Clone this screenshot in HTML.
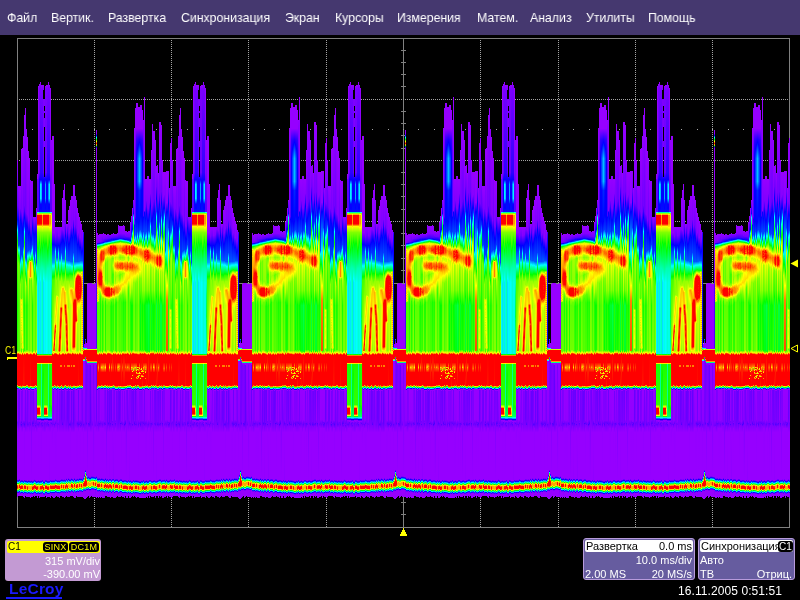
<!DOCTYPE html>
<html><head><meta charset="utf-8"><title>LeCroy</title>
<style>
html,body{margin:0;padding:0;background:#000;}
body{width:800px;height:600px;position:relative;overflow:hidden;font-family:"Liberation Sans",sans-serif;color:#fff;}
#menu{position:absolute;left:0;top:0;width:800px;height:35px;background:#45386f;}
#menu span{position:absolute;top:9.5px;font-size:13px;line-height:15px;color:#fff;white-space:nowrap;transform:scaleX(.945);transform-origin:0 0;}
#grid{position:absolute;left:17px;top:38px;width:771px;height:488px;border:1px solid #808080;}
.hl{position:absolute;left:18px;width:771px;height:1px;background:repeating-linear-gradient(90deg,#000 0,#000 1px,#a4a4a4 1px,#a4a4a4 2px);}
.vl{position:absolute;top:39px;width:1px;height:488px;background:repeating-linear-gradient(180deg,#000 0,#000 1px,#a4a4a4 1px,#a4a4a4 2px);}
#wave{position:absolute;left:17px;top:38px;width:773px;height:490px;overflow:hidden;}
.per{position:absolute;top:0;height:490px;white-space:nowrap;font-size:0;line-height:0;display:flex;}
.per i{display:block;width:1px;height:490px;flex:none;}
.bdg{position:absolute;top:542px;height:10px;background:#000;border-radius:3px;color:#ffff00;font-size:9px;line-height:10px;text-align:center;letter-spacing:0.3px;}
.wr{position:absolute;font-size:11px;line-height:13px;color:#fff;text-align:right;white-space:nowrap;}
.pb{position:absolute;top:538px;height:40px;background:#665c9f;border:1px solid #b79bdb;border-radius:3px;}
.wh{position:absolute;top:540px;height:12px;background:#fff;border-radius:2px;}
.bk{position:absolute;top:540px;font-size:11px;line-height:12px;color:#000;white-space:nowrap;}
.sp{position:absolute;display:block;width:1px;top:92px;height:218px;background:linear-gradient(#9600ff 0,#9600ff 3.5px,#00f 5.5px,#0ff 7.5px,#0f0 9.5px,#ff0 11.5px,#f00 13.5px,#ff0 15px,#0f0 16px,#00f 17px,#9600ff 18.5px,#9600ff 150px,#4b00ff 156px,#4b00ff 218px)}
#menu span,.wr,.bk,.bdg,.t{will-change:transform}
.c0{background:linear-gradient(#0000 0px,#0000 195px,#9600ff 195px,#9600ff 195.5px,#8100ff 204.5px,#00f 205.8px,#0ff 207.3px,#00ff2b 208.5px,#0f0 209px,#ff0 211.8px,#ffbc00 212.5px,#ffe300 213.5px,#fb0 217.5px,#ffde00 218.5px,#ffb800 219.5px,#f90 243.5px,#ffb700 248.5px,#ffe800 249.5px,#ffba00 250.5px,#ffe400 251.5px,#ffc000 255.5px,#ff0 256.4px,#f6ff00 256.5px,#ff0 256.6px,#ffc400 257.5px,#ffeb00 258.5px,#ffcf00 260.5px,#ff0 261.2px,#efff00 261.5px,#ff0 261.7px,#ffc400 262.5px,#ff0 263px,#45ff00 264.5px,#3aff00 265.5px,#52ff00 312.5px,#baff00 314.5px,#ff0 315.2px,#ffe700 315.5px,#ff3d00 316.5px,#f00 317.5px,#f00 347.5px,#ff5e00 348.5px,#ff0 349px,#0f0 349.8px,#0ff 350.7px,#00f 351.5px,#0500ff 351.5px,#9600ff 352.5px,#8b00ff 382.5px,#6d00ff 387.5px,#80f 388.5px,#9600ff 394.5px,#9600ff 439.5px,#6a00ff 440.5px,#00f 441.6px,#00a0ff 442.5px,#0ff 442.9px,#0f0 444px,#ff0 445.1px,#ffa900 445.5px,#f00 446.5px,#f00 448.5px,#ffbc00 449.5px,#ff0 449.7px,#0f0 450.6px,#00ffef 451.5px,#0ff 451.6px,#00f 452.7px,#7500ff 453.5px,#9600ff 454.5px,#9600ff 459px,#0000 459px,#0000 490px)}
.c1{background:linear-gradient(#0000 0px,#0000 197px,#9600ff 197px,#9600ff 197.5px,#7200ff 204.5px,#00f 205.6px,#0ff 207.1px,#00ff0b 208.5px,#0f0 208.7px,#ff0 212.2px,#ffeb00 212.5px,#ff0 213.1px,#f3ff00 213.5px,#ff0 213.8px,#ffe500 214.5px,#ffa300 228.5px,#ff1a00 240.5px,#ff5400 245.5px,#ff0 250.8px,#e7ff00 251.5px,#cdff00 254.5px,#f7ff00 255.5px,#abff00 256.5px,#f2ff00 257.5px,#cfff00 258.5px,#ecff00 260.5px,#baff00 261.5px,#f8ff00 262.5px,#52ff00 264.5px,#4bff00 265.5px,#63ff00 313.5px,#f0ff00 315.5px,#ff0 315.6px,#f00 317.5px,#f00 324.5px,#ffa700 329.5px,#f00 334.5px,#f00 346.5px,#ff6b00 347.5px,#ff0 348px,#0f0 348.8px,#0ff 349.6px,#00f 350.4px,#0d00ff 350.5px,#9600ff 351.5px,#7d00ff 352.5px,#8000ff 382.5px,#60f 385.5px,#9600ff 394.5px,#9600ff 439.5px,#7300ff 440.5px,#00f 441.6px,#0091ff 442.5px,#0ff 443px,#0f0 444.1px,#ff0 445.2px,#ffba00 445.5px,#f00 446.5px,#f00 448.5px,#ffa600 449.5px,#ff0 449.8px,#0f0 450.7px,#00ffd9 451.5px,#0ff 451.7px,#00f 452.7px,#6a00ff 453.5px,#9600ff 454.5px,#9600ff 460px,#0000 460px,#0000 490px)}
.c2{background:linear-gradient(#0000 0px,#0000 196px,#9600ff 196px,#9600ff 196.5px,#8500ff 202.5px,#6200ff 204.5px,#00f 205.5px,#0ff 206.9px,#0f0 208.4px,#15ff00 208.5px,#6bff00 209.5px,#ef0 212.5px,#ff0 213.5px,#ffa800 218.5px,#ff9200 229.5px,#ff0100 235.5px,#ff0e00 246.5px,#ff0 250.9px,#deff00 251.5px,#abff00 253.5px,#48ff00 265.5px,#60ff00 312.5px,#f5ff00 314.5px,#ff0 314.6px,#f00 316.5px,#f00 346.5px,#ff1300 347.5px,#ff0 348.3px,#0f0 349.1px,#0ff 349.9px,#00f 350.7px,#9600ff 351.5px,#8000ff 352.5px,#8300ff 382.5px,#7e00ff 384.5px,#5c00ff 385.5px,#8a00ff 389.5px,#9600ff 394.5px,#9600ff 439.5px,#5b00ff 440.5px,#00f 441.4px,#00b9ff 442.5px,#0ff 442.8px,#0f0 443.9px,#ff0 445px,#ff8b00 445.5px,#f00 446.5px,#f00 448.5px,#ffe300 449.5px,#ff0 449.6px,#0f0 450.4px,#00ff17 450.5px,#0ff 451.4px,#00f 452.4px,#0b00ff 452.5px,#80f 453.5px,#9600ff 458.5px,#9600ff 459px,#0000 459px,#0000 490px)}
.c3{background:linear-gradient(#0000 0px,#0000 196px,#9500ff 196px,#9500ff 196.5px,#7300ff 203.5px,#4f00ff 204.5px,#00f 205.3px,#0ff 206.7px,#0f0 208.2px,#37ff00 208.5px,#ff0 211.8px,#ff9600 213.5px,#ff3400 216.5px,#ff3a00 220.5px,#ffa600 228.5px,#ff9b00 230.5px,#f00 234.5px,#f00 246.5px,#fff800 251.5px,#ff0 251.7px,#7eff00 255.5px,#2bff00 260.5px,#18ff00 267.5px,#2fff00 312.5px,#a8ff00 314.5px,#ff0 315.1px,#ff3900 316.5px,#f00 317.5px,#f00 324.5px,#ff4900 329.5px,#f00 334.5px,#f00 347.5px,#ff0 348.3px,#0f0 349.2px,#0ff 350px,#006aff 350.5px,#00f 350.8px,#9600ff 351.5px,#9400ff 381.5px,#6800ff 385.5px,#9500ff 390.5px,#9600ff 440.5px,#00f 442px,#00faff 443.5px,#0ff 443.5px,#0f0 444.5px,#f7ff00 445.5px,#ff0 445.7px,#ffa600 447.5px,#ffbe00 449.5px,#ff0 449.9px,#a9ff00 450.5px,#0f0 451.2px,#0ff 452.1px,#00f 453.1px,#3b00ff 453.5px,#9600ff 454.5px,#9600ff 460px,#0000 460px,#0000 490px)}
.c4{background:linear-gradient(#0000 0px,#0000 196px,#9500ff 196px,#9500ff 196.5px,#6800ff 203.5px,#3900ff 204.5px,#00f 205.1px,#0ff 206.5px,#0f0 208px,#5cff00 208.5px,#ff0 210.7px,#ff3600 213.5px,#ff1900 214.5px,#ff1900 221.5px,#f90 225.5px,#ffcd00 229.5px,#ffad00 231.5px,#f00 235.5px,#ff0900 246.5px,#ff0 254.8px,#93ff00 258.5px,#5aff00 266.5px,#71ff00 312.5px,#e2ff00 314.5px,#ff0 314.7px,#f00 316.5px,#f00 324.5px,#ff5f00 327.5px,#ffe000 329.5px,#ff5800 331.5px,#f00 334.5px,#f00 346.5px,#ff9000 347.5px,#ff0 347.9px,#0f0 348.7px,#0ff 349.5px,#00f 350.3px,#2300ff 350.5px,#9600ff 351.5px,#8e00ff 382.5px,#7200ff 385.5px,#9400ff 390.5px,#9600ff 439.5px,#6800ff 440.5px,#00f 441.5px,#00a3ff 442.5px,#0ff 442.9px,#0f0 444px,#ff0 445.1px,#ffa400 445.5px,#f00 446.5px,#f00 448.5px,#ffc200 449.5px,#ff0 449.7px,#0cff00 450.5px,#0f0 450.6px,#0ff 451.6px,#00f 452.7px,#7800ff 453.5px,#9600ff 454.5px,#9600ff 459px,#0000 459px,#0000 490px)}
.c5{background:linear-gradient(#0000 0px,#0000 196px,#9400ff 196px,#9400ff 196.5px,#5800ff 203.5px,#1f00ff 204.5px,#00f 204.8px,#0ff 206.3px,#0f0 207.8px,#7fff00 208.5px,#ff0 210.5px,#ff4300 213.5px,#ff3f00 221.5px,#ffd900 225.5px,#fff900 229.5px,#ffac00 237.5px,#ff6800 238.5px,#ff9200 241.5px,#ff6f00 242.5px,#ff7900 252.5px,#ffad00 255.5px,#ff0 257.3px,#6fff00 260.5px,#26ff00 263.5px,#14ff00 271.5px,#2aff00 313.5px,#f4ff00 315.5px,#ff0 315.6px,#f60 316.5px,#f00 317.5px,#f00 324.5px,#ffb400 329.5px,#f00 334.5px,#f00 346.5px,#ff5900 347.5px,#ff0 348px,#0f0 348.9px,#0ff 349.7px,#00f 350.5px,#0200ff 350.5px,#9600ff 351.5px,#9000ff 382.5px,#6500ff 386.5px,#9400ff 390.5px,#9600ff 439.5px,#8400ff 440.5px,#00f 441.8px,#0073ff 442.5px,#0ff 443.3px,#00ffd2 443.5px,#0f0 444.4px,#ff0 445.4px,#fff300 445.5px,#ffa600 447.5px,#ffd000 449.5px,#ff0 449.7px,#67ff00 450.5px,#0f0 450.9px,#0ff 451.9px,#00f 452.9px,#50f 453.5px,#9600ff 454.5px,#9600ff 460px,#0000 460px,#0000 490px)}
.c6{background:linear-gradient(#0000 0px,#0000 195px,#9500ff 195px,#9500ff 195.5px,#7d00ff 200.5px,#40f 203.5px,#00f 204.5px,#0001ff 204.5px,#0ff 205.8px,#00ff83 206.5px,#0f0 207.4px,#af0 208.5px,#ff0 210px,#ff3c00 213.5px,#ff2100 215.5px,#ff4800 217.5px,#ff3200 221.5px,#fff600 224.5px,#ff0 225px,#b6ff00 229.5px,#f6ff00 242.5px,#ff0 242.9px,#ff5800 250.5px,#ff4e00 254.5px,#ff0 257.9px,#76ff00 260.5px,#3eff00 267.5px,#54ff00 311.5px,#c1ff00 313.5px,#ff0 314.1px,#ffdb00 314.5px,#ff3100 315.5px,#f00 316.5px,#f00 324.5px,#ff9600 328.5px,#ff8900 330.5px,#f00 334.5px,#f00 347.5px,#ff0 348.5px,#f2ff00 348.5px,#0f0 349.3px,#0ff 350.1px,#0072ff 350.5px,#00f 350.8px,#9600ff 351.5px,#9000ff 381.5px,#70f 385.5px,#9400ff 390.5px,#9600ff 440.5px,#00f 442.1px,#00edff 443.5px,#0ff 443.6px,#0f0 444.6px,#e4ff00 445.5px,#ff0 446px,#ffa600 447.5px,#ffb700 449.5px,#ff0 450px,#c1ff00 450.5px,#0f0 451.2px,#0ff 452.1px,#009aff 452.5px,#00f 453.1px,#3100ff 453.5px,#9600ff 454.5px,#9600ff 460px,#0000 460px,#0000 490px)}
.c7{background:linear-gradient(#0000 0px,#0000 196px,#9300ff 196px,#9300ff 196.5px,#7600ff 200.5px,#2c00ff 203.5px,#00f 204px,#003fff 204.5px,#0ff 205.5px,#00ff46 206.5px,#0f0 207px,#d5ff00 208.5px,#ff0 209.3px,#fb0 210.5px,#ff5900 214.5px,#ff8f00 220.5px,#ff0 223.2px,#f1ff00 223.5px,#c3ff00 227.5px,#d4ff00 242.5px,#ff0 245.1px,#ffe800 246.5px,#ff2000 252.5px,#f40 256.5px,#ffb800 257.5px,#ff0 258.9px,#abff00 260.5px,#74ff00 264.5px,#89ff00 312.5px,#f9ff00 314.5px,#ff0 314.5px,#f00 316.5px,#f00 324.5px,#ff8a00 329.5px,#f00 334.5px,#f00 346.5px,#ff8300 347.5px,#ff0 347.9px,#0f0 348.7px,#0ff 349.5px,#00f 350.4px,#1b00ff 350.5px,#9600ff 351.5px,#8100ff 352.5px,#8500ff 383.5px,#5900ff 385.5px,#8900ff 388.5px,#9600ff 394.5px,#9600ff 440.5px,#6f00ff 441.5px,#00f 442.6px,#0098ff 443.5px,#0ff 443.9px,#0f0 445.1px,#ff0 446.2px,#ffb200 446.5px,#f00 447.5px,#f00 449.5px,#ffb000 450.5px,#ff0 450.8px,#0f0 451.7px,#00ffe3 452.5px,#0ff 452.6px,#00f 453.7px,#6f00ff 454.5px,#9600ff 455.5px,#9600ff 460px,#0000 460px,#0000 490px)}
.c8{background:linear-gradient(#0000 0px,#0000 196px,#9200ff 196px,#9200ff 196.5px,#7100ff 200.5px,#1b00ff 203.5px,#00f 203.8px,#0ff 205.2px,#0f0 206.7px,#89ff00 207.5px,#efff00 208.5px,#ff0 209px,#ffa900 211.5px,#ff8e00 215.5px,#ff0 218.9px,#87ff00 222.5px,#59ff00 225.5px,#58ff00 241.5px,#bcff00 246.5px,#ff0 247.4px,#f00 251px,#f00 256.9px,#ff0 259.2px,#75ff00 260.5px,#21ff00 263.5px,#10ff00 267.5px,#26ff00 312.5px,#e0ff00 314.5px,#ff0 314.7px,#f00 316.5px,#f00 324.5px,#fffa00 329.5px,#ff7400 331.5px,#f00 334.5px,#f00 346.5px,#ffad00 347.5px,#ff0 347.8px,#0f0 348.6px,#0ff 349.4px,#00f 350.2px,#3400ff 350.5px,#9600ff 351.5px,#7500ff 352.5px,#7c00ff 383.5px,#6000ff 386.5px,#8200ff 387.5px,#9600ff 394.5px,#9600ff 439.5px,#60f 440.5px,#00f 441.5px,#00a7ff 442.5px,#0ff 442.9px,#0f0 444px,#ff0 445.1px,#ffa000 445.5px,#f00 446.5px,#f00 448.5px,#ffc800 449.5px,#ff0 449.7px,#05ff00 450.5px,#0f0 450.5px,#0ff 451.6px,#00f 452.6px,#7b00ff 453.5px,#9600ff 454.5px,#9600ff 458px,#0000 458px,#0000 490px)}
.c9{background:linear-gradient(#0000 0px,#0000 197px,#8e00ff 197px,#8e00ff 197.5px,#6c00ff 200.5px,#0b00ff 203.5px,#00f 203.6px,#0ff 205.1px,#0f0 206.5px,#acff00 207.5px,#ff0 208.4px,#fff900 208.5px,#ff8900 211.5px,#ff9f00 215.5px,#ff0 218.4px,#baff00 220.5px,#80ff00 224.5px,#7eff00 241.5px,#a5ff00 245.5px,#e9ff00 247.5px,#ff0 247.7px,#f00 250.3px,#f00 257.6px,#fff200 259.5px,#ff0 259.7px,#90ff00 261.5px,#5eff00 267.5px,#74ff00 313.5px,#faff00 315.5px,#ff0 315.5px,#f00 317.5px,#f00 347.5px,#fff000 348.5px,#ff0 348.5px,#0f0 349.4px,#0ff 350.2px,#0091ff 350.5px,#00f 350.9px,#9600ff 351.5px,#8000ff 384.5px,#9600ff 440.5px,#7d00ff 441.5px,#00f 442.7px,#0080ff 443.5px,#0ff 444.1px,#0f0 445.2px,#ff0 446.4px,#ff0900 447.5px,#f00 449.5px,#ff8d00 450.5px,#ff0 450.9px,#0f0 451.8px,#00ffc0 452.5px,#0ff 452.8px,#00f 453.8px,#5e00ff 454.5px,#9600ff 455.5px,#9600ff 458px,#0000 458px,#0000 490px)}
.c10{background:linear-gradient(#0000 0px,#0000 196px,#9100ff 196px,#9100ff 196.5px,#6500ff 200.5px,#00f 203.3px,#0009ff 203.5px,#0ff 204.8px,#0f0 206.2px,#3eff00 206.5px,#c8ff00 207.5px,#ff0 208.1px,#fd0 208.5px,#ff9100 210.5px,#ff7900 214.5px,#ff0 217.8px,#b9ff00 219.5px,#6eff00 223.5px,#61ff00 241.5px,#7eff00 245.5px,#c5ff00 247.5px,#ff0 248px,#f00 250.2px,#f00 257.8px,#ffdc00 259.5px,#ff0 260px,#96ff00 261.5px,#5bff00 267.5px,#70ff00 311.5px,#ff0 314.4px,#fff800 314.5px,#ff4e00 315.5px,#f00 316.5px,#f00 346.5px,#ff7a00 347.5px,#ff0 347.9px,#0f0 348.7px,#0ff 349.6px,#00f 350.4px,#1600ff 350.5px,#9600ff 351.5px,#6a00ff 352.5px,#60f 385.5px,#9600ff 394.5px,#9500ff 440.5px,#00f 442px,#0ff 443.5px,#00fffc 443.5px,#0f0 444.5px,#ff0 445.5px,#fffd00 445.5px,#ff3900 446.5px,#f00 448.5px,#ff4f00 449.5px,#ff0 450.1px,#0f0 451.1px,#0ff 452px,#007dff 452.5px,#00f 453px,#4000ff 453.5px,#9600ff 454.5px,#9600ff 459px,#0000 459px,#0000 490px)}
.c11{background:linear-gradient(#0000 0px,#0000 196px,#8f00ff 196px,#8f00ff 196.5px,#5d00ff 200.5px,#00f 202.9px,#0027ff 203.5px,#0ff 204.6px,#0f0 205.9px,#6fff00 206.5px,#f7ff00 207.5px,#ff0 207.6px,#ff6e00 209.5px,#ff3e00 212.5px,#ff8100 215.5px,#ff0 218.3px,#c7ff00 219.5px,#97ff00 222.5px,#89ff00 243.5px,#d3ff00 247.5px,#ff0 247.9px,#f00 250.2px,#f00 257.8px,#ffc200 259.5px,#ff0 260.3px,#af0 261.5px,#68ff00 264.5px,#5cff00 268.5px,#71ff00 311.5px,#d0ff00 313.5px,#ff0 314.1px,#fd0 314.5px,#f30 315.5px,#f00 316.5px,#f00 347.5px,#ffba00 348.5px,#ff0 348.7px,#0f0 349.5px,#0ff 350.4px,#00f 351.2px,#3c00ff 351.5px,#9600ff 352.5px,#7600ff 353.5px,#7d00ff 383.5px,#5200ff 385.5px,#80f 388.5px,#9600ff 394.5px,#9600ff 441.5px,#00f 443px,#00feff 444.5px,#0ff 444.5px,#0f0 445.5px,#fdff00 446.5px,#ff0 446.5px,#ff3d00 447.5px,#f00 449.5px,#ff4a00 450.5px,#ff0 451.2px,#0f0 452.1px,#0ff 453px,#0082ff 453.5px,#00f 454.1px,#3d00ff 454.5px,#9600ff 455.5px,#9600ff 459px,#0000 459px,#0000 490px)}
.c12{background:linear-gradient(#0000 0px,#0000 197px,#80f 197px,#80f 197.5px,#5600ff 200.5px,#0d00ff 202.5px,#00f 202.7px,#0047ff 203.5px,#0ff 204.4px,#00ff18 205.5px,#0f0 205.6px,#ff0 207.2px,#ffd200 207.5px,#ff3d00 210.5px,#ff4a00 214.5px,#ff0 217.9px,#e1ff00 218.5px,#a4ff00 221.5px,#8bff00 243.5px,#cf0 247.5px,#ff0 248px,#f00 250.4px,#f00 257.8px,#fb0 259.5px,#ff0 260.4px,#afff00 261.5px,#69ff00 264.5px,#5dff00 268.5px,#73ff00 312.5px,#ff0 314.5px,#ff0 314.5px,#f50 315.5px,#f00 316.5px,#f00 324.5px,#ffe300 329.5px,#ff5900 331.5px,#f00 334.5px,#f00 346.5px,#ff4c00 347.5px,#ff0 348.1px,#0f0 348.9px,#0ff 349.7px,#000aff 350.5px,#00f 350.5px,#9600ff 351.5px,#6b00ff 352.5px,#6500ff 385.5px,#9600ff 394.5px,#9200ff 440.5px,#00f 442px,#0ff 443.4px,#00fff5 443.5px,#0f0 444.5px,#ff0 445.5px,#fff700 445.5px,#f30 446.5px,#f00 448.5px,#ff5600 449.5px,#ff0 450.1px,#0f0 451.1px,#0ff 452px,#0076ff 452.5px,#00f 453px,#4300ff 453.5px,#9600ff 454.5px,#9600ff 459px,#0000 459px,#0000 490px)}
.c13{background:linear-gradient(#0000 0px,#0000 197px,#8500ff 197px,#8500ff 197.5px,#4d00ff 200.5px,#00f 202.1px,#006dff 203.5px,#0ff 204.2px,#0f0 205.4px,#ebff00 206.5px,#ff0 206.6px,#f00 208.4px,#f00 215.6px,#ff0 218.2px,#e7ff00 218.5px,#9dff00 221.5px,#8eff00 245.5px,#e1ff00 248.5px,#ff0 248.9px,#ff4600 251.5px,#ff6900 252.5px,#ff3100 255.5px,#ff4800 257.5px,#ff0 259.8px,#c3ff00 260.5px,#69ff00 262.5px,#2dff00 268.5px,#43ff00 312.5px,#d0ff00 314.5px,#ff0 314.8px,#ff0400 316.5px,#f00 347.5px,#ffe800 348.5px,#ff0 348.6px,#0f0 349.4px,#0ff 350.2px,#09f 350.5px,#00f 350.9px,#9600ff 351.5px,#6b00ff 352.5px,#70f 384.5px,#5600ff 385.5px,#8700ff 389.5px,#9600ff 394.5px,#9600ff 440.5px,#00f 442px,#00f6ff 443.5px,#0ff 443.5px,#0f0 444.5px,#f2ff00 445.5px,#ff0 445.6px,#ff4500 446.5px,#f00 447.5px,#f00 448.5px,#ff3f00 449.5px,#ff0 450.2px,#0f0 451.1px,#0ff 452.1px,#008dff 452.5px,#00f 453.1px,#3800ff 453.5px,#9600ff 454.5px,#9600ff 460px,#0000 460px,#0000 490px)}
.c14{background:linear-gradient(#0000 0px,#0000 196px,#8b00ff 196px,#8b00ff 196.5px,#5f00ff 199.5px,#00f 201.9px,#0026ff 202.5px,#00b0ff 203.5px,#0ff 203.9px,#0f0 205.2px,#ff0 206.4px,#ffef00 206.5px,#f00 208.2px,#f00 215.8px,#ff0 218.1px,#cdff00 218.5px,#89ff00 220.5px,#59ff00 239.5px,#83ff00 246.5px,#a9ff00 247.5px,#ff0 248.5px,#ffa300 249.5px,#f00 250.5px,#f00 251.7px,#ff0900 255.5px,#f00 255.7px,#f00 256.9px,#ff0 259.5px,#a4ff00 260.5px,#71ff00 261.5px,#21ff00 264.5px,#13ff00 268.5px,#29ff00 312.5px,#9dff00 314.5px,#ff0 315.2px,#ff4500 316.5px,#f00 317.5px,#f00 324.5px,#ff9000 329.5px,#f00 334.5px,#f00 347.5px,#ff0 348.5px,#fbff00 348.5px,#0f0 349.3px,#0ff 350.1px,#007bff 350.5px,#00f 350.8px,#9600ff 351.5px,#6700ff 352.5px,#6700ff 380.5px,#9600ff 394.5px,#9600ff 441.5px,#00f 443.1px,#00e7ff 444.5px,#0ff 444.6px,#0f0 445.7px,#ff0 446.8px,#ff5700 447.5px,#f00 448.5px,#f00 449.5px,#ff2800 450.5px,#ff0 451.3px,#0f0 452.2px,#0ff 453.2px,#00a4ff 453.5px,#00f 454.3px,#9600ff 455.5px,#9600ff 459px,#0000 459px,#0000 490px)}
.c15{background:linear-gradient(#0000 0px,#0000 196px,#8900ff 196px,#8900ff 196.5px,#5b00ff 199.5px,#1500ff 201.5px,#00f 201.9px,#0037ff 202.5px,#0ff 203.6px,#0f0 205px,#ff0 206.3px,#ffe000 206.5px,#ff6f00 207.5px,#ff0300 210.5px,#ff3700 215.5px,#ff0 217.6px,#a9ff00 218.5px,#6bff00 220.5px,#9fff00 227.5px,#38ff00 236.5px,#4f0 244.5px,#c8ff00 248.5px,#ff0 249.1px,#ff7200 250.5px,#ff4100 251.5px,#ff6a00 252.5px,#ff3e00 253.5px,#ff8700 256.5px,#ff0 258.7px,#63ff00 261.5px,#28ff00 268.5px,#3fff00 313.5px,#e8ff00 315.5px,#ff0 315.7px,#f00 317.5px,#ff3100 329.5px,#f00 334.5px,#f00 346.5px,#ff2600 347.5px,#ff0 348.2px,#0f0 349px,#0ff 349.9px,#00f 350.7px,#9600ff 351.5px,#8e00ff 382.5px,#7200ff 383.5px,#7b00ff 385.5px,#5000ff 386.5px,#7600ff 387.5px,#9400ff 390.5px,#9600ff 440.5px,#00f 442px,#00f8ff 443.5px,#0ff 443.5px,#0f0 444.5px,#f5ff00 445.5px,#ff0 445.7px,#ffa600 447.5px,#ffbd00 449.5px,#ff0 449.9px,#acff00 450.5px,#0f0 451.2px,#0ff 452.1px,#00f 453.1px,#3a00ff 453.5px,#9600ff 454.5px,#9600ff 459px,#0000 459px,#0000 490px)}
.c16{background:linear-gradient(#0000 0px,#0000 195px,#8e00ff 195px,#8e00ff 195.5px,#5800ff 199.5px,#00f 201.6px,#0042ff 202.5px,#0ff 203.5px,#0f0 204.9px,#ff0 206.2px,#ffc800 206.5px,#f00 208.3px,#f00 215px,#ff6800 216.5px,#ff0 217.4px,#eaff00 217.5px,#76ff00 220.5px,#df0 227.5px,#43ff00 236.5px,#52ff00 244.5px,#a5ff00 247.5px,#ff0 248.7px,#ff7900 250.5px,#ff1400 254.5px,#ff0 258.5px,#53ff00 261.5px,#1fff00 267.5px,#34ff00 311.5px,#9fff00 313.5px,#ff0 314.4px,#fff800 314.5px,#ff4e00 315.5px,#f00 316.5px,#f00 324.5px,#ff3a00 329.5px,#f00 334.5px,#f00 346.5px,#ffb100 347.5px,#ff0 347.7px,#0f0 348.6px,#0ff 349.4px,#00f 350.2px,#3600ff 350.5px,#9600ff 351.5px,#7e00ff 352.5px,#7b00ff 387.5px,#9600ff 394.5px,#8f00ff 440.5px,#00f 441.9px,#0ff 443.4px,#00ffed 443.5px,#0f0 444.4px,#ff0 445.4px,#fff100 445.5px,#ff2d00 446.5px,#f00 448.5px,#ff5e00 449.5px,#ff0 450.1px,#0f0 451px,#0ff 452px,#006eff 452.5px,#00f 453px,#4700ff 453.5px,#9600ff 454.5px,#9600ff 460px,#0000 460px,#0000 490px)}
.c17{background:linear-gradient(#0000 0px,#0000 196px,#80f 196px,#80f 196.5px,#5400ff 199.5px,#0800ff 201.5px,#00f 201.6px,#0069ff 202.5px,#0ff 203.3px,#0f0 204.6px,#a6ff00 205.5px,#ff0 206.3px,#ff1800 208.5px,#ff0b00 210.5px,#ff3700 211.5px,#ff0800 212.5px,#ff0 218.5px,#d7ff00 219.5px,#ff0 222.5px,#fb0 227.5px,#ff0 231.3px,#c7ff00 234.5px,#b2ff00 238.5px,#ceff00 245.5px,#ff0 246.9px,#ff5700 251.5px,#ff4000 253.5px,#ff6a00 256.5px,#ff0 258.9px,#d7ff00 259.5px,#92ff00 261.5px,#63ff00 267.5px,#79ff00 312.5px,#daff00 314.5px,#ff0 314.9px,#ffc800 315.5px,#ff1e00 316.5px,#f00 317.5px,#f00 346.5px,#ff2800 347.5px,#ff0 348.2px,#0f0 349px,#0ff 349.8px,#00f 350.7px,#9600ff 351.5px,#7400ff 352.5px,#7600ff 385.5px,#9600ff 394.5px,#9600ff 441.5px,#00f 443.1px,#00d2ff 444.5px,#0ff 444.7px,#0f0 445.7px,#bcff00 446.5px,#ff0 447.1px,#fc0 447.5px,#ffa600 448.5px,#ffa900 450.5px,#ff0 451.4px,#f3ff00 451.5px,#0f0 452.4px,#0ff 453.3px,#00c3ff 453.5px,#00f 454.4px,#9600ff 455.5px,#9600ff 460px,#0000 460px,#0000 490px)}
.c18{background:linear-gradient(#0000 0px,#0000 196px,#8700ff 196px,#8700ff 196.5px,#5000ff 199.5px,#0100ff 201.5px,#00f 201.5px,#0ff 203px,#0f0 204.4px,#b7ff00 205.5px,#ff0 206.2px,#ff7400 207.5px,#f00 209.2px,#f00 214.7px,#ff0 217.5px,#fdff00 217.5px,#aeff00 219.5px,#beff00 221.5px,#ff0 223.1px,#ff9a00 225.5px,#ff7c00 228.5px,#ff0 231.9px,#9bff00 234.5px,#7bff00 241.5px,#afff00 245.5px,#ff0 247.2px,#ff9700 249.5px,#ff7d00 252.5px,#ffa700 255.5px,#ff0 257.5px,#4dff00 261.5px,#19ff00 266.5px,#30ff00 312.5px,#ff0 314.3px,#f00 316.5px,#f00 324.5px,#ff4d00 329.5px,#f00 334.5px,#f00 347.5px,#ff6f00 348.5px,#ff0 349px,#0f0 349.8px,#0ff 350.6px,#00f 351.4px,#0f00ff 351.5px,#9600ff 352.5px,#9400ff 381.5px,#7500ff 383.5px,#8300ff 384.5px,#5c00ff 385.5px,#9500ff 390.5px,#9600ff 440.5px,#6500ff 441.5px,#00f 442.5px,#00a9ff 443.5px,#0ff 443.9px,#0f0 445px,#ff0 446.1px,#ff9e00 446.5px,#f00 447.5px,#f00 449.5px,#ffcb00 450.5px,#ff0 450.7px,#02ff00 451.5px,#0f0 451.5px,#0ff 452.6px,#00f 453.6px,#7c00ff 454.5px,#9600ff 455.5px,#9600ff 460px,#0000 460px,#0000 490px)}
.c19{background:linear-gradient(#0000 0px,#0000 196px,#8500ff 196px,#8500ff 196.5px,#4c00ff 199.5px,#00f 201.4px,#0009ff 201.5px,#0ff 202.8px,#0f0 204.2px,#36ff00 204.5px,#beff00 205.5px,#ff0 206.2px,#ffdf00 206.5px,#ff2b00 210.5px,#ff4600 213.5px,#ff0 217.3px,#f3ff00 217.5px,#c8ff00 219.5px,#f3ff00 222.5px,#ff0 222.9px,#ff6b00 227.5px,#ff8300 229.5px,#ff0 232.8px,#bdff00 234.5px,#9eff00 238.5px,#d8ff00 245.5px,#ff0 246.5px,#ff8400 249.5px,#ff8000 254.5px,#ff0 257.3px,#6bff00 260.5px,#1bff00 264.5px,#1aff00 268.5px,#31ff00 313.5px,#ff0 315.3px,#f00 317.5px,#f00 347.5px,#f70 348.5px,#ff0 348.9px,#0f0 349.8px,#0ff 350.6px,#00f 351.4px,#1400ff 351.5px,#9600ff 352.5px,#7200ff 353.5px,#7200ff 380.5px,#9600ff 394.5px,#9600ff 440.5px,#5000ff 441.5px,#00f 442.3px,#00cdff 443.5px,#0ff 443.7px,#0f0 444.8px,#ff0 445.9px,#ff7500 446.5px,#f00 447.5px,#f00 448.5px,#ff0100 449.5px,#ff0 450.4px,#0f0 451.4px,#0ff 452.3px,#00cbff 452.5px,#00f 453.4px,#9600ff 454.5px,#9600ff 459px,#0000 459px,#0000 490px)}
.c20{background:linear-gradient(#0000 0px,#0000 195px,#8c00ff 195px,#8c00ff 195.5px,#6300ff 198.5px,#2400ff 200.5px,#00f 201.2px,#0020ff 201.5px,#0ff 202.6px,#00ff51 203.5px,#0f0 204.1px,#d3ff00 205.5px,#ff0 206.2px,#ffb400 207.5px,#ff7200 210.5px,#ff7300 212.5px,#ff0 217.4px,#c3ff00 219.5px,#d8ff00 221.5px,#ff0 222.3px,#ff6b00 225.5px,#ff4c00 227.5px,#ff5d00 229.5px,#ff0 232.8px,#dbff00 233.5px,#a0ff00 237.5px,#d1ff00 244.5px,#ff0 246.2px,#f80 250.5px,#ff8500 254.5px,#ff0 257px,#b8ff00 258.5px,#61ff00 264.5px,#78ff00 312.5px,#ff0 314.9px,#ffe000 315.5px,#ff3600 316.5px,#f00 317.5px,#f00 324.5px,#ffa400 329.5px,#f00 334.5px,#f00 347.5px,#ff6300 348.5px,#ff0 349px,#0f0 349.8px,#0ff 350.6px,#00f 351.5px,#0800ff 351.5px,#9600ff 352.5px,#7c00ff 353.5px,#7400ff 386.5px,#9600ff 394.5px,#9600ff 440.5px,#6500ff 441.5px,#00f 442.5px,#00a9ff 443.5px,#0ff 443.9px,#0f0 445px,#ff0 446.1px,#ff9e00 446.5px,#f00 447.5px,#f00 449.5px,#ffcb00 450.5px,#ff0 450.7px,#02ff00 451.5px,#0f0 451.5px,#0ff 452.6px,#00f 453.6px,#7c00ff 454.5px,#9600ff 457.5px,#9600ff 458px,#0000 458px,#0000 490px)}
.c21{background:linear-gradient(#0000 0px,#0000 187px,#9600ff 187px,#9600ff 187.5px,#8700ff 195.5px,#40f 199.5px,#2000ff 200.5px,#00f 200.9px,#004aff 201.5px,#0ff 202.4px,#00ff32 203.5px,#0f0 203.9px,#dcff00 205.5px,#ff0 206.2px,#ffc000 207.5px,#ff8b00 210.5px,#ff0 216px,#b5ff00 219.5px,#c9ff00 221.5px,#ff0 222.9px,#ff4c00 227.5px,#ff8a00 230.5px,#ff0 233px,#b5ff00 234.5px,#95ff00 237.5px,#b4ff00 242.5px,#ff0 245.5px,#ffb200 248.5px,#ff9b00 251.5px,#ffa800 254.5px,#ff0 256.3px,#97ff00 258.5px,#50ff00 264.5px,#67ff00 312.5px,#f5ff00 314.5px,#ff0 314.6px,#f00 316.5px,#f00 324.5px,#ffbf00 328.5px,#ffc800 329.5px,#ff6f00 330.5px,#ff8b00 331.5px,#f00 334.5px,#f00 346.5px,#ff0c00 347.5px,#ff0 348.3px,#0f0 349.1px,#0ff 349.9px,#00f 350.7px,#9600ff 351.5px,#6e00ff 352.5px,#6d00ff 385.5px,#9600ff 394.5px,#9600ff 441.5px,#7800ff 442.5px,#00f 443.6px,#0ff 445.1px,#00ffb1 445.5px,#0f0 446.3px,#ff0 447.4px,#ffea00 447.5px,#ffa600 448.5px,#ffa600 450.5px,#ffdc00 451.5px,#ff0 451.6px,#0f0 452.7px,#0ff 453.7px,#00f 454.8px,#6500ff 455.5px,#9600ff 456.5px,#9600ff 459px,#0000 459px,#0000 490px)}
.c22{background:linear-gradient(#0000 0px,#0000 188px,#9600ff 188px,#9600ff 188.5px,#8600ff 195.5px,#4000ff 199.5px,#1a00ff 200.5px,#00f 200.7px,#0ff 202.1px,#00ff0a 203.5px,#0f0 203.6px,#f1ff00 205.5px,#ff0 205.9px,#ff8700 209.5px,#ff8300 212.5px,#ff0 215.3px,#cbff00 216.5px,#8f0 219.5px,#caff00 222.5px,#ff0 223.3px,#ff6900 225.5px,#ff4a00 229.5px,#ff0 232.3px,#b6ff00 233.5px,#62ff00 237.5px,#85ff00 241.5px,#ff0 246.5px,#ff9e00 250.5px,#fc0 253.5px,#ff0 254.6px,#78ff00 257.5px,#41ff00 262.5px,#52ff00 313.5px,#f4ff00 315.5px,#ff0 315.6px,#f00 317.5px,#f00 324.5px,#f90 328.5px,#ff6c00 329.5px,#ff8900 330.5px,#f00 334.5px,#f00 347.5px,#ffa200 348.5px,#ff0 348.8px,#0f0 349.6px,#0ff 350.4px,#00f 351.3px,#2d00ff 351.5px,#9600ff 352.5px,#6700ff 353.5px,#6700ff 380.5px,#9600ff 394.5px,#9600ff 440.5px,#9300ff 441.5px,#00f 443px,#0ff 444.5px,#00fff7 444.5px,#0f0 445.5px,#ff0 446.5px,#fff900 446.5px,#ff3400 447.5px,#f00 449.5px,#f50 450.5px,#ff0 451.1px,#0f0 452.1px,#0ff 453px,#07f 453.5px,#00f 454px,#4300ff 454.5px,#9600ff 455.5px,#9600ff 459px,#0000 459px,#0000 490px)}
.c23{background:linear-gradient(#0000 0px,#0000 188px,#9600ff 188px,#9600ff 188.5px,#8500ff 195.5px,#3c00ff 199.5px,#1500ff 200.5px,#00f 200.7px,#0ff 202px,#00ff94 202.5px,#0f0 203.4px,#a6ff00 204.5px,#ff0 206.1px,#ffad00 207.5px,#ff6c00 210.5px,#ff7800 212.5px,#ff0 215.5px,#a8ff00 217.5px,#80ff00 219.5px,#9bff00 221.5px,#ff0 223px,#ff5d00 225.5px,#ff2d00 227.5px,#f50 230.5px,#ff0 232.6px,#bf0 233.5px,#67ff00 236.5px,#81ff00 240.5px,#ff0 245.7px,#ffd500 247.5px,#ffc200 251.5px,#ff0 253.1px,#80ff00 256.5px,#48ff00 260.5px,#57ff00 312.5px,#d1ff00 314.5px,#ff0 314.8px,#ff1000 316.5px,#f00 317.5px,#f00 324.5px,#ff3600 328.5px,#f00 334.5px,#f00 347.5px,#fd0 348.5px,#ff0 348.6px,#0f0 349.4px,#0ff 350.2px,#00a6ff 350.5px,#00f 350.9px,#9600ff 351.5px,#6a00ff 352.5px,#70f 384.5px,#4800ff 385.5px,#6b00ff 386.5px,#9600ff 394.5px,#9600ff 440.5px,#5b00ff 441.5px,#00f 442.4px,#00b9ff 443.5px,#0ff 443.8px,#0f0 444.9px,#96ff00 445.5px,#ff0 446.2px,#ffd700 446.5px,#ffa600 447.5px,#ffa600 449.5px,#fff500 450.5px,#ff0 450.5px,#0f0 451.5px,#0ff 452.4px,#00e9ff 452.5px,#00f 453.5px,#80f 454.5px,#9600ff 458.5px,#9600ff 459px,#0000 459px,#0000 490px)}
.c24{background:linear-gradient(#0000 0px,#0000 188px,#9600ff 188px,#9600ff 188.5px,#8600ff 195.5px,#4000ff 199.5px,#1a00ff 200.5px,#00f 200.7px,#0ff 202.2px,#00ff0d 203.5px,#0f0 203.6px,#e7ff00 205.5px,#ff0 206.2px,#ff6300 210.5px,#ff8600 213.5px,#ff0 216px,#baff00 217.5px,#91ff00 219.5px,#c8ff00 222.5px,#ff0 223.2px,#ff4b00 225.5px,#ff3e00 226.5px,#f60 230.5px,#ff0 232.7px,#c5ff00 233.5px,#84ff00 236.5px,#ff0 244.8px,#ffd700 247.5px,#ff0 251.1px,#f0ff00 252.5px,#65ff00 257.5px,#3f0 264.5px,#4cff00 313.5px,#f2ff00 315.5px,#ff0 315.6px,#f00 317.5px,#ff2300 330.5px,#f00 347.5px,#ff9b00 348.5px,#ff0 348.8px,#0f0 349.6px,#0ff 350.5px,#00f 351.3px,#2900ff 351.5px,#9600ff 352.5px,#8d00ff 382.5px,#5f00ff 385.5px,#7d00ff 386.5px,#9300ff 390.5px,#9600ff 440.5px,#6500ff 441.5px,#00f 442.5px,#00a9ff 443.5px,#0ff 443.9px,#0f0 445px,#ff0 446.1px,#ff9f00 446.5px,#f00 447.5px,#f00 449.5px,#ffca00 450.5px,#ff0 450.7px,#03ff00 451.5px,#0f0 451.5px,#0ff 452.6px,#00f 453.6px,#7c00ff 454.5px,#9600ff 457.5px,#9600ff 458px,#0000 458px,#0000 490px)}
.c25{background:linear-gradient(#0000 0px,#0000 188px,#9600ff 188px,#9600ff 188.5px,#8700ff 195.5px,#4300ff 199.5px,#1e00ff 200.5px,#00f 200.9px,#005aff 201.5px,#0ff 202.4px,#00ff25 203.5px,#0f0 203.8px,#e8ff00 205.5px,#ff0 206px,#ff3b00 210.5px,#ff2e00 212.5px,#ffae00 215.5px,#ff0 216.6px,#c0ff00 217.5px,#8f0 219.5px,#c2ff00 222.5px,#ff0 223.2px,#ff4200 225.5px,#ff3700 229.5px,#ff3c00 230.5px,#ff0 232.9px,#d0ff00 233.5px,#8bff00 235.5px,#91ff00 238.5px,#ff0 244.5px,#ffda00 246.5px,#ff0 248.4px,#5eff00 256.5px,#30ff00 265.5px,#48ff00 312.5px,#fdff00 314.5px,#ff0 314.5px,#ff5900 315.5px,#f00 316.5px,#f00 324.5px,#ff6900 329.5px,#f00 334.5px,#f00 347.5px,#ff8c00 348.5px,#ff0 348.9px,#0f0 349.7px,#0ff 350.5px,#00f 351.3px,#2000ff 351.5px,#9600ff 352.5px,#7d00ff 353.5px,#8200ff 383.5px,#6100ff 386.5px,#8300ff 387.5px,#9600ff 394.5px,#9600ff 441.5px,#5f00ff 442.5px,#00f 443.5px,#00b2ff 444.5px,#0ff 444.8px,#0f0 445.9px,#8cff00 446.5px,#ff0 447.3px,#ffd900 447.5px,#ffa600 448.5px,#ffa600 450.5px,#fff100 451.5px,#ff0 451.6px,#0f0 452.5px,#0ff 453.5px,#00f 454.5px,#0600ff 454.5px,#8300ff 455.5px,#9600ff 458.5px,#9600ff 459px,#0000 459px,#0000 490px)}
.c26{background:linear-gradient(#0000 0px,#0000 187px,#9600ff 187px,#9600ff 187.5px,#80f 195.5px,#4700ff 199.5px,#00f 200.9px,#0032ff 201.5px,#0ff 202.6px,#00ff45 203.5px,#0f0 204px,#d6ff00 205.5px,#ff0 206.1px,#ff6800 208.5px,#ff1600 212.5px,#ff0 216.6px,#c9ff00 217.5px,#9f0 219.5px,#c3ff00 222.5px,#ff0 223.6px,#ff9300 225.5px,#ff5600 229.5px,#ff0 232.7px,#d7ff00 233.5px,#a4ff00 235.5px,#ff0 243.6px,#ffde00 246.5px,#ff0 248.2px,#61ff00 256.5px,#14ff00 264.5px,#2dff00 312.5px,#ff0 314.3px,#f00 316.5px,#ff2500 328.5px,#f00 347.5px,#ffa500 348.5px,#ff0 348.8px,#0f0 349.6px,#0ff 350.4px,#00f 351.2px,#2f00ff 351.5px,#9600ff 352.5px,#9000ff 383.5px,#7900ff 385.5px,#9600ff 394.5px,#9600ff 441.5px,#6200ff 442.5px,#00f 443.5px,#00adff 444.5px,#0ff 444.9px,#0f0 446px,#ff0 447.1px,#f90 447.5px,#f00 448.5px,#f00 450.5px,#ffd100 451.5px,#ff0 451.7px,#0f0 452.5px,#00ff05 452.5px,#0ff 453.5px,#00f 454.6px,#7f00ff 455.5px,#9600ff 458.5px,#9600ff 459px,#0000 459px,#0000 490px)}
.c27{background:linear-gradient(#0000 0px,#0000 188px,#9600ff 188px,#9600ff 188.5px,#8900ff 195.5px,#4b00ff 199.5px,#00f 201.3px,#000aff 201.5px,#0ff 202.7px,#00ff61 203.5px,#0f0 204.1px,#cfff00 205.5px,#ff0 206.1px,#ff9800 207.5px,#ff1700 211.5px,#ff4500 214.5px,#ff7e00 215.5px,#fff500 216.5px,#ff0 216.8px,#a3ff00 219.5px,#adff00 221.5px,#ff0 223.1px,#ff8300 225.5px,#ff5400 228.5px,#ff0 233.5px,#b9ff00 235.5px,#ff0 241.3px,#ffd900 244.5px,#ff0 246.8px,#8dff00 253.5px,#29ff00 264.5px,#41ff00 312.5px,#c5ff00 314.5px,#ff0 314.9px,#ff1700 316.5px,#f00 317.5px,#ff2700 329.5px,#f00 347.5px,#ffc200 348.5px,#ff0 348.7px,#0f0 349.5px,#0ff 350.3px,#00f 351.2px,#4000ff 351.5px,#9600ff 352.5px,#7900ff 353.5px,#7d00ff 382.5px,#60f 385.5px,#4300ff 386.5px,#7a00ff 388.5px,#9600ff 394.5px,#9600ff 441.5px,#00f 443.1px,#00d3ff 444.5px,#0ff 444.7px,#0f0 445.8px,#ff0 446.9px,#ff6d00 447.5px,#f00 448.5px,#f00 449.5px,#ff0b00 450.5px,#ff0 451.4px,#0f0 452.3px,#0ff 453.3px,#00c1ff 453.5px,#00f 454.4px,#9600ff 455.5px,#9600ff 460px,#0000 460px,#0000 490px)}
.c28{background:linear-gradient(#0000 0px,#0000 193px,#9300ff 193px,#9300ff 193.5px,#7900ff 197.5px,#2e00ff 200.5px,#0100ff 201.5px,#00f 201.5px,#0ff 202.9px,#0f0 204.2px,#30ff00 204.5px,#ff0 206.1px,#ffca00 206.5px,#ff4f00 208.5px,#ff2600 210.5px,#ff2a00 214.5px,#fff500 217.5px,#ff0 217.8px,#d1ff00 219.5px,#ebff00 222.5px,#ff0 222.9px,#ff8200 225.5px,#ff4c00 228.5px,#ff5d00 230.5px,#ff0 234.2px,#f2ff00 234.5px,#ff0 237.3px,#fd0 244.5px,#ff0 247.1px,#1aff00 264.5px,#32ff00 312.5px,#e0ff00 314.5px,#ff0 314.7px,#f00 316.5px,#f00 324.5px,#ff7f00 329.5px,#ff4000 330.5px,#f00 334.5px,#f00 346.5px,#ff0500 347.5px,#ff0 348.3px,#0f0 349.1px,#0ff 349.9px,#00f 350.7px,#9600ff 351.5px,#8600ff 381.5px,#4a00ff 385.5px,#7c00ff 387.5px,#9100ff 390.5px,#9600ff 441.5px,#00f 443.1px,#00d6ff 444.5px,#0ff 444.7px,#0f0 445.8px,#ff0 446.9px,#ff6a00 447.5px,#f00 448.5px,#f00 449.5px,#ff0f00 450.5px,#ff0 451.4px,#0f0 452.3px,#0ff 453.3px,#00bdff 453.5px,#00f 454.4px,#9600ff 455.5px,#9600ff 458px,#0000 458px,#0000 490px)}
.c29{background:linear-gradient(#0000 0px,#0000 193px,#9400ff 193px,#9400ff 193.5px,#6a00ff 198.5px,#0900ff 201.5px,#00f 201.6px,#0ff 203px,#0f0 204.4px,#beff00 205.5px,#ff0 206.1px,#f00 208.3px,#f00 215.6px,#ffc900 217.5px,#ff0 218.8px,#e1ff00 219.5px,#f4ff00 222.5px,#ff0 222.8px,#ff7300 226.5px,#ff5900 228.5px,#ff6000 230.5px,#fffd00 234.5px,#fd0 243.5px,#ff0 247.5px,#70ff00 264.5px,#8f0 312.5px,#e6ff00 314.5px,#ff0 314.7px,#ffb400 315.5px,#ff0a00 316.5px,#f00 324.5px,#ff4800 330.5px,#f00 334.5px,#f00 347.5px,#ffec00 348.5px,#ff0 348.6px,#0f0 349.4px,#0ff 350.2px,#0094ff 350.5px,#00f 350.9px,#9600ff 351.5px,#7a00ff 352.5px,#9600ff 441.5px,#6e00ff 442.5px,#00f 443.6px,#09f 444.5px,#0ff 444.9px,#0f0 446px,#ff0 447.2px,#ffb000 447.5px,#f00 448.5px,#f00 450.5px,#ffb300 451.5px,#ff0 451.8px,#0f0 452.7px,#00ffe6 453.5px,#0ff 453.6px,#00f 454.7px,#7100ff 455.5px,#9600ff 456.5px,#9600ff 460px,#0000 460px,#0000 490px)}
.c30{background:linear-gradient(#0000 0px,#0000 194px,#9200ff 194px,#9200ff 194.5px,#6d00ff 198.5px,#0e00ff 201.5px,#00f 201.7px,#005fff 202.5px,#0ff 203.3px,#00ff18 204.5px,#0f0 204.7px,#ff0 206.3px,#ffe700 206.5px,#ff8700 207.5px,#ff2700 211.5px,#ff6200 212.5px,#ff4300 213.5px,#ff8100 214.5px,#ff3100 215.5px,#ffcb00 216.5px,#ff0 217.8px,#baff00 219.5px,#d7ff00 222.5px,#ff0 223px,#ff7600 224.5px,#ff2600 228.5px,#ff5c00 231.5px,#ffb800 232.5px,#ff0 234.3px,#f9ff00 234.5px,#ff0 235.5px,#ffda00 241.5px,#ff0 244.2px,#9cff00 251.5px,#68ff00 264.5px,#80ff00 311.5px,#ff0 313.9px,#ffe000 314.5px,#ff3600 315.5px,#f00 316.5px,#f00 324.5px,#ff4300 327.5px,#ffb100 329.5px,#ff5c00 330.5px,#f00 334.5px,#f00 346.5px,#ff7f00 347.5px,#ff0 347.9px,#0f0 348.7px,#0ff 349.5px,#00f 350.4px,#1900ff 350.5px,#9600ff 351.5px,#7100ff 352.5px,#7100ff 380.5px,#9600ff 394.5px,#9600ff 442.5px,#00f 444px,#00faff 445.5px,#0ff 445.5px,#0f0 446.5px,#f7ff00 447.5px,#ff0 447.5px,#ff4100 448.5px,#f00 449.5px,#f00 450.5px,#ff4500 451.5px,#ff0 452.2px,#0f0 453.1px,#0ff 454.1px,#0087ff 454.5px,#00f 455.1px,#3b00ff 455.5px,#9600ff 456.5px,#9600ff 460px,#0000 460px,#0000 490px)}
.c31{background:linear-gradient(#0000 0px,#0000 193px,#9400ff 193px,#9400ff 193.5px,#6f00ff 198.5px,#1300ff 201.5px,#00f 201.8px,#003bff 202.5px,#0ff 203.5px,#00ff2b 204.5px,#0f0 204.8px,#ff0 206.4px,#fff000 206.5px,#ff5900 208.5px,#ff2500 210.5px,#ff7f00 214.5px,#ff5000 215.5px,#ff0 217.1px,#d0ff00 217.5px,#79ff00 219.5px,#97ff00 222.5px,#ff0 224.1px,#ffa700 225.5px,#ff5100 228.5px,#ff0 234px,#f0ff00 234.5px,#ff0 236.4px,#ffde00 240.5px,#ff0 242px,#53ff00 249.5px,#2eff00 255.5px,#51ff00 312.5px,#d5ff00 314.5px,#ff0 314.8px,#ff0300 316.5px,#f00 324.5px,#ff6a00 329.5px,#f00 334.5px,#f00 346.5px,#ff6300 347.5px,#ff0 348px,#0f0 348.8px,#0ff 349.6px,#00f 350.5px,#0800ff 350.5px,#9600ff 351.5px,#7500ff 386.5px,#9600ff 394.5px,#9600ff 441.5px,#00f 443.1px,#00d8ff 444.5px,#0ff 444.7px,#0f0 445.7px,#c4ff00 446.5px,#ff0 447px,#ffca00 447.5px,#ffa600 448.5px,#ffac00 450.5px,#ff0 451.3px,#e9ff00 451.5px,#0f0 452.3px,#0ff 453.3px,#0bf 453.5px,#00f 454.3px,#9600ff 455.5px,#9600ff 458px,#0000 458px,#0000 490px)}
.c32{background:linear-gradient(#0000 0px,#0000 193px,#9400ff 193px,#9400ff 193.5px,#7300ff 198.5px,#1e00ff 201.5px,#00f 202px,#0091ff 203.5px,#0ff 204px,#0f0 205.3px,#ff0 206.5px,#fffa00 206.5px,#f00 208.2px,#f00 213.9px,#ff1a00 215.5px,#ff0 218.2px,#e8ff00 218.5px,#bfff00 220.5px,#f9ff00 223.5px,#ff0 223.6px,#ff7a00 225.5px,#ff4a00 229.5px,#ffea00 234.5px,#ffdb00 239.5px,#ff0 242.1px,#a8ff00 248.5px,#58ff00 264.5px,#71ff00 313.5px,#f8ff00 315.5px,#ff0 315.6px,#f00 317.5px,#f00 324.5px,#ff6000 330.5px,#f00 334.5px,#f00 346.5px,#ff9200 347.5px,#ff0 347.8px,#0f0 348.7px,#0ff 349.5px,#00f 350.3px,#2400ff 350.5px,#9600ff 351.5px,#8000ff 352.5px,#8300ff 382.5px,#5b00ff 385.5px,#8700ff 388.5px,#9600ff 394.5px,#9000ff 442.5px,#00f 443.9px,#0ff 445.4px,#00ffef 445.5px,#0f0 446.4px,#ff0 447.5px,#fff200 447.5px,#ff2e00 448.5px,#f00 450.5px,#ff5d00 451.5px,#ff0 452.1px,#0f0 453px,#00ff90 453.5px,#0ff 454px,#00f 455px,#4700ff 455.5px,#9600ff 456.5px,#9600ff 460px,#0000 460px,#0000 490px)}
.c33{background:linear-gradient(#0000 0px,#0000 184px,#9600ff 184px,#9600ff 184.5px,#8c00ff 195.5px,#4b00ff 200.5px,#00f 202.4px,#0005ff 202.5px,#00deff 204.5px,#0ff 204.6px,#0f0 205.8px,#95ff00 206.5px,#ff0 207.2px,#ffd700 207.5px,#ff4a00 209.5px,#ff6400 210.5px,#ff3400 211.5px,#ff6500 213.5px,#ff2d00 214.5px,#ff4200 215.5px,#ffd500 217.5px,#ff0 218.7px,#e3ff00 219.5px,#f1ff00 222.5px,#ff0 222.7px,#ff6400 225.5px,#ff2b00 229.5px,#ffd400 233.5px,#ff0 241.5px,#b9ff00 254.5px,#1cff00 264.5px,#34ff00 311.5px,#b1ff00 313.5px,#ff0 314px,#ff3000 315.5px,#f00 316.5px,#f00 346.5px,#ffac00 347.5px,#ff0 347.8px,#0f0 348.6px,#0ff 349.4px,#00f 350.2px,#30f 350.5px,#9600ff 351.5px,#7f00ff 352.5px,#8600ff 384.5px,#6e00ff 385.5px,#9600ff 394.5px,#9600ff 441.5px,#5c00ff 442.5px,#00f 443.4px,#00b8ff 444.5px,#0ff 444.8px,#0f0 445.9px,#ff0 447px,#ff8d00 447.5px,#f00 448.5px,#f00 450.5px,#ffe100 451.5px,#ff0 451.6px,#0f0 452.4px,#00ff15 452.5px,#0ff 453.4px,#00f 454.4px,#0a00ff 454.5px,#8700ff 455.5px,#9600ff 459.5px,#9600ff 460px,#0000 460px,#0000 490px)}
.c34{background:linear-gradient(#0000 0px,#0000 178px,#9600ff 178px,#9600ff 178.5px,#8700ff 182.5px,#00f 194.1px,#0058ff 198.5px,#0ff 201.1px,#00ff60 203.5px,#0f0 204.4px,#76ff00 205.5px,#ff0 206.5px,#f00 208.2px,#f00 215.9px,#ff9500 217.5px,#ffe800 219.5px,#ffe200 223.5px,#ff7a00 225.5px,#ff4c00 229.5px,#ffd400 234.5px,#ff0 239.3px,#0f0 267.5px,#18ff00 312.5px,#a1ff00 314.5px,#ff0 315.1px,#ff3200 316.5px,#f00 317.5px,#f00 324.5px,#f60 328.5px,#ffe900 329.5px,#ff9000 330.5px,#ff0 330.9px,#74ff00 331.5px,#ff0 331.9px,#ff3100 332.5px,#f00 334.5px,#f00 339.5px,#ff0 340.4px,#e6ff00 340.5px,#ff0 340.6px,#f00 341.5px,#f00 347.5px,#fff400 348.5px,#ff0 348.5px,#0f0 349.3px,#0ff 350.1px,#008bff 350.5px,#00f 350.9px,#9600ff 351.5px,#7600ff 352.5px,#7300ff 385.5px,#9600ff 394.5px,#9600ff 442.5px,#4f00ff 443.5px,#00f 444.3px,#00cdff 445.5px,#0ff 445.7px,#0f0 446.8px,#ff0 447.9px,#ff7400 448.5px,#f00 449.5px,#ff0200 451.5px,#ff0 452.4px,#0f0 453.4px,#0ff 454.3px,#00caff 454.5px,#00f 455.4px,#9600ff 456.5px,#9600ff 459px,#0000 459px,#0000 490px)}
.c35{background:linear-gradient(#0000 0px,#0000 170px,#9600ff 170px,#9600ff 170.5px,#8700ff 179.5px,#00f 191.2px,#0006ff 191.5px,#0ff 195.3px,#0f0 199.2px,#12ff00 199.5px,#ff0 205.4px,#fffb00 205.5px,#ff5a00 207.5px,#ff1000 209.5px,#ff1800 211.5px,#f00 212px,#f00 213px,#ff1300 213.5px,#f00 214px,#f00 215.6px,#ffb200 217.5px,#ff0 220.1px,#f5ff00 220.5px,#ff0 221.3px,#ffe300 223.5px,#ff2600 227.5px,#ff2c00 229.5px,#ffd300 234.5px,#ff0 239.5px,#07ff00 267.5px,#1fff00 311.5px,#a4ff00 313.5px,#ff0 314.1px,#ff3200 315.5px,#f00 316.5px,#f00 324.5px,#ff5c00 328.5px,#ffb900 329.5px,#ff3700 332.5px,#fffa00 333.5px,#f00 334.5px,#f00 336.5px,#ffc500 337.5px,#f00 338.5px,#f00 347.5px,#ff7000 348.5px,#ff0 349px,#0f0 349.8px,#0ff 350.6px,#00f 351.4px,#1000ff 351.5px,#9600ff 352.5px,#6e00ff 353.5px,#7d00ff 385.5px,#5600ff 386.5px,#8500ff 388.5px,#9600ff 394.5px,#9600ff 442.5px,#00f 444.1px,#00edff 445.5px,#0ff 445.6px,#0f0 446.6px,#e4ff00 447.5px,#ff0 447.6px,#ff5000 448.5px,#f00 449.5px,#f00 450.5px,#ff3100 451.5px,#ff0 452.2px,#0f0 453.1px,#00ff64 453.5px,#0ff 454.1px,#00f 455.2px,#3100ff 455.5px,#9600ff 456.5px,#9600ff 458px,#0000 458px,#0000 490px)}
.c36{background:linear-gradient(#0000 0px,#0000 162px,#9600ff 162px,#9600ff 162.5px,#0200ff 175.5px,#00f 175.5px,#00f7ff 179.5px,#0ff 179.8px,#0f0 190.4px,#02ff00 190.5px,#94ff00 198.5px,#c6ff00 204.5px,#ff0 205.7px,#ffd800 206.5px,#ff1000 208.5px,#f00 209.1px,#f00 215px,#ff0 218.4px,#f9ff00 218.5px,#c4ff00 220.5px,#e2ff00 223.5px,#ff0 224px,#ff7200 226.5px,#ff5c00 228.5px,#ff0 238.1px,#92ff00 244.5px,#59ff00 267.5px,#71ff00 311.5px,#cfff00 313.5px,#ff0 314.1px,#fd0 314.5px,#f30 315.5px,#f00 316.5px,#f00 324.5px,#ff7900 329.5px,#ffcb00 330.5px,#ff0 330.8px,#9eff00 331.5px,#c1ff00 332.5px,#ff0 332.7px,#ff1000 333.5px,#f00 347.5px,#ff0 348.5px,#ff0 348.5px,#0f0 349.3px,#0ff 350.1px,#0080ff 350.5px,#00f 350.8px,#9600ff 351.5px,#6c00ff 352.5px,#6c00ff 380.5px,#9600ff 394.5px,#9600ff 441.5px,#00f 443.1px,#00e3ff 444.5px,#0ff 444.6px,#0f0 445.6px,#d5ff00 446.5px,#ff0 446.9px,#ffc600 447.5px,#ffa600 449.5px,#ffb200 450.5px,#ff0 451.1px,#d4ff00 451.5px,#0f0 452.3px,#0ff 453.2px,#00a9ff 453.5px,#00f 454.3px,#9600ff 455.5px,#9600ff 459px,#0000 459px,#0000 490px)}
.c37{background:linear-gradient(#0000 0px,#0000 90px,#9600ff 90px,#9600ff 90.5px,#8700ff 184.5px,#8000ff 185.5px,#00f 187.5px,#0001ff 187.5px,#003eff 197.5px,#08f 200.5px,#0ff 202.1px,#0f0 205.4px,#08ff00 205.5px,#ff0 207.4px,#f00 209.4px,#f00 214.8px,#ff0 218.2px,#ebff00 218.5px,#c2ff00 220.5px,#ff0 223.6px,#ffed00 224.5px,#ff6e00 227.5px,#ff5e00 229.5px,#ffc300 233.5px,#ff0 237.6px,#9aff00 244.5px,#69ff00 267.5px,#81ff00 312.5px,#fbff00 314.5px,#ff0 314.5px,#f00 316.5px,#f00 324.5px,#ff7600 328.5px,#ffba00 329.5px,#f00 334.5px,#f00 347.5px,#ffab00 348.5px,#ff0 348.8px,#0f0 349.6px,#0ff 350.4px,#00f 351.2px,#30f 351.5px,#9600ff 352.5px,#8300ff 353.5px,#8600ff 382.5px,#5000ff 385.5px,#80f 388.5px,#9600ff 394.5px,#9600ff 441.5px,#8300ff 442.5px,#00f 443.8px,#0076ff 444.5px,#0ff 445.2px,#00ffce 445.5px,#0f0 446.4px,#ff0 447.4px,#fff200 447.5px,#ffad00 448.5px,#ffa600 450.5px,#ffd200 451.5px,#ff0 451.7px,#62ff00 452.5px,#0f0 452.9px,#0ff 453.9px,#00f 454.9px,#5700ff 455.5px,#9600ff 456.5px,#9600ff 458px,#0000 458px,#0000 490px)}
.c38{background:linear-gradient(#0000 0px,#0000 70px,#9600ff 70px,#9600ff 90.5px,#5900ff 114.5px,#4b00ff 178.5px,#00f 181.5px,#0002ff 181.5px,#005cff 196.5px,#0ff 199.8px,#00ff49 203.5px,#0f0 204.4px,#ff0 207.5px,#ffa800 208.5px,#ff3f00 210.5px,#ff6700 215.5px,#ff0 218.5px,#feff00 218.5px,#c7ff00 221.5px,#ff0 223.7px,#ff6e00 229.5px,#ff0 237.7px,#75ff00 245.5px,#31ff00 267.5px,#4aff00 312.5px,#e4ff00 314.5px,#ff0 314.7px,#f00 316.5px,#f00 324.5px,#ff7600 328.5px,#ff0 329.2px,#caff00 329.5px,#62ff00 330.5px,#ff0 331px,#ff5a00 331.5px,#ff3200 332.5px,#f00 334.5px,#f00 346.5px,#ffb300 347.5px,#ff0 347.7px,#0f0 348.6px,#0ff 349.4px,#00f 350.2px,#3700ff 350.5px,#9600ff 351.5px,#60f 352.5px,#7500ff 385.5px,#5c00ff 386.5px,#7e00ff 387.5px,#9600ff 394.5px,#9600ff 441.5px,#5e00ff 442.5px,#00f 443.4px,#00b4ff 444.5px,#0ff 444.8px,#0f0 445.9px,#ff0 447px,#ff9200 447.5px,#f00 448.5px,#f00 450.5px,#ffdb00 451.5px,#ff0 451.6px,#0f0 452.5px,#00ff0f 452.5px,#0ff 453.4px,#00f 454.5px,#0700ff 454.5px,#8400ff 455.5px,#9600ff 458.5px,#9600ff 459px,#0000 459px,#0000 490px)}
.c39{background:linear-gradient(#0000 0px,#0000 65px,#9600ff 65px,#9600ff 90.5px,#2b00ff 102.5px,#00f 120.5px,#00f 183.5px,#0039ff 197.5px,#0087ff 201.5px,#0ff 203.2px,#00ffa4 204.5px,#0f0 205.9px,#ff0 208.2px,#ffda00 208.5px,#ff4e00 210.5px,#ff3700 212.5px,#ff4900 214.5px,#ff0 219.2px,#caff00 220.5px,#e1ff00 223.5px,#ff0 224.4px,#ff7400 228.5px,#ff0 236.6px,#87ff00 243.5px,#4bff00 267.5px,#64ff00 312.5px,#e6ff00 314.5px,#ff0 314.7px,#f00 316.5px,#f00 324.5px,#ff9000 329.5px,#ff7500 330.5px,#ff0 331.1px,#98ff00 331.5px,#ff0 332.4px,#fff500 332.5px,#ff2900 333.5px,#ff0 334.4px,#e3ff00 334.5px,#ff0 334.7px,#f00 336.5px,#f00 338.5px,#ffca00 339.5px,#f00 341.5px,#f00 347.5px,#f50 348.5px,#ff0 349px,#0f0 349.9px,#0ff 350.7px,#00f 351.5px,#00f 351.5px,#9600ff 352.5px,#8000ff 353.5px,#8300ff 382.5px,#6300ff 386.5px,#8600ff 388.5px,#9600ff 394.5px,#9600ff 441.5px,#60f 442.5px,#00f 443.5px,#00a6ff 444.5px,#0ff 444.9px,#0f0 446px,#ff0 447.1px,#ffa200 447.5px,#f00 448.5px,#f00 450.5px,#ffc600 451.5px,#ff0 451.7px,#08ff00 452.5px,#0f0 452.5px,#0ff 453.6px,#00f 454.6px,#7a00ff 455.5px,#9600ff 456.5px,#9600ff 460px,#0000 460px,#0000 490px)}
.c40{background:linear-gradient(#0000 0px,#0000 65px,#9600ff 65px,#9600ff 90.5px,#20f 102.5px,#00f 111px,#0040ff 120.5px,#0040ff 143.5px,#00f 152.3px,#0100ff 152.5px,#00f 170.1px,#0001ff 183.5px,#003eff 193.5px,#0ff 198.4px,#00ffd4 199.5px,#0f0 203.4px,#ff0 208px,#ffac00 209.5px,#ff7200 212.5px,#ff7900 214.5px,#ff0 219.4px,#c7ff00 221.5px,#d7ff00 223.5px,#ff0 224.7px,#ffa700 227.5px,#ff9800 230.5px,#ff0 235.5px,#98ff00 240.5px,#75ff00 244.5px,#51ff00 267.5px,#6aff00 312.5px,#d5ff00 314.5px,#ff0 314.9px,#ffc200 315.5px,#ff1800 316.5px,#f00 317.5px,#f00 328.5px,#ff0 329.4px,#e8ff00 329.5px,#ff0 329.6px,#f00 330.5px,#ff0 331.4px,#d3ff00 331.5px,#ff0 331.6px,#f00 332.5px,#f00 334.5px,#ffa400 335.5px,#f00 336.5px,#f00 337.5px,#ff0 338.4px,#d6ff00 338.5px,#ff0 338.6px,#f00 339.5px,#ffb200 340.5px,#f00 341.5px,#f00 346.5px,#ffb500 347.5px,#ff0 347.7px,#0f0 348.6px,#0ff 349.4px,#00f 350.2px,#3800ff 350.5px,#9600ff 351.5px,#7f00ff 386.5px,#9600ff 394.5px,#9600ff 441.5px,#7600ff 442.5px,#00f 443.7px,#008bff 444.5px,#0ff 445px,#0f0 446.2px,#ff0 447.4px,#ffe900 447.5px,#ffa600 448.5px,#ffa600 450.5px,#fd0 451.5px,#ff0 451.6px,#0f0 452.7px,#0ff 453.7px,#00f 454.8px,#60f 455.5px,#9600ff 456.5px,#9600ff 459px,#0000 459px,#0000 490px)}
.c41{background:linear-gradient(#0000 0px,#0000 69px,#9600ff 69px,#9600ff 90.5px,#1800ff 102.5px,#00f 106.9px,#0080ff 120.5px,#0080ff 143.5px,#0012ff 152.5px,#00f 185.5px,#003bff 197.5px,#0052ff 199.5px,#00b4ff 201.5px,#0ff 202.7px,#00ff4d 205.5px,#0f0 206.4px,#ff0 209.5px,#ff0 209.5px,#ff8d00 212.5px,#ff0 220.7px,#f4ff00 221.5px,#ff0 222.7px,#ffb800 230.5px,#ff0 236.1px,#bf0 241.5px,#71ff00 267.5px,#89ff00 312.5px,#ff0 314.9px,#ffdf00 315.5px,#ff3500 316.5px,#f00 317.5px,#f00 328.5px,#ffb900 329.5px,#f00 330.5px,#ffa200 331.5px,#ff8000 332.5px,#f00 333.5px,#f00 334.5px,#ffd500 335.5px,#f00 336.5px,#ffad00 337.5px,#ff0 338.3px,#e6ff00 338.5px,#ceff00 339.5px,#ff0 339.7px,#f00 340.5px,#f00 346.5px,#ff8f00 347.5px,#ff0 347.9px,#0f0 348.7px,#0ff 349.5px,#00f 350.3px,#20f 350.5px,#9600ff 351.5px,#8e00ff 381.5px,#5b00ff 386.5px,#9300ff 390.5px,#9600ff 441.5px,#8e00ff 442.5px,#00f 443.9px,#0063ff 444.5px,#0ff 445.4px,#00ffea 445.5px,#0f0 446.4px,#ff0 447.4px,#ffef00 447.5px,#ff2a00 448.5px,#f00 450.5px,#ff6200 451.5px,#ff0 452.1px,#0f0 453px,#00ff95 453.5px,#0ff 453.9px,#00f 455px,#4900ff 455.5px,#9600ff 456.5px,#9600ff 459px,#0000 459px,#0000 490px)}
.c42{background:linear-gradient(#0000 0px,#0000 69px,#9600ff 69px,#9600ff 90.5px,#0f00ff 102.5px,#00f 104.6px,#00bfff 120.5px,#00bfff 143.5px,#0026ff 152.5px,#00f 183.5px,#003aff 192.5px,#0ff 198.2px,#00fff4 198.5px,#0f0 203px,#18ff00 203.5px,#ff0 209.2px,#ffca00 210.5px,#ff8200 213.5px,#ff9d00 216.5px,#ff0 219.8px,#cbff00 221.5px,#ff0 227.1px,#ffd500 231.5px,#ff0 233.6px,#8f0 239.5px,#67ff00 243.5px,#2fff00 267.5px,#48ff00 312.5px,#c3ff00 314.5px,#ff0 314.9px,#ff2000 316.5px,#f00 317.5px,#f00 324.5px,#ff6f00 327.5px,#ff5f00 328.5px,#fffb00 330.5px,#ff4000 331.5px,#ff1600 333.5px,#ff0 334.4px,#ecff00 334.5px,#f2ff00 335.5px,#ff0 335.5px,#f00 336.5px,#ff0 337.4px,#deff00 337.5px,#ff0 337.6px,#f00 338.5px,#f00 347.5px,#ff6f00 348.5px,#ff0 349px,#0f0 349.8px,#0ff 350.6px,#00f 351.4px,#1000ff 351.5px,#9600ff 352.5px,#8000ff 353.5px,#8500ff 383.5px,#6d00ff 385.5px,#80f 386.5px,#9600ff 394.5px,#9600ff 442.5px,#5800ff 443.5px,#00f 444.4px,#00beff 445.5px,#0ff 445.8px,#0f0 446.8px,#9dff00 447.5px,#ff0 448.2px,#ffd500 448.5px,#ffa600 449.5px,#ffa600 451.5px,#fff800 452.5px,#ff0 452.5px,#0f0 453.5px,#0ff 454.4px,#00e1ff 454.5px,#00f 455.5px,#8c00ff 456.5px,#9600ff 459.5px,#9600ff 460px,#0000 460px,#0000 490px)}
.c43{background:linear-gradient(#0000 0px,#0000 67px,#9600ff 67px,#9600ff 90.5px,#1800ff 102.5px,#00f 106.9px,#0080ff 120.5px,#0080ff 143.5px,#0012ff 152.5px,#0001ff 177.5px,#003cff 191.5px,#0ff 197.2px,#00ff6b 201.5px,#0f0 203.8px,#ff0 209.4px,#ff9d00 211.5px,#ff6e00 213.5px,#ff6d00 215.5px,#ff0 221.1px,#d9ff00 222.5px,#ff0 229.9px,#fff200 232.5px,#ff0 233.3px,#85ff00 240.5px,#5eff00 252.5px,#0f0 263.9px,#00ff1d 267.5px,#00ff05 311.5px,#0f0 311.6px,#97ff00 313.5px,#ff0 314.2px,#ff2b00 315.5px,#f00 316.5px,#f00 330.5px,#ff7400 331.5px,#f00 332.5px,#f00 334.5px,#ffb800 335.5px,#f00 336.5px,#f00 339.5px,#ff0 340.4px,#dfff00 340.5px,#ff0 340.6px,#f00 341.5px,#f00 347.5px,#ff5800 348.5px,#ff0 349px,#0f0 349.9px,#0ff 350.7px,#00f 351.5px,#0200ff 351.5px,#9600ff 352.5px,#8000ff 353.5px,#8300ff 382.5px,#4f00ff 386.5px,#80f 389.5px,#9600ff 394.5px,#9600ff 442.5px,#6800ff 443.5px,#00f 444.5px,#00a3ff 445.5px,#0ff 445.9px,#0f0 447px,#76ff00 447.5px,#ff0 448.3px,#ffdf00 448.5px,#ffa600 449.5px,#ffa600 451.5px,#ffea00 452.5px,#ff0 452.6px,#0f0 453.6px,#0ff 454.6px,#000aff 455.5px,#00f 455.5px,#7800ff 456.5px,#9600ff 457.5px,#9600ff 460px,#0000 460px,#0000 490px)}
.c44{background:linear-gradient(#0000 0px,#0000 67px,#9600ff 67px,#9600ff 90.5px,#20f 102.5px,#00f 111px,#0040ff 120.5px,#0040ff 143.5px,#00f 152.3px,#0100ff 152.5px,#00f 168px,#0001ff 178.5px,#003fff 193.5px,#00f6ff 198.5px,#0ff 198.7px,#0f0 203.3px,#09ff00 203.5px,#ff0 209.4px,#ffa700 211.5px,#ff6c00 214.5px,#ff7600 216.5px,#ff0 221.5px,#c8ff00 223.5px,#f0ff00 231.5px,#81ff00 240.5px,#1eff00 267.5px,#37ff00 312.5px,#d1ff00 314.5px,#ff0 314.8px,#f00 316.5px,#f00 324.5px,#ff3400 329.5px,#ffe500 330.5px,#ff0 331px,#e3ff00 331.5px,#ff0 331.6px,#ff1a00 332.5px,#ff0 333.4px,#eaff00 333.5px,#ff0 333.6px,#f00 334.5px,#f00 336.5px,#ffa900 337.5px,#ffbf00 338.5px,#f00 339.5px,#f00 347.5px,#ff5b00 348.5px,#ff0 349px,#0f0 349.8px,#0ff 350.7px,#00f 351.5px,#0400ff 351.5px,#9600ff 352.5px,#7e00ff 353.5px,#8200ff 382.5px,#6d00ff 384.5px,#9600ff 394.5px,#9600ff 441.5px,#8200ff 442.5px,#00f 443.8px,#0078ff 444.5px,#0ff 445.2px,#00ffcb 445.5px,#0f0 446.4px,#ff0 447.4px,#fff100 447.5px,#ffac00 448.5px,#ffa600 450.5px,#ffd300 451.5px,#ff0 451.7px,#5eff00 452.5px,#0f0 452.9px,#0ff 453.9px,#00f 454.9px,#5800ff 455.5px,#9600ff 456.5px,#9600ff 460px,#0000 460px,#0000 490px)}
.c45{background:linear-gradient(#0000 0px,#0000 72px,#9600ff 72px,#9600ff 90.5px,#2b00ff 102.5px,#00f 120.5px,#00f 182.5px,#0043ff 198.5px,#0ff 202.5px,#00ff73 205.5px,#0f0 207.1px,#eaff00 210.5px,#ff0 210.9px,#ff8400 213.5px,#ff6200 215.5px,#fff800 224.5px,#ff0 226.2px,#92ff00 252.5px,#0f0 266.9px,#00ff06 267.5px,#0f0 278.4px,#12ff00 311.5px,#85ff00 313.5px,#ff0 314.3px,#ff5300 315.5px,#f00 316.5px,#ff0d00 331.5px,#ffc500 332.5px,#ff0 333.1px,#dbff00 333.5px,#ff0 333.6px,#f00 334.5px,#f00 336.5px,#ffea00 338.5px,#f00 339.5px,#ff1a00 347.5px,#ff0 348.2px,#0f0 349.1px,#0ff 349.9px,#00f 350.7px,#9600ff 351.5px,#8300ff 352.5px,#8600ff 382.5px,#6800ff 384.5px,#9600ff 394.5px,#9600ff 442.5px,#00f 444.1px,#00e3ff 445.5px,#0ff 445.6px,#0f0 446.7px,#ff0 447.8px,#ff5b00 448.5px,#f00 449.5px,#f00 450.5px,#ff2300 451.5px,#ff0 452.3px,#0f0 453.2px,#0ff 454.2px,#00a9ff 454.5px,#00f 455.3px,#9600ff 456.5px,#9600ff 460px,#0000 460px,#0000 490px)}
.c46{background:linear-gradient(#0000 0px,#0000 82px,#9600ff 82px,#9600ff 82.5px,#5900ff 114.5px,#4b00ff 176.5px,#40f 177.5px,#00f 179.5px,#0001ff 179.5px,#0040ff 193.5px,#0ff 198.1px,#0f0 204.2px,#ff0 210.3px,#ffa200 212.5px,#ff8400 215.5px,#ff8500 218.5px,#ff0 223.5px,#d0ff00 225.5px,#83ff00 252.5px,#21ff00 267.5px,#39ff00 312.5px,#d0ff00 314.5px,#ff0 314.8px,#f00 316.5px,#f00 324.5px,#ff5e00 328.5px,#ffc800 329.5px,#ff4d00 332.5px,#ffcf00 333.5px,#f00 334.5px,#ffad00 335.5px,#f00 336.5px,#f00 337.5px,#ff9000 338.5px,#f00 339.5px,#f00 347.5px,#ffa100 348.5px,#ff0 348.8px,#0f0 349.6px,#0ff 350.4px,#00f 351.3px,#2c00ff 351.5px,#9600ff 352.5px,#80f 382.5px,#5c00ff 385.5px,#7900ff 386.5px,#9600ff 394.5px,#9600ff 441.5px,#00f 443.1px,#00d1ff 444.5px,#0ff 444.7px,#0f0 445.8px,#ff0 446.9px,#ff7000 447.5px,#f00 448.5px,#ff0800 450.5px,#ff0 451.4px,#0f0 452.3px,#0ff 453.3px,#00c4ff 453.5px,#00f 454.4px,#9600ff 455.5px,#9600ff 460px,#0000 460px,#0000 490px)}
.c47{background:linear-gradient(#0000 0px,#0000 59px,#9600ff 59px,#9600ff 59.5px,#8700ff 172.5px,#0600ff 174.5px,#00f 175.3px,#0002ff 175.5px,#0060ff 201.5px,#0ff 204.3px,#00ff47 207.5px,#0f0 208.3px,#ff0 211.1px,#ff2700 213.5px,#f30 219.5px,#ff7100 220.5px,#ff0 226.4px,#feff00 226.5px,#94ff00 252.5px,#0f0 267.5px,#0f0 267.9px,#18ff00 311.5px,#a0ff00 313.5px,#ff0 314.1px,#ff3200 315.5px,#f00 316.5px,#f00 324.5px,#ff4c00 327.5px,#ff9200 328.5px,#f00 334.5px,#f00 347.5px,#ffd600 348.5px,#ff0 348.6px,#0f0 349.4px,#0ff 350.2px,#00aeff 350.5px,#00f 350.9px,#9600ff 351.5px,#6f00ff 352.5px,#70f 383.5px,#6100ff 386.5px,#8500ff 388.5px,#9600ff 394.5px,#9600ff 442.5px,#5700ff 443.5px,#00f 444.4px,#00c0ff 445.5px,#0ff 445.8px,#0f0 446.9px,#ff0 448px,#ff8300 448.5px,#f00 449.5px,#f00 451.5px,#ff0 452.5px,#0f0 453.4px,#0ff 454.4px,#00deff 454.5px,#00f 455.5px,#8d00ff 456.5px,#9600ff 459.5px,#9600ff 460px,#0000 460px,#0000 490px)}
.c48{background:linear-gradient(#0000 0px,#0000 141px,#9600ff 141px,#9600ff 141.5px,#7500ff 168.5px,#00f 180.4px,#0001ff 180.5px,#004bff 195.5px,#0ff 199.5px,#0f0 205.3px,#90ff00 208.5px,#ff0 210.1px,#ff0e00 213.5px,#ff3600 214.5px,#f00 216.5px,#f00 216.5px,#ff3a00 217.5px,#ff0200 218.5px,#ff7300 221.5px,#ff6400 222.5px,#ff0 224.4px,#f6ff00 224.5px,#a5ff00 227.5px,#5eff00 252.5px,#0f0 265px,#00ff13 267.5px,#0f0 303px,#05ff00 312.5px,#63ff00 313.5px,#ff0 314.6px,#f00 316.5px,#f00 324.5px,#ff9a00 329.5px,#ff8700 330.5px,#ff0 331px,#8bff00 331.5px,#ff0 331.9px,#f30 332.5px,#ffae00 333.5px,#ffe800 334.5px,#f00 335.5px,#f00 339.5px,#ff9100 340.5px,#f00 341.5px,#f00 346.5px,#ff5b00 347.5px,#ff0 348px,#0f0 348.8px,#0ff 349.7px,#00f 350.5px,#0400ff 350.5px,#9600ff 351.5px,#8d00ff 382.5px,#60f 385.5px,#9400ff 390.5px,#9600ff 442.5px,#00f 444px,#00efff 445.5px,#0ff 445.6px,#0f0 446.6px,#e8ff00 447.5px,#ff0 447.6px,#ff4d00 448.5px,#f00 449.5px,#f00 450.5px,#ff3500 451.5px,#ff0 452.2px,#0f0 453.2px,#0ff 454.1px,#0097ff 454.5px,#00f 455.1px,#30f 455.5px,#9600ff 456.5px,#9600ff 460px,#0000 460px,#0000 490px)}
.c49{background:linear-gradient(#0000 0px,#0000 141px,#9600ff 141px,#9600ff 141.5px,#8000ff 162.5px,#0300ff 174.5px,#00f 176px,#0046ff 193.5px,#0ff 198.3px,#0f0 204.8px,#69ff00 207.5px,#ff0 209.8px,#ff9100 211.5px,#ff0c00 214.5px,#ff4600 215.5px,#ff0f00 218.5px,#ff6300 219.5px,#ff3700 221.5px,#ffbc00 223.5px,#ff0 225.6px,#c1ff00 227.5px,#6dff00 252.5px,#0f0 263.2px,#00ff2c 267.5px,#00ff14 312.5px,#0f0 312.8px,#7bff00 314.5px,#ff0 315.3px,#ff4200 316.5px,#f00 317.5px,#f00 324.5px,#ff7200 329.5px,#f00 334.5px,#ff0d00 347.5px,#ff0 348.3px,#0f0 349.1px,#0ff 349.9px,#00f 350.7px,#9600ff 351.5px,#8d00ff 381.5px,#6d00ff 385.5px,#9300ff 390.5px,#9600ff 441.5px,#6f00ff 442.5px,#00f 443.6px,#0098ff 444.5px,#0ff 444.9px,#0f0 446.1px,#ff0 447.2px,#ffb200 447.5px,#f00 448.5px,#f00 450.5px,#ffb100 451.5px,#ff0 451.8px,#0f0 452.7px,#00ffe4 453.5px,#0ff 453.6px,#00f 454.7px,#7000ff 455.5px,#9600ff 456.5px,#9600ff 459px,#0000 459px,#0000 490px)}
.c50{background:linear-gradient(#0000 0px,#0000 138px,#9600ff 138px,#9600ff 138.5px,#7b00ff 169.5px,#00f 182.4px,#0001ff 182.5px,#0043ff 200.5px,#00f1ff 204.5px,#0ff 204.7px,#00ff19 208.5px,#0f0 208.7px,#ff0 211px,#ffc400 211.5px,#ff1000 212.5px,#f00 213.4px,#f00 214.9px,#ff1f00 215.5px,#f00 216.6px,#f00 218.8px,#ff0e00 219.5px,#f00 219.9px,#f00 220.8px,#ff3a00 221.5px,#ff6000 223.5px,#ffe500 225.5px,#ff0 226.8px,#f1ff00 227.5px,#85ff00 252.5px,#0f0 264.1px,#00ff27 267.5px,#00ff0f 312.5px,#0f0 312.7px,#70ff00 314.5px,#ff0 315.4px,#ff5200 316.5px,#f00 317.5px,#f00 346.5px,#ff7100 347.5px,#ff0 348px,#0f0 348.8px,#0ff 349.6px,#00f 350.4px,#1000ff 350.5px,#9600ff 351.5px,#8e00ff 383.5px,#7200ff 386.5px,#9600ff 394.5px,#9600ff 442.5px,#4e00ff 443.5px,#00f 444.3px,#00cfff 445.5px,#0ff 445.7px,#0f0 446.7px,#b6ff00 447.5px,#ff0 448.1px,#ffce00 448.5px,#ffa600 449.5px,#ffa700 451.5px,#ff0 452.4px,#faff00 452.5px,#0f0 453.4px,#0ff 454.3px,#00c8ff 454.5px,#00f 455.4px,#9600ff 456.5px,#9600ff 460px,#0000 460px,#0000 490px)}
.c51{background:linear-gradient(#0000 0px,#0000 138px,#9600ff 138px,#9600ff 138.5px,#7d00ff 170.5px,#00f 182.4px,#0001ff 182.5px,#003cff 192.5px,#0ff 198px,#0f0 205.2px,#51ff00 207.5px,#ff0 210.4px,#ff0500 214.5px,#ff2900 215.5px,#f00 218.7px,#f00 219.7px,#ff0 225.2px,#f1ff00 225.5px,#cf0 227.5px,#69ff00 252.5px,#0f0 261.2px,#00ff4c 267.5px,#00ff34 312.5px,#0f0 313.1px,#29ff00 313.5px,#ff0 314.9px,#f00 316.5px,#ff2600 330.5px,#f00 347.5px,#ff6100 348.5px,#ff0 349px,#0f0 349.8px,#0ff 350.6px,#00f 351.5px,#0700ff 351.5px,#9600ff 352.5px,#9500ff 381.5px,#6000ff 386.5px,#9600ff 390.5px,#9600ff 442.5px,#00f 444.1px,#00eaff 445.5px,#0ff 445.6px,#0f0 446.6px,#e0ff00 447.5px,#ff0 447.8px,#ffc300 448.5px,#ffa600 450.5px,#ffb600 451.5px,#ff0 452.1px,#c6ff00 452.5px,#0f0 453.2px,#00ff60 453.5px,#0ff 454.1px,#00f 455.2px,#2f00ff 455.5px,#9600ff 456.5px,#9600ff 458px,#0000 458px,#0000 490px)}
.c52{background:linear-gradient(#0000 0px,#0000 141px,#9600ff 141px,#9600ff 141.5px,#8100ff 164.5px,#00f 176.4px,#0001ff 176.5px,#0045ff 193.5px,#0ff 198.1px,#0f0 204.4px,#ff0 210.7px,#ff8e00 213.5px,#ff2f00 217.5px,#ff3700 219.5px,#ffe300 224.5px,#ff0 226.1px,#e6ff00 227.5px,#89ff00 252.5px,#0f0 263.9px,#00ff2b 267.5px,#00ff12 313.5px,#0f0 313.6px,#ff0 315.6px,#f00 317.5px,#f00 347.5px,#ff0 348.3px,#0f0 349.2px,#0ff 350px,#0065ff 350.5px,#00f 350.8px,#9600ff 351.5px,#9000ff 382.5px,#7500ff 385.5px,#9400ff 390.5px,#9600ff 441.5px,#00f 443.1px,#0ef 444.5px,#0ff 444.6px,#0f0 445.6px,#e5ff00 446.5px,#ff0 446.8px,#ffc100 447.5px,#ffa600 449.5px,#ffb700 450.5px,#ff0 451px,#c0ff00 451.5px,#0f0 452.2px,#0ff 453.1px,#09f 453.5px,#00f 454.1px,#3200ff 454.5px,#9600ff 455.5px,#9600ff 460px,#0000 460px,#0000 490px)}
.c53{background:linear-gradient(#0000 0px,#0000 141px,#9600ff 141px,#9600ff 141.5px,#8500ff 155.5px,#0300ff 167.5px,#00f 168.5px,#004aff 183.5px,#0ff 188.4px,#00fffa 188.5px,#0f0 201px,#6cff00 206.5px,#ff0 211.5px,#ff5000 217.5px,#ff6700 220.5px,#ff0 224.6px,#b9ff00 226.5px,#7cff00 232.5px,#20ff00 267.5px,#37ff00 311.5px,#9fff00 313.5px,#ff0 314.5px,#fffb00 314.5px,#ff5100 315.5px,#f00 316.5px,#f00 324.5px,#ff5700 329.5px,#f00 334.5px,#f00 347.5px,#ffb000 348.5px,#ff0 348.8px,#0f0 349.6px,#0ff 350.4px,#00f 351.2px,#3600ff 351.5px,#9600ff 352.5px,#7100ff 353.5px,#7c00ff 384.5px,#6900ff 385.5px,#9600ff 394.5px,#9600ff 441.5px,#00f 443px,#00f3ff 444.5px,#0ff 444.5px,#0f0 445.6px,#edff00 446.5px,#ff0 446.7px,#ffbf00 447.5px,#ffa600 449.5px,#ffba00 450.5px,#ff0 451px,#b6ff00 451.5px,#0f0 452.2px,#0ff 453.2px,#00f 454.2px,#3600ff 454.5px,#9600ff 455.5px,#9600ff 458px,#0000 458px,#0000 490px)}
.c54{background:linear-gradient(#0000 0px,#0000 112px,#9600ff 112px,#9600ff 112.5px,#7500ff 169.5px,#0400ff 181.5px,#00f 182.9px,#003eff 194.5px,#0ff 199.7px,#0f0 206.6px,#ff0 213.4px,#ffb200 215.5px,#ff7300 219.5px,#ff0 225.6px,#a6ff00 229.5px,#5dff00 252.5px,#0f0 263.2px,#00ff26 267.5px,#00ff0e 311.5px,#0f0 311.7px,#8aff00 313.5px,#ff0 314.2px,#ff3500 315.5px,#f00 316.5px,#f00 324.5px,#ff6d00 329.5px,#f00 334.5px,#f00 346.5px,#ffbd00 347.5px,#ff0 347.7px,#0f0 348.5px,#0ff 349.3px,#00f 350.2px,#3d00ff 350.5px,#9600ff 351.5px,#80f 382.5px,#7d00ff 384.5px,#5900ff 385.5px,#9200ff 390.5px,#9600ff 441.5px,#8700ff 442.5px,#00f 443.8px,#006fff 444.5px,#0ff 445.3px,#00ffd8 445.5px,#0f0 446.4px,#ff0 447.4px,#ffe100 447.5px,#ff1d00 448.5px,#f00 450.5px,#ff7400 451.5px,#ff0 452px,#0f0 452.9px,#00ffa7 453.5px,#0ff 453.9px,#00f 454.9px,#5200ff 455.5px,#9600ff 456.5px,#9600ff 459px,#0000 459px,#0000 490px)}
.c55{background:linear-gradient(#0000 0px,#0000 86px,#9600ff 86px,#9600ff 86.5px,#7000ff 167.5px,#0200ff 179.5px,#00f 180.5px,#0042ff 196.5px,#0ff 201.1px,#0f0 207.4px,#ff0 213.7px,#fd0 214.5px,#f60 219.5px,#ff0 226.9px,#caff00 229.5px,#84ff00 252.5px,#08ff00 267.5px,#20ff00 311.5px,#9fff00 313.5px,#ff0 314.2px,#ff3a00 315.5px,#f00 316.5px,#f00 346.5px,#ff2100 347.5px,#ff0 348.2px,#0f0 349px,#0ff 349.9px,#00f 350.7px,#9600ff 351.5px,#7c00ff 352.5px,#8200ff 383.5px,#6b00ff 386.5px,#8500ff 387.5px,#9600ff 394.5px,#9600ff 442.5px,#00f 444px,#00feff 445.5px,#0ff 445.5px,#0f0 446.5px,#feff00 447.5px,#ff0 447.5px,#fb0 448.5px,#ffa600 450.5px,#ffc000 451.5px,#ff0 451.9px,#a1ff00 452.5px,#0f0 453.1px,#0ff 454.1px,#00f 455.1px,#3e00ff 455.5px,#9600ff 456.5px,#9600ff 459px,#0000 459px,#0000 490px)}
.c56{background:linear-gradient(#0000 0px,#0000 93px,#9600ff 93px,#9600ff 93.5px,#60f 163.5px,#0100ff 175.5px,#00f 176px,#0043ff 195.5px,#0ff 200.7px,#0f0 207.9px,#ff0 215px,#ffa400 217.5px,#ff8700 220.5px,#ff0 226.6px,#a0ff00 231.5px,#67ff00 252.5px,#0f0 266.6px,#00ff07 267.5px,#0f0 280.3px,#1f0 311.5px,#a5ff00 313.5px,#ff0 314.1px,#ff2600 315.5px,#f00 316.5px,#f00 324.5px,#ffde00 329.5px,#f70 330.5px,#f00 334.5px,#f00 346.5px,#ffb300 347.5px,#ff0 347.7px,#0f0 348.6px,#0ff 349.4px,#00f 350.2px,#3700ff 350.5px,#9600ff 351.5px,#8200ff 386.5px,#9600ff 441.5px,#6900ff 442.5px,#00f 443.5px,#00a2ff 444.5px,#0ff 444.9px,#0f0 446px,#ff0 447.1px,#ffa600 447.5px,#f00 448.5px,#f00 450.5px,#ffc000 451.5px,#ff0 451.7px,#0f0 452.6px,#00fff3 453.5px,#0ff 453.5px,#00f 454.6px,#70f 455.5px,#9600ff 456.5px,#9600ff 459px,#0000 459px,#0000 490px)}
.c57{background:linear-gradient(#0000 0px,#0000 93px,#9600ff 93px,#9600ff 93.5px,#6900ff 160.5px,#00f 173.4px,#0001ff 173.5px,#003fff 199.5px,#0ff 204.8px,#00ff7a 208.5px,#0f0 210.8px,#ff0 215.7px,#ffa000 217.5px,#ff6e00 219.5px,#ff7c00 222.5px,#ff0 229.4px,#ebff00 230.5px,#98ff00 252.5px,#06ff00 267.5px,#1fff00 312.5px,#9fff00 314.5px,#ff0 315.2px,#ff3a00 316.5px,#f00 317.5px,#f00 324.5px,#ff9000 329.5px,#f00 334.5px,#f00 347.5px,#fff500 348.5px,#ff0 348.5px,#0f0 349.3px,#0ff 350.1px,#008bff 350.5px,#00f 350.9px,#9600ff 351.5px,#6f00ff 352.5px,#7a00ff 384.5px,#6300ff 385.5px,#8200ff 387.5px,#9600ff 394.5px,#9600ff 441.5px,#4e00ff 442.5px,#00f 443.3px,#00cfff 444.5px,#0ff 444.7px,#0f0 445.8px,#ff0 446.9px,#ff7200 447.5px,#f00 448.5px,#ff0500 450.5px,#ff0 451.4px,#0f0 452.4px,#0ff 453.3px,#00c7ff 453.5px,#00f 454.4px,#9600ff 455.5px,#9600ff 458px,#0000 458px,#0000 490px)}
.c58{background:linear-gradient(#0000 0px,#0000 102px,#9600ff 102px,#9600ff 102.5px,#8100ff 166.5px,#0300ff 178.5px,#00f 180px,#003dff 196.5px,#0ff 201.9px,#0f0 209px,#ff0 216px,#ff8200 219.5px,#ff9b00 224.5px,#ff0 227.4px,#b3ff00 229.5px,#7f0 235.5px,#1fff00 267.5px,#38ff00 312.5px,#dbff00 314.5px,#ff0 314.8px,#f00 316.5px,#f00 346.5px,#fa0 347.5px,#ff0 347.8px,#0f0 348.6px,#0ff 349.4px,#00f 350.2px,#3200ff 350.5px,#9600ff 351.5px,#6b00ff 352.5px,#7400ff 383.5px,#5a00ff 386.5px,#8300ff 388.5px,#9600ff 394.5px,#9600ff 441.5px,#8d00ff 442.5px,#00f 443.9px,#0064ff 444.5px,#0ff 445.4px,#00ffe9 445.5px,#0f0 446.4px,#ff0 447.4px,#fe0 447.5px,#ff2a00 448.5px,#f00 450.5px,#ff6300 451.5px,#ff0 452.1px,#0f0 453px,#00ff96 453.5px,#0ff 453.9px,#00f 455px,#4900ff 455.5px,#9600ff 456.5px,#9600ff 460px,#0000 460px,#0000 490px)}
.c59{background:linear-gradient(#0000 0px,#0000 128px,#9600ff 128px,#9600ff 128.5px,#7100ff 148.5px,#0100ff 160.5px,#00f 161px,#003fff 173.5px,#0ff 179px,#00ffef 179.5px,#0f0 192px,#7dff00 198.5px,#a0ff00 212.5px,#ecff00 215.5px,#ff0 215.9px,#ff4a00 219.5px,#ff2600 221.5px,#ff4d00 225.5px,#ff0 228.5px,#c5ff00 229.5px,#6dff00 232.5px,#35ff00 252.5px,#0f0 258.8px,#00ff4a 267.5px,#00ff31 312.5px,#0f0 313.4px,#03ff00 313.5px,#ff0 315px,#ff1200 316.5px,#f00 317.5px,#f00 324.5px,#ff4900 329.5px,#f00 334.5px,#ff1c00 347.5px,#ff0 348.2px,#0f0 349px,#0ff 349.9px,#00f 350.7px,#9600ff 351.5px,#7d00ff 352.5px,#7500ff 385.5px,#9600ff 394.5px,#9200ff 442.5px,#00f 443.9px,#0ff 445.4px,#00fff4 445.5px,#0f0 446.5px,#ff0 447.5px,#fff700 447.5px,#f30 448.5px,#f00 450.5px,#ff5700 451.5px,#ff0 452.1px,#0f0 453px,#00ff8a 453.5px,#0ff 454px,#00f 455px,#40f 455.5px,#9600ff 456.5px,#9600ff 458px,#0000 458px,#0000 490px)}
.c60{background:linear-gradient(#0000 0px,#0000 127px,#9600ff 127px,#9600ff 127.5px,#60f 160.5px,#00f 173.4px,#0002ff 173.5px,#003eff 188.5px,#0ff 194.7px,#00ff09 202.5px,#0f0 202.9px,#e1ff00 214.5px,#ff0 215px,#ff0100 219.5px,#f00 220.5px,#ff0400 226.5px,#ff0 230px,#d7ff00 230.5px,#9f0 233.5px,#26ff00 267.5px,#3eff00 311.5px,#bdff00 313.5px,#ff0 314px,#ff2400 315.5px,#f00 316.5px,#ff2700 329.5px,#f00 347.5px,#ffa500 348.5px,#ff0 348.8px,#0f0 349.6px,#0ff 350.4px,#00f 351.2px,#2f00ff 351.5px,#9600ff 352.5px,#7400ff 353.5px,#7b00ff 383.5px,#5300ff 386.5px,#8400ff 388.5px,#9600ff 394.5px,#9600ff 441.5px,#6100ff 442.5px,#00f 443.5px,#00aeff 444.5px,#0ff 444.8px,#0f0 445.9px,#86ff00 446.5px,#ff0 447.3px,#ffdb00 447.5px,#ffa600 448.5px,#ffa600 450.5px,#ffef00 451.5px,#ff0 451.6px,#0f0 452.5px,#0ff 453.5px,#00f 454.5px,#0300ff 454.5px,#8000ff 455.5px,#9600ff 457.5px,#9600ff 458px,#0000 458px,#0000 490px)}
.c61{background:linear-gradient(#0000 0px,#0000 135px,#9600ff 135px,#9600ff 135.5px,#7400ff 162.5px,#00f 174.5px,#00f 174.5px,#003fff 196.5px,#0ff 202.3px,#0f0 209.9px,#97ff00 214.5px,#ff0 216.3px,#ff8300 218.5px,#ff4f00 220.5px,#ff7200 226.5px,#ff0 229.4px,#94ff00 231.5px,#5dff00 236.5px,#3aff00 252.5px,#0f0 261.8px,#00ff24 267.5px,#00ff0c 312.5px,#0f0 312.7px,#28ff00 313.5px,#a2ff00 314.5px,#ff0 315.1px,#ff1900 316.5px,#f00 317.5px,#f00 324.5px,#ff5f00 328.5px,#ffa000 329.5px,#f00 334.5px,#f00 347.5px,#ffc000 348.5px,#ff0 348.7px,#0f0 349.5px,#0ff 350.3px,#00f 351.2px,#3f00ff 351.5px,#9600ff 352.5px,#6d00ff 353.5px,#7600ff 383.5px,#5e00ff 386.5px,#8700ff 389.5px,#9600ff 394.5px,#9600ff 441.5px,#00f 443px,#00fcff 444.5px,#0ff 444.5px,#0f0 445.5px,#fbff00 446.5px,#ff0 446.6px,#ffbc00 447.5px,#ffa600 449.5px,#ffbf00 450.5px,#ff0 450.9px,#a5ff00 451.5px,#0f0 452.1px,#0ff 453.1px,#00f 454.1px,#3c00ff 454.5px,#9600ff 455.5px,#9600ff 460px,#0000 460px,#0000 490px)}
.c62{background:linear-gradient(#0000 0px,#0000 84px,#9600ff 84px,#9600ff 84.5px,#7500ff 154.5px,#00f 166.5px,#0001ff 166.5px,#003fff 183.5px,#00f7ff 188.5px,#0ff 188.9px,#00ff06 201.5px,#0f0 201.7px,#ff0 209.4px,#fffb00 209.5px,#ffd400 215.5px,#f00 219.5px,#ff1600 227.5px,#ffba00 229.5px,#ff0 231.8px,#ebff00 232.5px,#acff00 252.5px,#1bff00 267.5px,#3f0 311.5px,#a8ff00 313.5px,#ff0 314.1px,#ff3e00 315.5px,#f00 316.5px,#f00 324.5px,#ff2e00 328.5px,#f00 334.5px,#f00 346.5px,#ff6f00 347.5px,#ff0 348px,#0f0 348.8px,#0ff 349.6px,#00f 350.4px,#0f00ff 350.5px,#9600ff 351.5px,#7400ff 352.5px,#7e00ff 384.5px,#6300ff 386.5px,#80f 388.5px,#9600ff 394.5px,#9600ff 440.5px,#6f00ff 441.5px,#00f 442.6px,#0098ff 443.5px,#0ff 443.9px,#0f0 445.1px,#ff0 446.2px,#ffb200 446.5px,#f00 447.5px,#f00 449.5px,#ffb100 450.5px,#ff0 450.8px,#0f0 451.7px,#00ffe4 452.5px,#0ff 452.6px,#00f 453.7px,#7000ff 454.5px,#9600ff 455.5px,#9600ff 458px,#0000 458px,#0000 490px)}
.c63{background:linear-gradient(#0000 0px,#0000 84px,#9600ff 84px,#9600ff 84.5px,#7200ff 165.5px,#0200ff 177.5px,#00f 178.6px,#003dff 197.5px,#0ff 202.9px,#0f0 210.1px,#9dff00 214.5px,#ff0 215.9px,#f00 219.5px,#f00 226.5px,#ff0 230.2px,#e9ff00 230.5px,#96ff00 233.5px,#4aff00 252.5px,#0f0 260.4px,#00ff43 267.5px,#00ff2b 312.5px,#0f0 313.3px,#09ff00 313.5px,#ff0 315.1px,#ff1b00 316.5px,#f00 317.5px,#f00 347.5px,#ff0 348.3px,#0f0 349.2px,#0ff 350px,#006bff 350.5px,#00f 350.8px,#9600ff 351.5px,#6900ff 352.5px,#7600ff 384.5px,#5300ff 385.5px,#8300ff 388.5px,#9600ff 394.5px,#9600ff 440.5px,#7000ff 441.5px,#00f 442.6px,#0096ff 443.5px,#0ff 444px,#0f0 445.2px,#ff0 446.4px,#ffe500 446.5px,#ffa600 447.5px,#ffa600 449.5px,#ffe300 450.5px,#ff0 450.6px,#0f0 451.7px,#0ff 452.7px,#00f 453.7px,#6e00ff 454.5px,#9600ff 455.5px,#9600ff 459px,#0000 459px,#0000 490px)}
.c64{background:linear-gradient(#0000 0px,#0000 87px,#9600ff 87px,#9600ff 87.5px,#7000ff 153.5px,#00f 165.4px,#0002ff 165.5px,#003fff 177.5px,#00f8ff 182.5px,#0ff 182.8px,#00ff0a 194.5px,#0f0 194.8px,#e4ff00 202.5px,#e9ff00 214.5px,#ff0 215.3px,#ff4100 222.5px,#ff6c00 226.5px,#ff0 230.8px,#c3ff00 232.5px,#78ff00 252.5px,#0f0 262.4px,#00ff3f 267.5px,#00ff26 312.5px,#0f0 312.8px,#ff0 314.4px,#ff5a00 315.5px,#f00 316.5px,#f00 346.5px,#ff5f00 347.5px,#ff0 348px,#0f0 348.8px,#0ff 349.6px,#00f 350.5px,#0600ff 350.5px,#9600ff 351.5px,#9400ff 381.5px,#7900ff 384.5px,#9500ff 390.5px,#9600ff 441.5px,#7600ff 442.5px,#00f 443.7px,#008bff 444.5px,#0ff 445px,#0f0 446.2px,#ff0 447.4px,#ffe900 447.5px,#ffa600 448.5px,#ffa600 450.5px,#fd0 451.5px,#ff0 451.6px,#0f0 452.7px,#0ff 453.7px,#00f 454.8px,#60f 455.5px,#9600ff 456.5px,#9600ff 458px,#0000 458px,#0000 490px)}
.c65{background:linear-gradient(#0000 0px,#0000 122px,#9600ff 122px,#9600ff 122.5px,#7c00ff 161.5px,#00f 174.4px,#0001ff 174.5px,#0040ff 198.5px,#0ff 204px,#0f0 211.3px,#ff0 218.6px,#ffe000 219.5px,#ffb100 223.5px,#ff0 228.3px,#9aff00 234.5px,#6eff00 252.5px,#10ff00 267.5px,#29ff00 313.5px,#f4ff00 315.5px,#ff0 315.6px,#f60 316.5px,#f00 317.5px,#f00 347.5px,#ff7a00 348.5px,#ff0 348.9px,#0f0 349.7px,#0ff 350.6px,#00f 351.4px,#1600ff 351.5px,#9600ff 352.5px,#6e00ff 353.5px,#7a00ff 384.5px,#4e00ff 385.5px,#80f 389.5px,#9600ff 394.5px,#9600ff 441.5px,#00f 443.1px,#00e8ff 444.5px,#0ff 444.6px,#0f0 445.7px,#ff0 446.8px,#f50 447.5px,#f00 448.5px,#f00 449.5px,#ff2a00 450.5px,#ff0 451.3px,#0f0 452.2px,#0ff 453.2px,#00a2ff 453.5px,#00f 454.2px,#2e00ff 454.5px,#9600ff 455.5px,#9600ff 460px,#0000 460px,#0000 490px)}
.c66{background:linear-gradient(#0000 0px,#0000 134px,#9600ff 134px,#9600ff 134.5px,#8700ff 158.5px,#00f 170.4px,#0001ff 170.5px,#003cff 180.5px,#0ff 186.3px,#00fff7 186.5px,#0f0 199.2px,#06ff00 199.5px,#fbff00 207.5px,#ff0 211.6px,#fff000 225.5px,#ff0 227.5px,#cbff00 234.5px,#a3ff00 252.5px,#1eff00 267.5px,#36ff00 311.5px,#a6ff00 313.5px,#ff0 314.3px,#fe0 314.5px,#f40 315.5px,#f00 316.5px,#f00 324.5px,#f50 330.5px,#f00 334.5px,#f00 346.5px,#ff7300 347.5px,#ff0 348px,#0f0 348.8px,#0ff 349.6px,#00f 350.4px,#10f 350.5px,#9600ff 351.5px,#7b00ff 352.5px,#9600ff 441.5px,#00f 443px,#00f2ff 444.5px,#0ff 444.6px,#0f0 445.6px,#ecff00 446.5px,#ff0 446.6px,#ff4a00 447.5px,#f00 448.5px,#f00 449.5px,#ff3900 450.5px,#ff0 451.2px,#0f0 452.2px,#0ff 453.1px,#0093ff 453.5px,#00f 454.1px,#3500ff 454.5px,#9600ff 455.5px,#9600ff 460px,#0000 460px,#0000 490px)}
.c67{background:linear-gradient(#0000 0px,#0000 134px,#9600ff 134px,#9600ff 134.5px,#8600ff 156.5px,#00f 170.1px,#0049ff 174.5px,#0ff 179.4px,#00fffb 179.5px,#0f0 196.1px,#71ff00 203.5px,#b5ff00 223.5px,#60ff00 234.5px,#08ff00 267.5px,#20ff00 312.5px,#a0ff00 314.5px,#ff0 315.1px,#ff3800 316.5px,#f00 317.5px,#f00 324.5px,#ff7100 330.5px,#f00 334.5px,#f00 346.5px,#ff6a00 347.5px,#ff0 348px,#0f0 348.8px,#0ff 349.6px,#00f 350.4px,#0c00ff 350.5px,#9600ff 351.5px,#7c00ff 352.5px,#7f00ff 384.5px,#6c00ff 386.5px,#8900ff 388.5px,#9600ff 394.5px,#9600ff 440.5px,#8600ff 441.5px,#00f 442.8px,#0070ff 443.5px,#0ff 444.3px,#00ffd6 444.5px,#0f0 445.4px,#ff0 446.4px,#ffe000 446.5px,#ff1c00 447.5px,#f00 449.5px,#ff7500 450.5px,#ff0 451px,#0f0 451.9px,#00ffa8 452.5px,#0ff 452.9px,#00f 453.9px,#5200ff 454.5px,#9600ff 455.5px,#9600ff 459px,#0000 459px,#0000 490px)}
.c68{background:linear-gradient(#0000 0px,#0000 134px,#9600ff 134px,#9600ff 134.5px,#70f 168.5px,#00f 181.4px,#0001ff 181.5px,#0050ff 212.5px,#0ff 216.1px,#00ffbd 217.5px,#00ff3f 221.5px,#0f0 226.4px,#34ff00 230.5px,#c7ff00 237.5px,#37ff00 267.5px,#4fff00 311.5px,#bf0 313.5px,#ff0 314.2px,#ffe200 314.5px,#ff3800 315.5px,#f00 316.5px,#f00 347.5px,#ff0 348.3px,#0f0 349.2px,#0ff 350px,#0064ff 350.5px,#00f 350.8px,#9600ff 351.5px,#9500ff 381.5px,#6c00ff 385.5px,#9600ff 390.5px,#9600ff 441.5px,#7c00ff 442.5px,#00f 443.7px,#0082ff 444.5px,#0ff 445.1px,#0f0 446.2px,#ff0 447.4px,#ff0700 448.5px,#f00 450.5px,#ff9000 451.5px,#ff0 451.9px,#0f0 452.8px,#00ffc3 453.5px,#0ff 453.8px,#00f 454.8px,#6000ff 455.5px,#9600ff 456.5px,#9600ff 459px,#0000 459px,#0000 490px)}
.c69{background:linear-gradient(#0000 0px,#0000 133px,#9600ff 133px,#9600ff 133.5px,#8f00ff 164.5px,#0400ff 173.5px,#00f 174.6px,#00faff 213.5px,#0ff 213.7px,#00ff2e 223.5px,#0f0 226.4px,#9cff00 236.5px,#ff0 247.9px,#ff8000 262.5px,#ff4e00 312.5px,#ff0 313.2px,#beff00 313.5px,#ff0 314.6px,#ffca00 315.5px,#ff2000 316.5px,#f00 317.5px,#f00 324.5px,#f50 329.5px,#f00 334.5px,#f00 347.5px,#fff500 348.5px,#ff0 348.5px,#0f0 349.3px,#0ff 350.1px,#008aff 350.5px,#00f 350.9px,#9600ff 351.5px,#9200ff 381.5px,#6900ff 386.5px,#9500ff 390.5px,#9600ff 440.5px,#7200ff 441.5px,#00f 442.6px,#0093ff 443.5px,#0ff 444px,#0f0 445.1px,#ff0 446.2px,#ffb800 446.5px,#f00 447.5px,#f00 449.5px,#ffa900 450.5px,#ff0 450.8px,#0f0 451.7px,#00ffdc 452.5px,#0ff 452.6px,#00f 453.7px,#6c00ff 454.5px,#9600ff 455.5px,#9600ff 458px,#0000 458px,#0000 490px)}
.c70{background:linear-gradient(#0000 0px,#0000 133px,#9600ff 133px,#9600ff 133.5px,#8f00ff 164.5px,#0200ff 173.5px,#00f 174px,#0ff 215.6px,#00ffe1 220.5px,#0f0 233.2px,#ff0 247.5px,#ff0 247.5px,#ff8000 262.5px,#ff4e00 312.5px,#ff0 313px,#51ff00 313.5px,#8bff00 314.5px,#ff0 315.3px,#f50 316.5px,#f00 317.5px,#f00 347.5px,#ffd900 348.5px,#ff0 348.6px,#0f0 349.4px,#0ff 350.2px,#0af 350.5px,#00f 350.9px,#9600ff 351.5px,#9000ff 381.5px,#6b00ff 384.5px,#9400ff 390.5px,#9600ff 441.5px,#6e00ff 442.5px,#00f 443.6px,#09f 444.5px,#0ff 444.9px,#0f0 446.1px,#6f0 446.5px,#ff0 447.3px,#ffe400 447.5px,#ffa600 448.5px,#ffa600 450.5px,#ffe400 451.5px,#ff0 451.6px,#0f0 452.6px,#0ff 453.7px,#00f 454.7px,#7000ff 455.5px,#9600ff 456.5px,#9600ff 460px,#0000 460px,#0000 490px)}
.c71{background:linear-gradient(#0000 0px,#0000 133px,#9600ff 133px,#9600ff 133.5px,#6a00ff 153.5px,#00f 165.4px,#0001ff 165.5px,#003fff 189.5px,#0ff 195.2px,#00fff4 195.5px,#0f0 205.5px,#dcff00 214.5px,#8dff00 252.5px,#12ff00 267.5px,#2bff00 312.5px,#b2ff00 314.5px,#ff0 315px,#ff2600 316.5px,#f00 317.5px,#f00 347.5px,#ff0 348.3px,#0f0 349.2px,#0ff 350px,#0069ff 350.5px,#00f 350.8px,#9600ff 351.5px,#9200ff 381.5px,#8b00ff 383.5px,#6800ff 384.5px,#7400ff 385.5px,#5600ff 386.5px,#9500ff 390.5px,#9600ff 441.5px,#8500ff 442.5px,#00f 443.8px,#0072ff 444.5px,#0ff 445.3px,#00ffd4 445.5px,#0f0 446.4px,#ff0 447.5px,#fff300 447.5px,#ffaf00 448.5px,#ffa600 450.5px,#ffd000 451.5px,#ff0 451.7px,#69ff00 452.5px,#0f0 452.9px,#0ff 453.9px,#00f 454.9px,#5400ff 455.5px,#9600ff 456.5px,#9600ff 458px,#0000 458px,#0000 490px)}
.c72{background:linear-gradient(#0000 0px,#0000 150px,#9600ff 150px,#9600ff 150.5px,#7800ff 171.5px,#0200ff 183.5px,#00f 184.6px,#003eff 207.5px,#0ff 213.2px,#00fff3 213.5px,#00ff05 223.5px,#0f0 224px,#4eff00 231.5px,#7f0 269.5px,#b6ff00 272.5px,#c1ff00 309.5px,#8fff00 313.5px,#feff00 315.5px,#ff0 315.5px,#ff5b00 316.5px,#f00 317.5px,#f00 324.5px,#ff3f00 329.5px,#f00 334.5px,#f00 346.5px,#ff5900 347.5px,#ff0 348px,#0f0 348.9px,#0ff 349.7px,#00f 350.5px,#0200ff 350.5px,#9600ff 351.5px,#8f00ff 381.5px,#8700ff 383.5px,#5300ff 385.5px,#9400ff 390.5px,#9600ff 441.5px,#5900ff 442.5px,#00f 443.4px,#00bdff 444.5px,#0ff 444.8px,#0f0 445.8px,#9dff00 446.5px,#ff0 447.2px,#ffd500 447.5px,#ffa600 448.5px,#ffa600 450.5px,#fff700 451.5px,#ff0 451.5px,#0f0 452.5px,#0ff 453.4px,#00e2ff 453.5px,#00f 454.5px,#8b00ff 455.5px,#9600ff 458.5px,#9600ff 459px,#0000 459px,#0000 490px)}
.c73{background:linear-gradient(#0000 0px,#0000 105px,#9600ff 105px,#9600ff 105.5px,#7c00ff 163.5px,#0300ff 175.5px,#00f 176.7px,#04f 194.5px,#0ff 199.4px,#00fffd 199.5px,#0f0 213.4px,#82ff00 220.5px,#49ff00 269.5px,#52ff00 270.5px,#ff0 272.5px,#d9ff00 274.5px,#feff00 277.5px,#d1ff00 279.5px,#feff00 281.5px,#d7ff00 288.5px,#fcff00 290.5px,#d7ff00 293.5px,#feff00 300.5px,#d4ff00 302.5px,#ff0 309.5px,#67ff00 311.5px,#c2ff00 313.5px,#ff0 314.2px,#ffe600 314.5px,#ff3c00 315.5px,#f00 316.5px,#f00 346.5px,#ffc400 347.5px,#ff0 347.7px,#0f0 348.5px,#0ff 349.3px,#00f 350.1px,#4100ff 350.5px,#9600ff 351.5px,#6800ff 352.5px,#6800ff 380.5px,#9600ff 394.5px,#9600ff 440.5px,#70f 441.5px,#00f 442.7px,#008aff 443.5px,#0ff 444px,#0f0 445.2px,#ff0 446.3px,#f00 447.5px,#f00 449.5px,#ff9c00 450.5px,#ff0 450.9px,#0f0 451.8px,#00ffcf 452.5px,#0ff 452.7px,#00f 453.8px,#6500ff 454.5px,#9600ff 455.5px,#9600ff 459px,#0000 459px,#0000 490px)}
.c74{background:linear-gradient(#0000 0px,#0000 100px,#9600ff 100px,#9600ff 100.5px,#7600ff 165.5px,#00f 177.4px,#0002ff 177.5px,#004aff 192.5px,#0ff 197.3px,#00fff9 197.5px,#0f0 208.8px,#abff00 216.5px,#7f0 252.5px,#24ff00 267.5px,#2aff00 270.5px,#8aff00 272.5px,#95ff00 309.5px,#3cff00 312.5px,#c2ff00 314.5px,#ff0 314.9px,#ff1900 316.5px,#f00 317.5px,#f00 324.5px,#ff3900 329.5px,#f00 334.5px,#f00 347.5px,#ff0 348.4px,#efff00 348.5px,#0f0 349.3px,#0ff 350.1px,#0070ff 350.5px,#00f 350.8px,#9600ff 351.5px,#7c00ff 352.5px,#8100ff 383.5px,#6a00ff 385.5px,#9600ff 394.5px,#9600ff 441.5px,#5000ff 442.5px,#00f 443.3px,#0cf 444.5px,#0ff 444.7px,#0f0 445.8px,#ff0 446.9px,#ff7500 447.5px,#f00 448.5px,#f00 450.5px,#ff0 451.4px,#0f0 452.4px,#0ff 453.3px,#0cf 453.5px,#00f 454.4px,#9600ff 455.5px,#9600ff 460px,#0000 460px,#0000 490px)}
.c75{background:linear-gradient(#0000 0px,#0000 122px,#9600ff 122px,#9600ff 122.5px,#6200ff 167.5px,#00f 181.5px,#003bff 186.5px,#0ff 192.2px,#00fff4 192.5px,#00ff03 202.5px,#0f0 202.8px,#50ff00 210.5px,#10ff00 267.5px,#28ff00 312.5px,#e2ff00 314.5px,#ff0 314.7px,#f00 316.5px,#f00 346.5px,#ffad00 347.5px,#ff0 347.8px,#0f0 348.6px,#0ff 349.4px,#00f 350.2px,#3400ff 350.5px,#9600ff 351.5px,#9000ff 382.5px,#6c00ff 384.5px,#9400ff 390.5px,#9600ff 441.5px,#00f 443px,#00f1ff 444.5px,#0ff 444.6px,#0f0 445.6px,#e9ff00 446.5px,#ff0 446.6px,#ff4c00 447.5px,#f00 448.5px,#f00 449.5px,#ff3700 450.5px,#ff0 451.2px,#0f0 452.2px,#0ff 453.1px,#0095ff 453.5px,#00f 454.1px,#3400ff 454.5px,#9600ff 455.5px,#9600ff 459px,#0000 459px,#0000 490px)}
.c76{background:linear-gradient(#0000 0px,#0000 148px,#9600ff 148px,#9600ff 148.5px,#6d00ff 169.5px,#0200ff 181.5px,#00f 182.5px,#0043ff 207.5px,#0ff 211.8px,#00ff05 217.5px,#0f0 217.8px,#7f0 225.5px,#42ff00 267.5px,#5aff00 312.5px,#fcff00 314.5px,#ff0 314.5px,#ff5c00 315.5px,#f00 316.5px,#f00 347.5px,#ff0 348.3px,#0f0 349.2px,#0ff 350px,#06f 350.5px,#00f 350.8px,#9600ff 351.5px,#7400ff 352.5px,#6e00ff 386.5px,#9600ff 394.5px,#9600ff 441.5px,#00f 443.1px,#00ecff 444.5px,#0ff 444.6px,#0f0 445.6px,#e3ff00 446.5px,#ff0 446.8px,#ffc200 447.5px,#ffa600 449.5px,#ffb700 450.5px,#ff0 451px,#c2ff00 451.5px,#0f0 452.2px,#0ff 453.1px,#009cff 453.5px,#00f 454.2px,#3100ff 454.5px,#9600ff 455.5px,#9600ff 458px,#0000 458px,#0000 490px)}
.c77{background:linear-gradient(#0000 0px,#0000 148px,#9600ff 148px,#9600ff 148.5px,#7400ff 177.5px,#00f 190.4px,#0002ff 190.5px,#003eff 206.5px,#0ff 212.5px,#0f0 220.4px,#03ff00 220.5px,#5eff00 228.5px,#59ff00 312.5px,#caff00 314.5px,#ff0 315px,#fc0 315.5px,#f20 316.5px,#f00 317.5px,#f00 347.5px,#ffd200 348.5px,#ff0 348.6px,#0f0 349.5px,#0ff 350.3px,#00b2ff 350.5px,#00f 350.9px,#9600ff 351.5px,#6d00ff 352.5px,#6d00ff 380.5px,#9600ff 394.5px,#9600ff 440.5px,#5e00ff 441.5px,#00f 442.4px,#00b4ff 443.5px,#0ff 443.8px,#0f0 444.9px,#ff0 446px,#ff9100 446.5px,#f00 447.5px,#f00 449.5px,#ffdb00 450.5px,#ff0 450.6px,#0f0 451.4px,#00ff0f 451.5px,#0ff 452.4px,#00f 453.4px,#0800ff 453.5px,#8500ff 454.5px,#9600ff 457.5px,#9600ff 458px,#0000 458px,#0000 490px)}
.c78{background:linear-gradient(#0000 0px,#0000 148px,#9600ff 148px,#9600ff 148.5px,#7b00ff 170.5px,#00f 182.5px,#0001ff 182.5px,#003fff 220.5px,#0ff 226.3px,#00fffa 226.5px,#0f0 239.2px,#91ff00 246.5px,#83ff00 259.5px,#d2ff00 262.5px,#94ff00 312.5px,#e6ff00 314.5px,#ff0 314.8px,#ffc600 315.5px,#ff1c00 316.5px,#f00 317.5px,#f00 346.5px,#ff2500 347.5px,#ff0 348.2px,#0f0 349px,#0ff 349.9px,#00f 350.7px,#9600ff 351.5px,#9500ff 381.5px,#7000ff 386.5px,#9600ff 390.5px,#9600ff 441.5px,#8100ff 442.5px,#00f 443.8px,#0078ff 444.5px,#0ff 445.2px,#00ffca 445.5px,#0f0 446.3px,#ff0 447.3px,#ffd600 447.5px,#ff1200 448.5px,#f00 450.5px,#ff8100 451.5px,#ff0 451.9px,#0f0 452.9px,#00ffb4 453.5px,#0ff 453.8px,#00f 454.9px,#5800ff 455.5px,#9600ff 456.5px,#9600ff 458px,#0000 458px,#0000 490px)}
.c79{background:linear-gradient(#0000 0px,#0000 111px,#9600ff 111px,#9600ff 111.5px,#7300ff 173.5px,#00f 185.5px,#00f 185.5px,#003eff 216.5px,#0ff 222.4px,#00fffc 222.5px,#00ff0a 233.5px,#0f0 234.2px,#6dff00 241.5px,#4dff00 260.5px,#ff0 262.2px,#ffe600 262.5px,#ff0 263px,#e7ff00 263.5px,#ff0 264.7px,#ffef00 265.5px,#ff0 265.8px,#d0ff00 266.5px,#ff0 267.2px,#ffea00 267.5px,#ff0 268.7px,#f1ff00 269.5px,#ff0 269.9px,#ffeb00 270.5px,#ff0 270.8px,#d1ff00 271.5px,#ff0 272.3px,#fff700 272.5px,#ff0 272.9px,#daff00 274.5px,#ff0 275.2px,#fff100 275.5px,#ff0 275.8px,#e0ff00 276.5px,#ff0 278.3px,#fffc00 278.5px,#ff0 278.5px,#c0ff00 279.5px,#ff0 280.5px,#fffe00 280.5px,#ff0 280.6px,#dcff00 282.5px,#fcff00 283.5px,#c5ff00 284.5px,#edff00 285.5px,#c3ff00 287.5px,#f0ff00 288.5px,#cf0 289.5px,#e4ff00 291.5px,#af0 292.5px,#deff00 293.5px,#a5ff00 300.5px,#bfff00 304.5px,#95ff00 305.5px,#b2ff00 309.5px,#46ff00 311.5px,#3dff00 313.5px,#efff00 315.5px,#ff0 315.6px,#f00 317.5px,#f00 347.5px,#ff5e00 348.5px,#ff0 349px,#0f0 349.8px,#0ff 350.7px,#00f 351.5px,#0600ff 351.5px,#9600ff 352.5px,#70f 353.5px,#7b00ff 382.5px,#5e00ff 384.5px,#7600ff 385.5px,#4900ff 386.5px,#8600ff 389.5px,#9600ff 394.5px,#9600ff 441.5px,#5100ff 442.5px,#00f 443.3px,#00cbff 444.5px,#0ff 444.7px,#0f0 445.8px,#ff0 446.9px,#f70 447.5px,#f00 448.5px,#f00 450.5px,#ff0 451.4px,#0f0 452.4px,#0ff 453.3px,#00cdff 453.5px,#00f 454.4px,#9500ff 455.5px,#9600ff 457.5px,#9600ff 458px,#0000 458px,#0000 490px)}
.c80{background:linear-gradient(#0000 0px,#0000 110px,#9600ff 110px,#9600ff 110.5px,#7c00ff 177.5px,#0300ff 189.5px,#00f 191.7px,#003fff 218.5px,#0ff 224.1px,#00fff1 224.5px,#00ff0a 234.5px,#0f0 235.2px,#69ff00 242.5px,#78ff00 259.5px,#cfff00 262.5px,#f2ff00 278.5px,#d0ff00 279.5px,#f7ff00 280.5px,#ff0 285.3px,#fff400 291.5px,#ff0 291.8px,#e3ff00 292.5px,#ff0 294.9px,#ffec00 296.5px,#ff0 298.7px,#efff00 300.5px,#ff0 302.1px,#ffe800 304.5px,#ff0 305.1px,#efff00 305.5px,#ff0 307px,#ffe600 309.5px,#ff0 309.9px,#9fff00 311.5px,#ff0 314.2px,#fff300 314.5px,#ff4900 315.5px,#f00 316.5px,#f00 346.5px,#ff4000 347.5px,#ff0 348.1px,#0f0 349px,#0ff 349.8px,#00f 350.7px,#9600ff 351.5px,#7900ff 352.5px,#8100ff 384.5px,#6c00ff 385.5px,#9600ff 394.5px,#9600ff 441.5px,#5700ff 442.5px,#00f 443.4px,#00c0ff 444.5px,#0ff 444.8px,#0f0 445.9px,#ff0 447px,#ff8300 447.5px,#f00 448.5px,#f00 450.5px,#ff0 451.5px,#0f0 452.4px,#0ff 453.4px,#0df 453.5px,#00f 454.5px,#8d00ff 455.5px,#9600ff 457.5px,#9600ff 458px,#0000 458px,#0000 490px)}
.c81{background:linear-gradient(#0000 0px,#0000 98px,#9600ff 98px,#9600ff 98.5px,#6d00ff 173.5px,#00f 185.5px,#0001ff 185.5px,#003fff 208.5px,#0ff 214.1px,#0f0 221.4px,#03ff00 221.5px,#54ff00 229.5px,#39ff00 266.5px,#8f0 305.5px,#b4ff00 309.5px,#48ff00 311.5px,#3fff00 313.5px,#eaff00 315.5px,#ff0 315.7px,#f00 317.5px,#ff1300 347.5px,#ff0 348.3px,#0f0 349.1px,#0ff 349.9px,#00f 350.7px,#9600ff 351.5px,#9600ff 381.5px,#6400ff 385.5px,#9600ff 390.5px,#9600ff 442.5px,#00f 444px,#00f4ff 445.5px,#0ff 445.5px,#0f0 446.6px,#efff00 447.5px,#ff0 447.7px,#ffbf00 448.5px,#ffa600 450.5px,#fb0 451.5px,#ff0 452px,#b4ff00 452.5px,#0f0 453.2px,#0ff 454.2px,#00f 455.1px,#3700ff 455.5px,#9600ff 456.5px,#9600ff 459px,#0000 459px,#0000 490px)}
.c82{background:linear-gradient(#0000 0px,#0000 77px,#9600ff 77px,#9600ff 77.5px,#7400ff 167.5px,#0200ff 179.5px,#00f 179.9px,#0042ff 188.5px,#0ff 193.5px,#00fffe 193.5px,#0f0 204.4px,#02ff00 204.5px,#75ff00 212.5px,#4dff00 252.5px,#12ff00 267.5px,#29ff00 312.5px,#f0ff00 314.5px,#ff0 314.6px,#f00 316.5px,#ff0b00 347.5px,#ff0 348.3px,#0f0 349.1px,#0ff 349.9px,#00f 350.7px,#9600ff 351.5px,#8a00ff 382.5px,#4f00ff 386.5px,#9200ff 390.5px,#9600ff 441.5px,#00f 443.1px,#00e4ff 444.5px,#0ff 444.6px,#0f0 445.7px,#ff0 446.8px,#ff5a00 447.5px,#f00 448.5px,#f00 449.5px,#ff2400 450.5px,#ff0 451.3px,#0f0 452.2px,#0ff 453.2px,#00a8ff 453.5px,#00f 454.3px,#9600ff 455.5px,#9600ff 460px,#0000 460px,#0000 490px)}
.c83{background:linear-gradient(#0000 0px,#0000 70px,#9600ff 70px,#9600ff 70.5px,#6a00ff 173.5px,#0100ff 185.5px,#00f 186.5px,#0040ff 219.5px,#0ff 224.5px,#0ff 224.5px,#0f0 235.7px,#c9ff00 244.5px,#52ff00 267.5px,#6bff00 312.5px,#ff0 315.3px,#fff300 315.5px,#ff4900 316.5px,#f00 317.5px,#f00 347.5px,#ffd400 348.5px,#ff0 348.6px,#0f0 349.4px,#0ff 350.3px,#00b0ff 350.5px,#00f 350.9px,#9600ff 351.5px,#7400ff 352.5px,#6f00ff 386.5px,#9600ff 394.5px,#9600ff 441.5px,#6700ff 442.5px,#00f 443.5px,#00a5ff 444.5px,#0ff 444.9px,#0f0 446px,#ff0 447.1px,#ffa300 447.5px,#f00 448.5px,#f00 450.5px,#ffc500 451.5px,#ff0 451.7px,#09ff00 452.5px,#0f0 452.5px,#0ff 453.6px,#00f 454.6px,#7900ff 455.5px,#9600ff 457.5px,#9600ff 458px,#0000 458px,#0000 490px)}
.c84{background:linear-gradient(#0000 0px,#0000 91px,#9600ff 91px,#9600ff 91.5px,#7600ff 175.5px,#00f 187.5px,#00f 187.5px,#003fff 221.5px,#0ff 227.2px,#00fff7 227.5px,#0f0 242.5px,#63ff00 248.5px,#17ff00 267.5px,#2fff00 311.5px,#9dff00 313.5px,#ff0 314.4px,#fff500 314.5px,#ff4b00 315.5px,#f00 316.5px,#f00 346.5px,#f90 347.5px,#ff0 347.8px,#0f0 348.6px,#0ff 349.5px,#00f 350.3px,#2800ff 350.5px,#9600ff 351.5px,#7900ff 385.5px,#9600ff 394.5px,#9600ff 441.5px,#7200ff 442.5px,#00f 443.6px,#0092ff 444.5px,#0ff 445px,#0f0 446.2px,#ff0 447.4px,#ffe600 447.5px,#ffa600 448.5px,#ffa600 450.5px,#ffe100 451.5px,#ff0 451.6px,#0f0 452.7px,#0ff 453.7px,#00f 454.8px,#6c00ff 455.5px,#9600ff 456.5px,#9600ff 459px,#0000 459px,#0000 490px)}
.c85{background:linear-gradient(#0000 0px,#0000 99px,#9600ff 99px,#9600ff 99.5px,#8300ff 176.5px,#00f 189.4px,#0001ff 189.5px,#004aff 213.5px,#0ff 218.4px,#0f0 225.2px,#0cff00 225.5px,#95ff00 233.5px,#28ff00 267.5px,#40ff00 311.5px,#af0 313.5px,#ff0 314.4px,#fff100 314.5px,#ff4700 315.5px,#f00 316.5px,#f00 346.5px,#ff8c00 347.5px,#ff0 347.9px,#0f0 348.7px,#0ff 349.5px,#00f 350.3px,#2000ff 350.5px,#9600ff 351.5px,#7200ff 352.5px,#70f 382.5px,#5f00ff 386.5px,#8900ff 389.5px,#9600ff 394.5px,#9600ff 442.5px,#00f 444.1px,#00edff 445.5px,#0ff 445.6px,#0f0 446.6px,#e4ff00 447.5px,#ff0 447.6px,#ff5000 448.5px,#f00 449.5px,#f00 450.5px,#ff3100 451.5px,#ff0 452.3px,#0f0 453.2px,#0ff 454.1px,#009bff 454.5px,#00f 455.1px,#3100ff 455.5px,#9600ff 456.5px,#9600ff 459px,#0000 459px,#0000 490px)}
.c86{background:linear-gradient(#0000 0px,#0000 113px,#9600ff 113px,#9600ff 113.5px,#8100ff 182.5px,#0300ff 194.5px,#00f 195.8px,#0040ff 212.5px,#0ff 217.9px,#00ff7d 221.5px,#0f0 223.4px,#4f0 224.5px,#fbff00 233.5px,#69ff00 267.5px,#81ff00 312.5px,#ff0 315px,#ffe400 315.5px,#ff3a00 316.5px,#f00 317.5px,#f00 347.5px,#ff7c00 348.5px,#ff0 348.9px,#0f0 349.7px,#0ff 350.6px,#00f 351.4px,#1700ff 351.5px,#9600ff 352.5px,#8300ff 353.5px,#8600ff 383.5px,#6900ff 386.5px,#8f00ff 389.5px,#9600ff 394.5px,#9600ff 441.5px,#6a00ff 442.5px,#00f 443.6px,#00a0ff 444.5px,#0ff 444.9px,#0f0 446px,#70ff00 446.5px,#ff0 447.3px,#ffe100 447.5px,#ffa600 448.5px,#ffa600 450.5px,#ffe800 451.5px,#ff0 451.6px,#0f0 452.6px,#0ff 453.6px,#0010ff 454.5px,#00f 454.6px,#7500ff 455.5px,#9600ff 456.5px,#9600ff 459px,#0000 459px,#0000 490px)}
.c87{background:linear-gradient(#0000 0px,#0000 120px,#9600ff 120px,#9600ff 120.5px,#6b00ff 181.5px,#00f 194.4px,#0002ff 194.5px,#003dff 211.5px,#00e5ff 216.5px,#0ff 217px,#00ff48 220.5px,#0f0 221.3px,#ff0 224.2px,#ffe800 224.5px,#ffd900 238.5px,#ff0 239px,#82ff00 240.5px,#4dff00 242.5px,#5fff00 312.5px,#c3ff00 314.5px,#ff0 315.2px,#ffe300 315.5px,#ff3900 316.5px,#f00 317.5px,#f00 347.5px,#f70 348.5px,#ff0 348.9px,#0f0 349.8px,#0ff 350.6px,#00f 351.4px,#1400ff 351.5px,#9600ff 352.5px,#8700ff 383.5px,#6f00ff 384.5px,#9600ff 394.5px,#9600ff 441.5px,#7e00ff 442.5px,#00f 443.8px,#007eff 444.5px,#0ff 445.1px,#0f0 446.3px,#ff0 447.4px,#fe0 447.5px,#fa0 448.5px,#ffa600 450.5px,#ffd600 451.5px,#ff0 451.7px,#0f0 452.7px,#0ff 453.8px,#00f 454.8px,#5d00ff 455.5px,#9600ff 456.5px,#9600ff 459px,#0000 459px,#0000 490px)}
.c88{background:linear-gradient(#0000 0px,#0000 142px,#9600ff 142px,#9600ff 142.5px,#8000ff 187.5px,#0300ff 199.5px,#00f 200.7px,#003eff 213.5px,#0ff 218.4px,#00ff83 221.5px,#0f0 222.4px,#09ff00 222.5px,#f8ff00 223.5px,#ff0 223.6px,#ff8000 224.5px,#ff8000 238.5px,#ff0 239.8px,#beff00 240.5px,#7eff00 242.5px,#83ff00 312.5px,#e9ff00 314.5px,#ff0 314.7px,#f00 316.5px,#ff1000 347.5px,#ff0 348.3px,#0f0 349.1px,#0ff 349.9px,#00f 350.7px,#9600ff 351.5px,#7500ff 352.5px,#7a00ff 383.5px,#6400ff 386.5px,#8600ff 388.5px,#9600ff 394.5px,#9600ff 442.5px,#00f 444px,#00faff 445.5px,#0ff 445.5px,#0f0 446.5px,#f7ff00 447.5px,#ff0 447.6px,#ffbc00 448.5px,#ffa600 450.5px,#ffbe00 451.5px,#ff0 451.9px,#a9ff00 452.5px,#0f0 453.2px,#0ff 454.1px,#00f 455.1px,#3b00ff 455.5px,#9600ff 456.5px,#9600ff 460px,#0000 460px,#0000 490px)}
.c89{background:linear-gradient(#0000 0px,#0000 143px,#9600ff 143px,#9600ff 143.5px,#7500ff 188.5px,#00f 201.3px,#0003ff 201.5px,#003eff 210.5px,#0ff 215.1px,#0f0 221.1px,#12ff00 221.5px,#ff0 224.2px,#ffe600 224.5px,#ffd900 238.5px,#ff0 239px,#85ff00 240.5px,#52ff00 242.5px,#8f0 312.5px,#deff00 314.5px,#ff0 314.9px,#ffd200 315.5px,#ff2800 316.5px,#f00 317.5px,#f00 347.5px,#ffc500 348.5px,#ff0 348.7px,#0f0 349.5px,#0ff 350.3px,#00f 351.1px,#4200ff 351.5px,#9600ff 352.5px,#7800ff 353.5px,#9600ff 441.5px,#7a00ff 442.5px,#00f 443.7px,#0085ff 444.5px,#0ff 445.1px,#0f0 446.2px,#ff0 447.4px,#ffec00 447.5px,#ffa700 448.5px,#ffa600 450.5px,#ffda00 451.5px,#ff0 451.7px,#0f0 452.7px,#0ff 453.8px,#00f 454.8px,#6200ff 455.5px,#9600ff 456.5px,#9600ff 459px,#0000 459px,#0000 490px)}
.c90{background:linear-gradient(#0000 0px,#0000 143px,#9600ff 143px,#9600ff 143.5px,#7800ff 178.5px,#00f 190.4px,#0001ff 190.5px,#003fff 206.5px,#00f7ff 211.5px,#0ff 211.8px,#00ff01 221.5px,#0f0 221.5px,#9bff00 224.5px,#ff0 229.2px,#fff900 229.5px,#ff0 232.4px,#f2ff00 238.5px,#bf0 241.5px,#16ff00 267.5px,#2fff00 313.5px,#f5ff00 315.5px,#ff0 315.6px,#ff6500 316.5px,#f00 317.5px,#f00 347.5px,#ff9200 348.5px,#ff0 348.9px,#0f0 349.7px,#0ff 350.5px,#00f 351.3px,#2400ff 351.5px,#9600ff 352.5px,#7d00ff 353.5px,#8100ff 382.5px,#5100ff 385.5px,#8900ff 389.5px,#9600ff 394.5px,#9600ff 442.5px,#5100ff 443.5px,#00f 444.3px,#00caff 445.5px,#0ff 445.7px,#0f0 446.8px,#ff0 447.9px,#ff7800 448.5px,#f00 449.5px,#f00 451.5px,#ff0 452.4px,#0f0 453.4px,#0ff 454.3px,#00cfff 454.5px,#00f 455.4px,#9400ff 456.5px,#9600ff 458.5px,#9600ff 459px,#0000 459px,#0000 490px)}
.c91{background:linear-gradient(#0000 0px,#0000 179px,#9600ff 179px,#9600ff 179.5px,#00f 195.4px,#0001ff 195.5px,#0049ff 215.5px,#0ff 220.3px,#0f0 226.9px,#16ff00 227.5px,#9bff00 235.5px,#5fff00 267.5px,#78ff00 312.5px,#fbff00 314.5px,#ff0 314.5px,#ff6200 315.5px,#f00 316.5px,#f00 347.5px,#ff8200 348.5px,#ff0 348.9px,#0f0 349.7px,#0ff 350.5px,#00f 351.4px,#1a00ff 351.5px,#9600ff 352.5px,#7100ff 353.5px,#7600ff 382.5px,#5c00ff 385.5px,#7900ff 386.5px,#6a00ff 387.5px,#8900ff 389.5px,#9600ff 394.5px,#9600ff 441.5px,#8400ff 442.5px,#00f 443.8px,#0074ff 444.5px,#0ff 445.2px,#00ffd0 445.5px,#0f0 446.3px,#ff0 447.4px,#ffdb00 447.5px,#ff1700 448.5px,#f00 450.5px,#ff7b00 451.5px,#ff0 452px,#0f0 452.9px,#00ffae 453.5px,#0ff 453.8px,#00f 454.9px,#50f 455.5px,#9600ff 456.5px,#9600ff 458px,#0000 458px,#0000 490px)}
.c92{background:linear-gradient(#0000 0px,#0000 179px,#9600ff 179px,#9600ff 179.5px,#7f00ff 184.5px,#00f 196.4px,#0002ff 196.5px,#003eff 221.5px,#0ff 227.5px,#0f0 235.3px,#05ff00 235.5px,#62ff00 243.5px,#79ff00 311.5px,#ff0 314.5px,#fffe00 314.5px,#ff5400 315.5px,#f00 316.5px,#f00 347.5px,#ffc700 348.5px,#ff0 348.7px,#0f0 349.5px,#0ff 350.3px,#00beff 350.5px,#00f 350.9px,#9600ff 351.5px,#7800ff 385.5px,#9600ff 394.5px,#9600ff 440.5px,#8d00ff 441.5px,#00f 442.9px,#0064ff 443.5px,#0ff 444.4px,#00ffe9 444.5px,#0f0 445.4px,#ff0 446.4px,#fe0 446.5px,#ff2a00 447.5px,#f00 449.5px,#ff6200 450.5px,#ff0 451.1px,#0f0 452px,#00ff95 452.5px,#0ff 452.9px,#00f 454px,#4900ff 454.5px,#9600ff 455.5px,#9600ff 459px,#0000 459px,#0000 490px)}
.c93{background:linear-gradient(#0000 0px,#0000 179px,#9600ff 179px,#9600ff 179.5px,#00f 195.4px,#0001ff 195.5px,#003eff 212.5px,#0ff 217.7px,#00ff06 224.5px,#0f0 225.2px,#47ff00 232.5px,#57ff00 313.5px,#f3ff00 315.5px,#ff0 315.6px,#f00 317.5px,#f00 346.5px,#ffb200 347.5px,#ff0 347.7px,#0f0 348.6px,#0ff 349.4px,#00f 350.2px,#3700ff 350.5px,#9600ff 351.5px,#9100ff 381.5px,#6800ff 385.5px,#7a00ff 386.5px,#5d00ff 387.5px,#9500ff 390.5px,#9600ff 441.5px,#5c00ff 442.5px,#00f 443.4px,#00b7ff 444.5px,#0ff 444.8px,#0f0 445.9px,#ff0 447px,#ff8e00 447.5px,#f00 448.5px,#f00 450.5px,#ffe000 451.5px,#ff0 451.6px,#0f0 452.4px,#00ff14 452.5px,#0ff 453.4px,#00f 454.4px,#0a00ff 454.5px,#8700ff 455.5px,#9600ff 457.5px,#9600ff 458px,#0000 458px,#0000 490px)}
.c94{background:linear-gradient(#0000 0px,#0000 170px,#9600ff 170px,#9600ff 170.5px,#6700ff 186.5px,#00f 198.4px,#0001ff 198.5px,#003fff 224.5px,#00f9ff 229.5px,#0ff 229.8px,#0f1 239.5px,#0f0 240.7px,#72ff00 248.5px,#8f0 311.5px,#ff0 313.7px,#ffd600 314.5px,#ff2c00 315.5px,#f00 316.5px,#f00 347.5px,#ff0 348.5px,#feff00 348.5px,#0f0 349.3px,#0ff 350.1px,#007eff 350.5px,#00f 350.8px,#9600ff 351.5px,#7000ff 352.5px,#7100ff 386.5px,#9600ff 394.5px,#9600ff 442.5px,#4e00ff 443.5px,#00f 444.3px,#00cfff 445.5px,#0ff 445.7px,#0f0 446.8px,#ff0 447.9px,#ff7200 448.5px,#f00 449.5px,#ff0500 451.5px,#ff0 452.4px,#0f0 453.4px,#0ff 454.4px,#00f 455.3px,#1b00ff 455.5px,#9600ff 456.5px,#9600ff 458px,#0000 458px,#0000 490px)}
.c95{background:linear-gradient(#0000 0px,#0000 136px,#9600ff 136px,#9600ff 140.5px,#6200ff 141.5px,#5200ff 173.5px,#00f 173.8px,#0ff 174.5px,#0f0 175.1px,#9f0 175.5px,#ff0 176.1px,#f00 177.5px,#f00 185.5px,#f30 186.5px,#ff0 188.5px,#80ff00 194.5px,#0f0 209.5px,#00ffb2 230.5px,#00fff7 246.5px,#00fff7 315.5px,#0f0 316.5px,#04ff00 316.5px,#ff0 317.2px,#ff8000 317.5px,#f00 318.5px,#f00 324.5px,#ff0 325.6px,#1aff00 326.5px,#3f0 366.5px,#d6ff00 368.5px,#ff0 368.8px,#f00 370.5px,#f00 375.5px,#f50 376.5px,#ff0 377.5px,#0f0 378.6px,#00ffd5 379.5px,#0ff 379.7px,#00f 381.1px,#9600ff 382.5px,#6400ff 386.5px,#80f 388.5px,#9600ff 394.5px,#9600ff 442.5px,#00f 444px,#00f8ff 445.5px,#0ff 445.5px,#0f0 446.5px,#f5ff00 447.5px,#ff0 447.6px,#ff4300 448.5px,#f00 449.5px,#f00 450.5px,#ff4200 451.5px,#ff0 452.2px,#0f0 453.1px,#0ff 454.1px,#008aff 454.5px,#00f 455.1px,#3900ff 455.5px,#9600ff 456.5px,#9600ff 460px,#0000 460px,#0000 490px)}
.c96{background:linear-gradient(#0000 0px,#0000 48px,#9600ff 48px,#9600ff 48.5px,#8700ff 134.5px,#6200ff 141.5px,#5200ff 173.5px,#00f 173.8px,#0ff 174.5px,#0f0 175.1px,#9f0 175.5px,#ff0 176.1px,#f00 177.5px,#f00 185.5px,#f30 186.5px,#ff0 188.5px,#80ff00 194.5px,#0f0 210.2px,#0ff 241.7px,#00e1ff 245.5px,#00e1ff 315.5px,#0ff 315.6px,#00ff0f 316.5px,#0f0 316.5px,#ff0 317.2px,#ff8000 317.5px,#f00 318.5px,#f00 324.5px,#ff0 325.6px,#1aff00 326.5px,#3f0 366.5px,#d6ff00 368.5px,#ff0 368.8px,#f00 370.5px,#f00 375.5px,#f50 376.5px,#ff0 377.5px,#0f0 378.6px,#00ffd5 379.5px,#0ff 379.7px,#00f 381.1px,#9600ff 382.5px,#5f00ff 386.5px,#9500ff 390.5px,#9600ff 441.5px,#7600ff 442.5px,#00f 443.7px,#008bff 444.5px,#0ff 445px,#0f0 446.2px,#ff0 447.4px,#ffe900 447.5px,#ffa600 448.5px,#ffa600 450.5px,#fd0 451.5px,#ff0 451.6px,#0f0 452.7px,#0ff 453.7px,#00f 454.8px,#60f 455.5px,#9600ff 456.5px,#9600ff 458px,#0000 458px,#0000 490px)}
.c97{background:linear-gradient(#0000 0px,#0000 46px,#9600ff 46px,#9600ff 46.5px,#7b00ff 50.5px,#6900ff 134.5px,#0800ff 141.5px,#00f 157.5px,#000dff 173.5px,#0ff 174.2px,#0f0 175px,#9f0 175.5px,#ff0 176.1px,#f00 177.5px,#f00 185.5px,#f30 186.5px,#ff0 188.5px,#80ff00 194.5px,#0f0 204.6px,#00ff19 206.5px,#00ffb2 230.5px,#00ffd3 244.5px,#00ffd3 315.5px,#0f0 316.4px,#16ff00 316.5px,#ff0 317.1px,#ff8000 317.5px,#f00 318.5px,#f00 324.5px,#ff0 325.6px,#1aff00 326.5px,#3f0 366.5px,#d6ff00 368.5px,#ff0 368.8px,#f00 370.5px,#f00 375.5px,#f50 376.5px,#ff0 377.5px,#0f0 378.6px,#00ffd5 379.5px,#0ff 379.7px,#00f 381.1px,#9600ff 382.5px,#9600ff 383.5px,#5e00ff 384.5px,#9500ff 390.5px,#9600ff 442.5px,#00f 444.1px,#00d4ff 445.5px,#0ff 445.7px,#0f0 446.7px,#bfff00 447.5px,#ff0 448.1px,#fc0 448.5px,#ffa600 449.5px,#fa0 451.5px,#ff0 452.3px,#efff00 452.5px,#0f0 453.4px,#0ff 454.3px,#00bfff 454.5px,#00f 455.4px,#9600ff 456.5px,#9600ff 460px,#0000 460px,#0000 490px)}
.c98{background:linear-gradient(#0000 0px,#0000 44px,#9600ff 44px,#9600ff 44.5px,#7b00ff 48.5px,#2d00ff 134.5px,#0800ff 141.5px,#00f 141.8px,#00f2ff 146.5px,#00f2ff 160.5px,#00f 166.2px,#0800ff 166.5px,#00f 170px,#000dff 173.5px,#0ff 174.2px,#0f0 175px,#9f0 175.5px,#ff0 176.1px,#f00 177.5px,#f00 185.5px,#f30 186.5px,#ff0 188.5px,#80ff00 194.5px,#3fff00 206.5px,#0f0 211.9px,#00ff4c 218.5px,#0ff 241.4px,#00e6ff 244.5px,#00e6ff 315.5px,#0ff 315.6px,#00ff0c 316.5px,#0f0 316.5px,#ff0 317.2px,#ff8000 317.5px,#f00 318.5px,#f00 324.5px,#ff0 325.6px,#1aff00 326.5px,#3f0 366.5px,#ff0 371.5px,#ffb300 375.5px,#ff0 377.5px,#0f0 378.6px,#00ffd5 379.5px,#0ff 379.7px,#00f 381.1px,#9600ff 382.5px,#7600ff 386.5px,#9500ff 390.5px,#9600ff 441.5px,#80f 442.5px,#00f 443.9px,#006dff 444.5px,#0ff 445.3px,#00ffdb 445.5px,#0f0 446.4px,#ff0 447.4px,#ffe300 447.5px,#ff1f00 448.5px,#f00 450.5px,#ff7100 451.5px,#ff0 452px,#0f0 452.9px,#00ffa4 453.5px,#0ff 453.9px,#00f 454.9px,#5000ff 455.5px,#9600ff 456.5px,#9600ff 459px,#0000 459px,#0000 490px)}
.c99{background:linear-gradient(#0000 0px,#0000 47px,#9600ff 47px,#9600ff 47.5px,#7b00ff 51.5px,#2d00ff 134.5px,#0800ff 141.5px,#00f 141.8px,#00bfff 146.5px,#00bfff 160.5px,#00f 166.1px,#0800ff 166.5px,#00f 170px,#000dff 173.5px,#0ff 174.2px,#0f0 175px,#9f0 175.5px,#ff0 176.1px,#f00 177.5px,#f00 185.5px,#f30 186.5px,#ff0 188.5px,#80ff00 194.5px,#0f0 205.8px,#00ff08 206.5px,#00ffb3 230.5px,#00ffdf 244.5px,#00ffdf 315.5px,#0f0 316.4px,#10ff00 316.5px,#ff0 317.2px,#ff8000 317.5px,#f00 318.5px,#f00 324.5px,#ff0 325.5px,#0f0 326.1px,#0f9 326.5px,#0f9 366.5px,#0f6 378.5px,#0ff 379.8px,#0af 380.5px,#00f 381.5px,#6400ff 382.5px,#9600ff 383.5px,#5900ff 385.5px,#9200ff 390.5px,#9600ff 441.5px,#8700ff 442.5px,#00f 443.8px,#006fff 444.5px,#0ff 445.3px,#00ffd8 445.5px,#0f0 446.4px,#ff0 447.4px,#ffe100 447.5px,#ff1d00 448.5px,#f00 450.5px,#ff7400 451.5px,#ff0 452px,#0f0 452.9px,#00ffa7 453.5px,#0ff 453.9px,#00f 454.9px,#5200ff 455.5px,#9600ff 456.5px,#9600ff 459px,#0000 459px,#0000 490px)}
.c100{background:linear-gradient(#0000 0px,#0000 47px,#9600ff 47px,#9600ff 47.5px,#7b00ff 51.5px,#2d00ff 134.5px,#0800ff 141.5px,#00f 157.5px,#000dff 173.5px,#0ff 174.2px,#0f0 175px,#9f0 175.5px,#ff0 176.5px,#f90 177.5px,#f90 185.5px,#ff0 189.5px,#80ff00 194.5px,#0f0 209.5px,#00ffb3 230.5px,#00ffc9 315.5px,#0f0 316.4px,#1bff00 316.5px,#ff0 317.1px,#ff8000 317.5px,#f00 318.5px,#f00 324.5px,#ff0 325.6px,#1aff00 326.5px,#0f0 361.9px,#00ff03 366.5px,#0f6 378.5px,#0ff 379.8px,#0af 380.5px,#00f 381.5px,#6400ff 382.5px,#9600ff 383.5px,#6a00ff 384.5px,#70f 386.5px,#6000ff 387.5px,#8900ff 389.5px,#9600ff 394.5px,#9600ff 441.5px,#00f 443.1px,#00e8ff 444.5px,#0ff 444.6px,#0f0 445.7px,#ff0 446.8px,#f50 447.5px,#f00 448.5px,#f00 449.5px,#ff2a00 450.5px,#ff0 451.3px,#0f0 452.2px,#0ff 453.2px,#00a2ff 453.5px,#00f 454.2px,#2e00ff 454.5px,#9600ff 455.5px,#9600ff 459px,#0000 459px,#0000 490px)}
.c101{background:linear-gradient(#0000 0px,#0000 47px,#9600ff 47px,#9600ff 47.5px,#7b00ff 51.5px,#7b00ff 52px,#0000 52px,#0000 61px,#7d00ff 61px,#7d00ff 61.5px,#6900ff 134.5px,#0800ff 141.5px,#00f 157.5px,#000dff 173.5px,#0ff 174.2px,#0f0 175px,#9f0 175.5px,#ff0 176.1px,#f00 177.5px,#f00 185.5px,#f30 186.5px,#ff0 188.5px,#80ff00 194.5px,#0f0 204.4px,#00ff1b 206.5px,#00ff4c 218.5px,#0ff 240.6px,#00e0ff 244.5px,#00e0ff 315.5px,#0ff 315.6px,#00ff10 316.5px,#0f0 316.5px,#ff0 317.2px,#ff8000 317.5px,#f00 318.5px,#f00 324.5px,#ff0 325.6px,#1aff00 326.5px,#0f0 336.9px,#0f6 378.5px,#0ff 379.8px,#0af 380.5px,#00f 381.5px,#6400ff 382.5px,#9600ff 383.5px,#70f 385.5px,#9600ff 394.5px,#9600ff 442.5px,#6e00ff 443.5px,#00f 444.6px,#009aff 445.5px,#0ff 445.9px,#0f0 447px,#ff0 448.2px,#ffb000 448.5px,#f00 449.5px,#f00 451.5px,#ffb400 452.5px,#ff0 452.8px,#0f0 453.7px,#00ffe7 454.5px,#0ff 454.6px,#00f 455.7px,#7100ff 456.5px,#9600ff 457.5px,#9600ff 459px,#0000 459px,#0000 490px)}
.c102{background:linear-gradient(#0000 0px,#0000 61px,#7d00ff 61px,#7d00ff 61.5px,#7e00ff 67.5px,#7e00ff 68px,#0000 68px,#0000 73px,#7e00ff 73px,#7e00ff 73.5px,#7f00ff 74.5px,#7f00ff 75px,#0000 75px,#0000 80px,#8000ff 80px,#8000ff 80.5px,#7e00ff 88.5px,#7e00ff 89px,#0000 89px,#0000 103px,#7a00ff 103px,#7a00ff 103.5px,#7900ff 108.5px,#7900ff 109px,#0000 109px,#0000 139px,#2300ff 139px,#2300ff 139.5px,#0800ff 141.5px,#00f 157.5px,#000dff 173.5px,#0ff 174.2px,#0f0 175px,#9f0 175.5px,#ff0 176.1px,#f00 177.5px,#f00 185.5px,#f30 186.5px,#ff0 188.5px,#80ff00 194.5px,#03ff00 206.5px,#0f0 206.9px,#0ff 243.7px,#00f9ff 244.5px,#00f9ff 315.5px,#0ff 315.5px,#00ff03 316.5px,#0f0 316.5px,#ff0 317.2px,#ff8000 317.5px,#f00 318.5px,#f00 324.5px,#ff0 325.6px,#1aff00 326.5px,#3f0 366.5px,#d6ff00 368.5px,#ff0 368.8px,#f00 370.5px,#f00 375.5px,#f50 376.5px,#ff0 377.5px,#0f0 378.6px,#00ffd5 379.5px,#0ff 379.7px,#00f 381.1px,#9600ff 382.5px,#6800ff 385.5px,#9600ff 394.5px,#9600ff 442.5px,#7e00ff 443.5px,#00f 444.8px,#007dff 445.5px,#0ff 446.1px,#0f0 447.3px,#ff0 448.4px,#ffef00 448.5px,#fa0 449.5px,#ffa600 450.5px,#ffd600 452.5px,#ff0 452.7px,#0f0 453.7px,#0ff 454.8px,#00f 455.8px,#5c00ff 456.5px,#9600ff 457.5px,#9600ff 459px,#0000 459px,#0000 490px)}
.c103{background:linear-gradient(#0000 0px,#0000 48px,#9600ff 48px,#9600ff 48.5px,#7b00ff 52.5px,#6900ff 134.5px,#0800ff 141.5px,#00f 141.9px,#00a6ff 146.5px,#00a6ff 160.5px,#00f 166.1px,#0800ff 166.5px,#00f 170px,#000dff 173.5px,#0ff 174.2px,#0f0 175px,#9f0 175.5px,#ff0 176.1px,#f00 177.5px,#f00 185.5px,#f30 186.5px,#ff0 188.5px,#80ff00 194.5px,#0f0 205.8px,#00ff08 206.5px,#00ffe9 244.5px,#00ffe9 315.5px,#0f0 316.5px,#0bff00 316.5px,#ff0 317.2px,#ff8000 317.5px,#f00 318.5px,#f00 324.5px,#ff0 325.6px,#1aff00 326.5px,#3f0 366.5px,#d6ff00 368.5px,#ff0 368.8px,#f00 370.5px,#f00 375.5px,#f50 376.5px,#ff0 377.5px,#0f0 378.6px,#00ffd5 379.5px,#0ff 379.7px,#00f 381.1px,#9600ff 382.5px,#9600ff 383.5px,#7000ff 384.5px,#9600ff 394.5px,#9600ff 441.5px,#00f 443.1px,#00d4ff 444.5px,#0ff 444.7px,#0f0 445.8px,#ff0 446.9px,#ff6d00 447.5px,#f00 448.5px,#f00 449.5px,#ff0b00 450.5px,#ff0 451.4px,#0f0 452.3px,#0ff 453.3px,#00c1ff 453.5px,#00f 454.4px,#9600ff 455.5px,#9600ff 458px,#0000 458px,#0000 490px)}
.c104{background:linear-gradient(#0000 0px,#0000 47px,#9600ff 47px,#9600ff 47.5px,#7b00ff 51.5px,#6900ff 134.5px,#0800ff 141.5px,#00f 157.5px,#000dff 173.5px,#0ff 174.2px,#0f0 175px,#9f0 175.5px,#ff0 176.1px,#f00 177.5px,#f00 185.5px,#f30 186.5px,#ff0 188.5px,#80ff00 194.5px,#0f0 205.7px,#00ff0a 206.5px,#00fffe 244.5px,#00fffe 315.5px,#0f0 316.5px,#0f0 316.5px,#ff0 317.2px,#ff8000 317.5px,#f00 318.5px,#f00 324.5px,#ff0 325.6px,#1aff00 326.5px,#3f0 366.5px,#d6ff00 368.5px,#ff0 368.8px,#f00 370.5px,#f00 375.5px,#f50 376.5px,#ff0 377.5px,#0f0 378.6px,#00ffd5 379.5px,#0ff 379.7px,#00f 381.1px,#9600ff 382.5px,#6c00ff 386.5px,#9500ff 390.5px,#9600ff 441.5px,#5d00ff 442.5px,#00f 443.4px,#00b5ff 444.5px,#0ff 444.8px,#0f0 445.9px,#ff0 447px,#ff9000 447.5px,#f00 448.5px,#f00 450.5px,#fd0 451.5px,#ff0 451.6px,#0f0 452.4px,#0f1 452.5px,#0ff 453.4px,#00f 454.4px,#0800ff 454.5px,#8500ff 455.5px,#9600ff 459.5px,#9600ff 460px,#0000 460px,#0000 490px)}
.c105{background:linear-gradient(#0000 0px,#0000 47px,#9600ff 47px,#9600ff 47.5px,#7b00ff 51.5px,#2d00ff 134.5px,#0800ff 141.5px,#00f 157.5px,#000dff 173.5px,#0ff 174.2px,#0f0 175px,#9f0 175.5px,#ff0 176.1px,#f00 177.5px,#f00 185.5px,#f30 186.5px,#ff0 188.5px,#80ff00 194.5px,#3fff00 206.5px,#0f0 212.8px,#00ffb3 230.5px,#00ffec 244.5px,#00ffec 315.5px,#0f0 316.5px,#09ff00 316.5px,#ff0 317.2px,#ff8000 317.5px,#f00 318.5px,#f00 324.5px,#ff0 325.6px,#1aff00 326.5px,#3f0 366.5px,#ff0 371.5px,#ffb300 375.5px,#ff0 377.5px,#0f0 378.6px,#00ffd5 379.5px,#0ff 379.7px,#00f 381.1px,#9600ff 382.5px,#6100ff 385.5px,#8e00ff 389.5px,#9600ff 394.5px,#9600ff 442.5px,#00f 444.1px,#00dbff 445.5px,#0ff 445.7px,#0f0 446.7px,#ff0 447.8px,#ff6400 448.5px,#f00 449.5px,#f00 450.5px,#ff1700 451.5px,#ff0 452.4px,#0f0 453.3px,#0ff 454.2px,#00b5ff 454.5px,#00f 455.3px,#9600ff 456.5px,#9600ff 459px,#0000 459px,#0000 490px)}
.c106{background:linear-gradient(#0000 0px,#0000 44px,#9600ff 44px,#9600ff 44.5px,#7b00ff 48.5px,#2d00ff 134.5px,#0800ff 141.5px,#00f 141.9px,#008cff 146.5px,#008cff 160.5px,#00f 166px,#0800ff 166.5px,#00f 170px,#000dff 173.5px,#0ff 174.2px,#0f0 175px,#9f0 175.5px,#ff0 176.1px,#f00 177.5px,#f00 185.5px,#f30 186.5px,#ff0 188.5px,#80ff00 194.5px,#0f0 209.5px,#00ffb3 230.5px,#00ffd6 244.5px,#00ffd6 315.5px,#0f0 316.4px,#15ff00 316.5px,#ff0 317.1px,#ff8000 317.5px,#f00 318.5px,#f00 324.5px,#ff0 325.5px,#0f0 326.1px,#0f9 326.5px,#0f9 366.5px,#0f6 378.5px,#0ff 379.8px,#0af 380.5px,#00f 381.5px,#6400ff 382.5px,#9600ff 383.5px,#6e00ff 384.5px,#7f00ff 385.5px,#50f 386.5px,#8b00ff 389.5px,#9600ff 394.5px,#9600ff 442.5px,#00f 444.1px,#00e4ff 445.5px,#0ff 445.6px,#0f0 446.7px,#ff0 447.8px,#ff5a00 448.5px,#f00 449.5px,#f00 450.5px,#ff2400 451.5px,#ff0 452.3px,#0f0 453.2px,#0ff 454.2px,#00a8ff 454.5px,#00f 455.3px,#9600ff 456.5px,#9600ff 459px,#0000 459px,#0000 490px)}
.c107{background:linear-gradient(#0000 0px,#0000 47px,#9600ff 47px,#9600ff 47.5px,#7b00ff 51.5px,#2d00ff 134.5px,#0800ff 141.5px,#00f 141.8px,#00f2ff 146.5px,#00f2ff 160.5px,#00f 166.2px,#0800ff 166.5px,#00f 170px,#000dff 173.5px,#0ff 174.2px,#0f0 175px,#9f0 175.5px,#ff0 176.5px,#f90 177.5px,#f90 185.5px,#ff0 189.5px,#80ff00 194.5px,#0f0 204.1px,#00ff20 206.5px,#00ffb3 230.5px,#00ffe8 244.5px,#00ffe8 315.5px,#0f0 316.5px,#0cff00 316.5px,#ff0 317.2px,#ff8000 317.5px,#f00 318.5px,#f00 324.5px,#ff0 325.6px,#1aff00 326.5px,#07ff00 366.5px,#0f0 367.3px,#0f6 378.5px,#0ff 379.8px,#0af 380.5px,#00f 381.5px,#6400ff 382.5px,#9600ff 383.5px,#7e00ff 387.5px,#9600ff 394.5px,#9200ff 442.5px,#00f 444px,#0ff 445.4px,#00fff6 445.5px,#0f0 446.5px,#ff0 447.5px,#fffd00 447.5px,#ffb800 448.5px,#ffa600 450.5px,#ffc400 451.5px,#ff0 451.9px,#94ff00 452.5px,#0f0 453.1px,#0ff 454.1px,#00f 455.1px,#4300ff 455.5px,#9600ff 456.5px,#9600ff 459px,#0000 459px,#0000 490px)}
.c108{background:linear-gradient(#0000 0px,#0000 50px,#9600ff 50px,#9600ff 50.5px,#8700ff 134.5px,#6200ff 141.5px,#5200ff 173.5px,#00f 173.8px,#0ff 174.5px,#0f0 175.1px,#9f0 175.5px,#ff0 176.5px,#f90 177.5px,#f90 185.5px,#ff0 189.5px,#80ff00 194.5px,#0f0 209.5px,#00ffb3 230.5px,#00ffe4 244.5px,#00ffe4 315.5px,#0f0 316.4px,#0eff00 316.5px,#ff0 317.2px,#ff8000 317.5px,#f00 318.5px,#f00 324.5px,#ff0 325.6px,#1aff00 326.5px,#14ff00 366.5px,#0f0 368.5px,#0f6 378.5px,#0ff 379.8px,#0af 380.5px,#00f 381.5px,#6400ff 382.5px,#9600ff 383.5px,#7600ff 384.5px,#9600ff 394.5px,#9600ff 441.5px,#00f 443.1px,#00e0ff 444.5px,#0ff 444.6px,#0f0 445.7px,#ff0 446.8px,#ff5f00 447.5px,#f00 448.5px,#f00 449.5px,#ff1e00 450.5px,#ff0 451.3px,#0f0 452.3px,#0ff 453.2px,#00aeff 453.5px,#00f 454.3px,#9600ff 455.5px,#9600ff 460px,#0000 460px,#0000 490px)}
.c109{background:linear-gradient(#0000 0px,#0000 102px,#9600ff 102px,#9600ff 102.5px,#5200ff 173.5px,#00f 173.8px,#0ff 174.5px,#0f0 175.1px,#9f0 175.5px,#e5ff00 177.5px,#ff0 188.5px,#80ff00 194.5px,#0f0 205.8px,#00ff08 206.5px,#0fa 231.5px,#00ffb7 245.5px,#00ff6d 256.5px,#00ff3c 278.5px,#00ff5e 281.5px,#00ff3d 282.5px,#00ffc7 315.5px,#0f0 316.4px,#15ff00 316.5px,#ff0 317.1px,#ff8000 317.5px,#f00 318.5px,#f00 324.5px,#ff0 325.6px,#1eff00 326.5px,#31ff00 366.5px,#0f0 370.4px,#0f6 378.5px,#0ff 379.8px,#0af 380.5px,#00f 381.5px,#6400ff 382.5px,#9600ff 383.5px,#5700ff 385.5px,#7c00ff 386.5px,#9400ff 390.5px,#9600ff 409.5px,#9600ff 441.5px,#60f 442.5px,#00f 443.5px,#00a7ff 444.5px,#0ff 444.9px,#0f0 446px,#ff0 447.1px,#ffa000 447.5px,#f00 448.5px,#f00 450.5px,#ffc800 451.5px,#ff0 451.7px,#05ff00 452.5px,#0f0 452.5px,#0ff 453.6px,#00f 454.6px,#7b00ff 455.5px,#9600ff 457.5px,#9600ff 458px,#0000 458px,#0000 490px)}
.c110{background:linear-gradient(#0000 0px,#0000 98px,#9600ff 98px,#9600ff 194.5px,#00f 206.5px,#00f 206.5px,#00a0ff 224.5px,#0ff 228px,#00ff6c 233.5px,#0f0 238.9px,#46ff00 242.5px,#86ff00 307.5px,#b4ff00 313.5px,#e4ff00 314.5px,#ff0 314.7px,#f00 316.5px,#ff1300 347.5px,#ff0 348.3px,#0f0 349.1px,#0ff 349.9px,#00f 350.7px,#9600ff 351.5px,#8900ff 382.5px,#6b00ff 386.5px,#9000ff 389.5px,#9600ff 409.5px,#9600ff 441.5px,#5e00ff 442.5px,#00f 443.4px,#00b4ff 444.5px,#0ff 444.8px,#0f0 445.9px,#ff0 447px,#ff9100 447.5px,#f00 448.5px,#f00 450.5px,#ffdb00 451.5px,#ff0 451.6px,#0f0 452.5px,#00ff0f 452.5px,#0ff 453.4px,#00f 454.5px,#0700ff 454.5px,#8400ff 455.5px,#9600ff 458.5px,#9600ff 459px,#0000 459px,#0000 490px)}
.c111{background:linear-gradient(#0000 0px,#0000 98px,#9600ff 98px,#9600ff 194.5px,#00f 206.5px,#00f 206.5px,#00a3ff 224.5px,#0ff 228px,#00ff51 234.5px,#0f0 238.8px,#47ff00 242.5px,#adff00 295.5px,#ff0 302.4px,#fff200 303.5px,#ff3f00 312.5px,#ff0 313.5px,#fdff00 313.5px,#b8ff00 314.5px,#ff0 315.5px,#ff0 315.5px,#ff5600 316.5px,#f00 317.5px,#f00 347.5px,#ff9300 348.5px,#ff0 348.8px,#0f0 349.7px,#0ff 350.5px,#00f 351.3px,#2400ff 351.5px,#9600ff 352.5px,#7c00ff 353.5px,#8200ff 383.5px,#6d00ff 386.5px,#80f 387.5px,#9600ff 394.5px,#9600ff 441.5px,#5c00ff 442.5px,#00f 443.4px,#00b7ff 444.5px,#0ff 444.8px,#0f0 445.9px,#ff0 447px,#ff8e00 447.5px,#f00 448.5px,#f00 450.5px,#ffe000 451.5px,#ff0 451.6px,#0f0 452.4px,#00ff14 452.5px,#0ff 453.4px,#00f 454.4px,#0a00ff 454.5px,#8700ff 455.5px,#9600ff 459.5px,#9600ff 460px,#0000 460px,#0000 490px)}
.c112{background:linear-gradient(#0000 0px,#0000 146px,#9600ff 146px,#9600ff 194.5px,#00f 206.5px,#00f 206.5px,#00a6ff 224.5px,#0ff 227.8px,#00ff49 234.5px,#0f0 238.3px,#52ff00 242.5px,#d9ff00 284.5px,#ff0 286.2px,#ff6100 293.5px,#ff0f00 300.5px,#ff3200 302.5px,#ff0700 306.5px,#ff5700 309.5px,#f40 311.5px,#ff5900 312.5px,#ffeb00 313.5px,#ff0 314.5px,#ff5d00 315.5px,#f00 316.5px,#f00 346.5px,#ffb900 347.5px,#ff0 347.7px,#0f0 348.5px,#0ff 349.4px,#00f 350.2px,#3b00ff 350.5px,#9600ff 351.5px,#9100ff 382.5px,#7f00ff 385.5px,#5f00ff 386.5px,#9400ff 390.5px,#9600ff 410.5px,#9600ff 441.5px,#5c00ff 442.5px,#00f 443.4px,#00b8ff 444.5px,#0ff 444.8px,#0f0 445.9px,#ff0 447px,#ff8d00 447.5px,#f00 448.5px,#f00 450.5px,#ffe100 451.5px,#ff0 451.6px,#0f0 452.4px,#00ff15 452.5px,#0ff 453.4px,#00f 454.4px,#0a00ff 454.5px,#8700ff 455.5px,#9600ff 459.5px,#9600ff 460px,#0000 460px,#0000 490px)}
.c113{background:linear-gradient(#0000 0px,#0000 189px,#9600ff 189px,#9600ff 189.5px,#7e00ff 198.5px,#0500ff 207.5px,#00f 207.7px,#0ff 213.4px,#00fffd 213.5px,#0f0 228.1px,#81ff00 235.5px,#81ff00 257.5px,#ff0 273.8px,#ffdb00 278.5px,#ffe500 284.5px,#ffa700 286.5px,#ff2800 287.5px,#ff2400 289.5px,#ff5100 290.5px,#ff2700 293.5px,#ff8900 296.5px,#ff0 304.7px,#9cff00 311.5px,#bfff00 313.5px,#ff0 314.3px,#fff000 314.5px,#ff4700 315.5px,#f00 316.5px,#f00 346.5px,#ff2d00 347.5px,#ff0 348.2px,#0f0 349px,#0ff 349.8px,#00f 350.7px,#9600ff 351.5px,#8e00ff 382.5px,#6000ff 385.5px,#7d00ff 386.5px,#9300ff 390.5px,#9600ff 440.5px,#7400ff 441.5px,#00f 442.7px,#008fff 443.5px,#0ff 444.1px,#00ffa8 444.5px,#0f0 445.2px,#ff0 446.2px,#ffbc00 446.5px,#f00 447.5px,#f00 449.5px,#ffa300 450.5px,#ff0 450.8px,#0f0 451.7px,#00ffd6 452.5px,#0ff 452.7px,#00f 453.7px,#6900ff 454.5px,#9600ff 455.5px,#9600ff 459px,#0000 459px,#0000 490px)}
.c114{background:linear-gradient(#0000 0px,#0000 189px,#9600ff 189px,#9600ff 189.5px,#7300ff 197.5px,#00f 207.5px,#00f 207.6px,#0046ff 219.5px,#0ff 224.6px,#00ffdf 225.5px,#0f0 236px,#8cff00 242.5px,#8fff00 256.5px,#ff0 259.2px,#fff300 259.5px,#ffcd00 270.5px,#ff0 280px,#edff00 283.5px,#ff0 285.7px,#ffe800 288.5px,#ff0 290.8px,#b4ff00 298.5px,#91ff00 312.5px,#f8ff00 314.5px,#ff0 314.6px,#f00 316.5px,#f00 347.5px,#ff6000 348.5px,#ff0 349px,#0f0 349.8px,#0ff 350.6px,#00f 351.5px,#0600ff 351.5px,#9600ff 352.5px,#7d00ff 385.5px,#9400ff 390.5px,#9600ff 441.5px,#00f 443px,#00f4ff 444.5px,#0ff 444.5px,#0f0 445.6px,#efff00 446.5px,#ff0 446.6px,#ff4700 447.5px,#f00 448.5px,#f00 449.5px,#ff3c00 450.5px,#ff0 451.2px,#0f0 452.2px,#0ff 453.1px,#0090ff 453.5px,#00f 454.1px,#3600ff 454.5px,#9600ff 455.5px,#9600ff 458px,#0000 458px,#0000 490px)}
.c115{background:linear-gradient(#0000 0px,#0000 189px,#9600ff 189px,#9600ff 189.5px,#6e00ff 197.5px,#0200ff 207.5px,#00f 208.2px,#0046ff 219.5px,#0ff 224.7px,#00ffe2 225.5px,#0f0 235.7px,#6aff00 240.5px,#9cff00 256.5px,#a9ff00 257.5px,#ff0 258.8px,#ffd400 259.5px,#ff0 267.9px,#c3ff00 279.5px,#baff00 308.5px,#daff00 314.5px,#ff0 315.2px,#fff100 315.5px,#ff4800 316.5px,#f00 317.5px,#f00 346.5px,#ff6800 347.5px,#ff0 348px,#0f0 348.8px,#0ff 349.6px,#00f 350.4px,#0b00ff 350.5px,#9600ff 351.5px,#7b00ff 352.5px,#8300ff 384.5px,#6f00ff 385.5px,#9600ff 394.5px,#9600ff 441.5px,#6500ff 442.5px,#00f 443.5px,#00a8ff 444.5px,#0ff 444.9px,#0f0 446px,#ff0 447.1px,#ff9f00 447.5px,#f00 448.5px,#f00 450.5px,#ffc900 451.5px,#ff0 451.7px,#03ff00 452.5px,#0f0 452.5px,#0ff 453.6px,#00f 454.6px,#7c00ff 455.5px,#9600ff 458.5px,#9600ff 459px,#0000 459px,#0000 490px)}
.c116{background:linear-gradient(#0000 0px,#0000 189px,#9600ff 189px,#9600ff 189.5px,#8700ff 197.5px,#00f 207.5px,#002eff 209.5px,#0ff 215.3px,#00fff8 215.5px,#0f0 229.7px,#8f0 237.5px,#9cff00 257.5px,#d5ff00 259.5px,#bdff00 276.5px,#e3ff00 292.5px,#ff0 297.7px,#ffc400 308.5px,#ff7e00 312.5px,#ff0 314.3px,#edff00 314.5px,#f9ff00 315.5px,#ff0 315.5px,#f00 317.5px,#f00 347.5px,#ffdc00 348.5px,#ff0 348.6px,#0f0 349.4px,#0ff 350.2px,#00a7ff 350.5px,#00f 350.9px,#9600ff 351.5px,#8f00ff 383.5px,#7400ff 386.5px,#8b00ff 387.5px,#9600ff 394.5px,#9600ff 441.5px,#5a00ff 442.5px,#00f 443.4px,#00baff 444.5px,#0ff 444.8px,#0f0 445.9px,#ff0 447px,#ff8a00 447.5px,#f00 448.5px,#f00 450.5px,#ffe500 451.5px,#ff0 451.6px,#0f0 452.4px,#00ff19 452.5px,#0ff 453.4px,#00f 454.4px,#0c00ff 454.5px,#8900ff 455.5px,#9600ff 458.5px,#9600ff 459px,#0000 459px,#0000 490px)}
.c117{background:linear-gradient(#0000 0px,#0000 189px,#9600ff 189px,#9600ff 189.5px,#7f00ff 197.5px,#0300ff 207.5px,#00f 208.4px,#0054ff 220.5px,#0ff 224.9px,#00ffe8 225.5px,#0f0 236.5px,#95ff00 243.5px,#ff0 273.7px,#fff500 276.5px,#ff7e00 292.5px,#ff1000 299.5px,#ff2100 305.5px,#f00 307.9px,#f00 312.8px,#fd0 314.5px,#ff4d00 315.5px,#f00 316.5px,#f00 347.5px,#ff5d00 348.5px,#ff0 349px,#0f0 349.8px,#0ff 350.7px,#00f 351.5px,#0500ff 351.5px,#9600ff 352.5px,#7e00ff 353.5px,#7800ff 386.5px,#9600ff 394.5px,#9600ff 441.5px,#7200ff 442.5px,#00f 443.6px,#0092ff 444.5px,#0ff 445px,#0f0 446.1px,#ff0 447.2px,#ffb900 447.5px,#f00 448.5px,#f00 450.5px,#ffa700 451.5px,#ff0 451.8px,#0f0 452.7px,#00ffda 453.5px,#0ff 453.7px,#00f 454.7px,#6b00ff 455.5px,#9600ff 456.5px,#9600ff 460px,#0000 460px,#0000 490px)}
.c118{background:linear-gradient(#0000 0px,#0000 189px,#9600ff 189px,#9600ff 189.5px,#8100ff 196.5px,#00f 206.4px,#0002ff 206.5px,#004dff 220.5px,#0ff 225px,#00ffe9 225.5px,#0f0 236.3px,#9aff00 243.5px,#ff0 262.1px,#ffdc00 268.5px,#ff5000 270.5px,#f40 278.5px,#f00 283.4px,#f00 288.1px,#ff2600 291.5px,#f00 299.5px,#ff4700 302.5px,#ff8100 312.5px,#ff0 314px,#d9ff00 314.5px,#fcff00 315.5px,#ff0 315.5px,#f00 317.5px,#f00 326.5px,#ff8000 327.5px,#ff8000 328.5px,#f00 329.5px,#f00 347.5px,#fb0 348.5px,#ff0 348.7px,#0f0 349.5px,#0ff 350.4px,#00f 351.2px,#3c00ff 351.5px,#9600ff 352.5px,#8200ff 353.5px,#7b00ff 385.5px,#9600ff 394.5px,#9600ff 441.5px,#00f 443px,#00f1ff 444.5px,#0ff 444.6px,#0f0 445.6px,#eaff00 446.5px,#ff0 446.7px,#ffc000 447.5px,#ffa600 449.5px,#ffb900 450.5px,#ff0 451px,#b9ff00 451.5px,#0f0 452.2px,#0ff 453.1px,#0094ff 453.5px,#00f 454.1px,#3400ff 454.5px,#9600ff 455.5px,#9600ff 458px,#0000 458px,#0000 490px)}
.c119{background:linear-gradient(#0000 0px,#0000 189px,#9600ff 189px,#9600ff 189.5px,#00f 204.5px,#00f 204.5px,#0040ff 214.5px,#0ff 220px,#00ffec 220.5px,#0f0 232.8px,#94ff00 240.5px,#97ff00 246.5px,#f6ff00 250.5px,#ff0 251.7px,#ffd800 256.5px,#ffbc00 268.5px,#f00 270.4px,#f00 272.2px,#ff4e00 276.5px,#ff3c00 282.5px,#ffa500 289.5px,#ff0 304.4px,#c8ff00 313.5px,#ff0 315.5px,#fffe00 315.5px,#ff5800 316.5px,#f00 317.5px,#f00 326.5px,#ff8000 327.5px,#ff8000 328.5px,#f00 329.5px,#f00 346.5px,#ffb100 347.5px,#ff0 347.8px,#0f0 348.6px,#0ff 349.4px,#00f 350.2px,#3600ff 350.5px,#9600ff 351.5px,#6900ff 352.5px,#6900ff 380.5px,#9600ff 394.5px,#9600ff 440.5px,#6d00ff 441.5px,#00f 442.6px,#009bff 443.5px,#0ff 443.9px,#0f0 445px,#ff0 446.1px,#ffae00 446.5px,#f00 447.5px,#f00 449.5px,#ffb500 450.5px,#ff0 450.8px,#0f0 451.7px,#00ffe8 452.5px,#0ff 452.6px,#00f 453.7px,#7200ff 454.5px,#9600ff 455.5px,#9600ff 458px,#0000 458px,#0000 490px)}
.c120{background:linear-gradient(#0000 0px,#0000 160px,#9600ff 160px,#9600ff 160.5px,#8100ff 191.5px,#0500ff 201.5px,#00f 203.3px,#0048ff 220.5px,#0ff 225.5px,#00ffdb 226.5px,#00ff1c 234.5px,#0f0 235.9px,#83ff00 242.5px,#a6ff00 247.5px,#ff0 249.3px,#ffc000 250.5px,#ffe900 268.5px,#ffb400 270.5px,#ff0 279.8px,#f1ff00 281.5px,#94ff00 312.5px,#faff00 314.5px,#ff0 314.5px,#f00 316.5px,#f00 347.5px,#ff8400 348.5px,#ff0 348.9px,#0f0 349.7px,#0ff 350.5px,#00f 351.3px,#1c00ff 351.5px,#9600ff 352.5px,#6d00ff 353.5px,#7600ff 383.5px,#5200ff 386.5px,#7e00ff 387.5px,#9600ff 394.5px,#9600ff 440.5px,#7800ff 441.5px,#00f 442.7px,#08f 443.5px,#0ff 444px,#0f0 445.2px,#ff0 446.4px,#ffea00 446.5px,#ffa600 447.5px,#ffa600 449.5px,#ffdb00 450.5px,#ff0 450.6px,#0f0 451.7px,#0ff 452.7px,#00f 453.8px,#6400ff 454.5px,#9600ff 455.5px,#9600ff 459px,#0000 459px,#0000 490px)}
.c121{background:linear-gradient(#0000 0px,#0000 152px,#9600ff 152px,#9600ff 152.5px,#80f 192.5px,#0200ff 202.5px,#00f 203.4px,#004cff 220.5px,#0ff 225.5px,#0fd 226.5px,#0f0 235.6px,#15ff00 236.5px,#b2ff00 247.5px,#ff0 249.1px,#ffbe00 250.5px,#ff0 269.6px,#d6ff00 281.5px,#b5ff00 312.5px,#fdff00 314.5px,#ff0 314.5px,#f00 316.5px,#f00 347.5px,#ff6400 348.5px,#ff0 349px,#0f0 349.8px,#0ff 350.6px,#00f 351.5px,#0800ff 351.5px,#9600ff 352.5px,#8000ff 353.5px,#70f 386.5px,#9600ff 394.5px,#9600ff 440.5px,#8b00ff 441.5px,#00f 442.9px,#0068ff 443.5px,#0ff 444.3px,#00ffe2 444.5px,#0f0 445.4px,#ff0 446.4px,#ffe900 446.5px,#ff2400 447.5px,#f00 449.5px,#ff6a00 450.5px,#ff0 451px,#0f0 451.9px,#00ff9d 452.5px,#0ff 452.9px,#00f 454px,#4d00ff 454.5px,#9600ff 455.5px,#9600ff 459px,#0000 459px,#0000 490px)}
.c122{background:linear-gradient(#0000 0px,#0000 146px,#9600ff 146px,#9600ff 146.5px,#7500ff 195.5px,#00f 205.4px,#0001ff 205.5px,#0059ff 221.5px,#0ff 225.7px,#0fd 226.5px,#00ff04 235.5px,#0f0 235.7px,#95ff00 243.5px,#a9ff00 247.5px,#ff0 251.2px,#ffb200 254.5px,#ffcd00 265.5px,#ff7d00 267.5px,#ff0 281.9px,#f1ff00 283.5px,#9cff00 312.5px,#bfff00 314.5px,#ff0 315.3px,#fff200 315.5px,#ff4900 316.5px,#f00 317.5px,#f00 326.5px,#ff8000 327.5px,#ff8000 328.5px,#f00 329.5px,#f00 346.5px,#f40 347.5px,#ff0 348.1px,#0f0 349px,#0ff 349.8px,#00f 350.7px,#9600ff 351.5px,#7300ff 352.5px,#7300ff 380.5px,#9600ff 394.5px,#9600ff 440.5px,#7500ff 441.5px,#00f 442.7px,#008dff 443.5px,#0ff 444px,#0f0 445.2px,#ff0 446.4px,#ffe800 446.5px,#ffa600 447.5px,#ffa600 449.5px,#ffde00 450.5px,#ff0 450.6px,#0f0 451.7px,#0ff 452.7px,#00f 453.8px,#6800ff 454.5px,#9600ff 455.5px,#9600ff 460px,#0000 460px,#0000 490px)}
.c123{background:linear-gradient(#0000 0px,#0000 162px,#9600ff 162px,#9600ff 162.5px,#6f00ff 187.5px,#0200ff 197.5px,#00f 198px,#003dff 207.5px,#0ff 213.3px,#00fff7 213.5px,#0f0 228.1px,#8dff00 236.5px,#9cff00 248.5px,#b4ff00 251.5px,#ff0 253.5px,#ffdb00 254.5px,#ffc300 265.5px,#ff0c00 267.5px,#f00 267.8px,#f00 269.5px,#ff3500 271.5px,#ff0b00 272.5px,#f20 276.5px,#ff5300 277.5px,#ff6a00 282.5px,#ffba00 286.5px,#ff9d00 288.5px,#ff0 305.7px,#deff00 311.5px,#ff0 314.4px,#fffd00 314.5px,#f00 316.5px,#f00 346.5px,#ffc500 347.5px,#ff0 347.7px,#0f0 348.5px,#0ff 349.3px,#00f 350.1px,#4100ff 350.5px,#9600ff 351.5px,#7c00ff 386.5px,#9600ff 394.5px,#9600ff 441.5px,#00f 443.1px,#00eaff 444.5px,#0ff 444.6px,#0f0 445.6px,#e0ff00 446.5px,#ff0 446.7px,#ff5300 447.5px,#f00 448.5px,#f00 449.5px,#ff2e00 450.5px,#ff0 451.3px,#0f0 452.2px,#0ff 453.1px,#009eff 453.5px,#00f 454.2px,#2f00ff 454.5px,#9600ff 455.5px,#9600ff 459px,#0000 459px,#0000 490px)}
.c124{background:linear-gradient(#0000 0px,#0000 186px,#9600ff 186px,#9600ff 186.5px,#8000ff 194.5px,#0200ff 204.5px,#00f 205.2px,#0050ff 221.5px,#0ff 226.9px,#00ff6a 231.5px,#0f0 236.5px,#94ff00 243.5px,#ff0 263.5px,#fff400 265.5px,#ff9d00 267.5px,#ff8f00 271.5px,#ff3400 276.5px,#ff0900 284.5px,#ff4900 286.5px,#ff1400 287.5px,#ff0600 291.5px,#ff3600 293.5px,#ff0a00 297.5px,#ff5200 301.5px,#ff2300 303.5px,#ff5f00 307.5px,#ff5800 312.5px,#ff0 314.2px,#dcff00 314.5px,#ff0 315.2px,#ffed00 315.5px,#ff4700 316.5px,#f00 317.5px,#f00 347.5px,#ffc500 348.5px,#ff0 348.7px,#0f0 349.5px,#0ff 350.3px,#00f 351.1px,#4200ff 351.5px,#9600ff 352.5px,#8000ff 353.5px,#7500ff 386.5px,#9600ff 394.5px,#9600ff 439.5px,#80f 440.5px,#00f 441.9px,#006dff 442.5px,#0ff 443.3px,#00ffdb 443.5px,#0f0 444.4px,#ff0 445.4px,#ffe300 445.5px,#ff1f00 446.5px,#f00 448.5px,#ff7100 449.5px,#ff0 450px,#0f0 450.9px,#00ffa4 451.5px,#0ff 451.9px,#00f 452.9px,#5000ff 453.5px,#9600ff 454.5px,#9600ff 458px,#0000 458px,#0000 490px)}
.c125{background:linear-gradient(#0000 0px,#0000 186px,#9600ff 186px,#9600ff 186.5px,#00f 199.4px,#0001ff 199.5px,#005fff 222.5px,#0ff 226.7px,#00ffbc 228.5px,#0f0 236.8px,#97ff00 243.5px,#edff00 271.5px,#ff0 273.3px,#ff6300 289.5px,#ff4900 301.5px,#ff0100 305.5px,#ff3400 308.5px,#f00 311.5px,#f00 312.6px,#ff9500 313.5px,#fe0 314.5px,#f00 316.5px,#f00 326.5px,#ff8000 327.5px,#ff8000 328.5px,#f00 329.5px,#f00 347.5px,#ffb400 348.5px,#ff0 348.7px,#0f0 349.6px,#0ff 350.4px,#00f 351.2px,#3700ff 351.5px,#9600ff 352.5px,#6800ff 353.5px,#6800ff 380.5px,#9600ff 394.5px,#9600ff 441.5px,#00f 443px,#00f9ff 444.5px,#0ff 444.5px,#0f0 445.5px,#f6ff00 446.5px,#ff0 446.5px,#ff4200 447.5px,#f00 448.5px,#f00 449.5px,#ff4300 450.5px,#ff0 451.2px,#0f0 452.1px,#0ff 453.1px,#0089ff 453.5px,#00f 454.1px,#3a00ff 454.5px,#9600ff 455.5px,#9600ff 459px,#0000 459px,#0000 490px)}
.c126{background:linear-gradient(#0000 0px,#0000 172px,#9600ff 172px,#9600ff 172.5px,#7000ff 195.5px,#00f 206.4px,#0002ff 206.5px,#0054ff 222.5px,#0ff 227.2px,#00ffa9 229.5px,#0f0 236.9px,#98ff00 243.5px,#d0ff00 252.5px,#a0ff00 269.5px,#cdff00 272.5px,#fdff00 291.5px,#ff0 299.7px,#fffd00 308.5px,#ffd600 312.5px,#fff700 313.5px,#ffde00 314.5px,#ff3f00 315.5px,#f00 316.5px,#f00 326.5px,#ff8000 327.5px,#ff8000 328.5px,#f00 329.5px,#f00 346.5px,#ff6d00 347.5px,#ff0 348px,#0f0 348.8px,#0ff 349.6px,#00f 350.4px,#0e00ff 350.5px,#9600ff 351.5px,#6900ff 352.5px,#6c00ff 387.5px,#9600ff 394.5px,#9600ff 439.5px,#70f 440.5px,#00f 441.7px,#008bff 442.5px,#0ff 443px,#0f0 444.2px,#ff0 445.4px,#ffe900 445.5px,#ffa600 446.5px,#ffa600 448.5px,#fd0 449.5px,#ff0 449.6px,#0f0 450.7px,#0ff 451.7px,#00f 452.8px,#60f 453.5px,#9600ff 454.5px,#9600ff 459px,#0000 459px,#0000 490px)}
.c127{background:linear-gradient(#0000 0px,#0000 168px,#9600ff 168px,#9600ff 168.5px,#8400ff 194.5px,#00f 205.4px,#0003ff 205.5px,#0054ff 222.5px,#0ff 227.1px,#00ffca 228.5px,#0f0 235.9px,#2dff00 237.5px,#ff0 251.9px,#fff700 252.5px,#ff0 254px,#c3ff00 265.5px,#d8ff00 312.5px,#ff0 314.4px,#fffd00 314.5px,#f00 316.5px,#f00 326.5px,#ff8000 327.5px,#ff8000 328.5px,#f00 329.5px,#f00 347.5px,#ff7800 348.5px,#ff0 348.9px,#0f0 349.8px,#0ff 350.6px,#00f 351.4px,#1400ff 351.5px,#9600ff 352.5px,#7200ff 353.5px,#7c00ff 384.5px,#5600ff 386.5px,#8700ff 388.5px,#9600ff 394.5px,#9600ff 440.5px,#6700ff 441.5px,#00f 442.5px,#00a4ff 443.5px,#0ff 443.9px,#0f0 445px,#7f0 445.5px,#ff0 446.3px,#ffdf00 446.5px,#ffa600 447.5px,#ffa600 449.5px,#ffea00 450.5px,#ff0 450.6px,#0f0 451.6px,#0ff 452.5px,#0009ff 453.5px,#00f 453.5px,#7900ff 454.5px,#9600ff 455.5px,#9600ff 459px,#0000 459px,#0000 490px)}
.c128{background:linear-gradient(#0000 0px,#0000 162px,#9600ff 162px,#9600ff 162.5px,#8200ff 190.5px,#0100ff 200.5px,#00f 201px,#005fff 223.5px,#0ff 227.4px,#00ffd3 228.5px,#0f0 235.9px,#2fff00 237.5px,#9bff00 243.5px,#aeff00 248.5px,#ff0 250.6px,#ffb800 252.5px,#ff0 260.9px,#c7ff00 267.5px,#d6ff00 299.5px,#a3ff00 312.5px,#e1ff00 314.5px,#ff0 314.7px,#f00 316.5px,#f00 346.5px,#ff6700 347.5px,#ff0 348px,#0f0 348.8px,#0ff 349.6px,#00f 350.4px,#0a00ff 350.5px,#9600ff 351.5px,#8e00ff 381.5px,#5b00ff 386.5px,#9300ff 390.5px,#9600ff 440.5px,#7500ff 441.5px,#00f 442.7px,#008dff 443.5px,#0ff 444px,#0f0 445.2px,#ff0 446.4px,#ffe800 446.5px,#ffa600 447.5px,#ffa600 449.5px,#ffde00 450.5px,#ff0 450.6px,#0f0 451.7px,#0ff 452.7px,#00f 453.8px,#6800ff 454.5px,#9600ff 455.5px,#9600ff 458px,#0000 458px,#0000 490px)}
.c129{background:linear-gradient(#0000 0px,#0000 158px,#9600ff 158px,#9600ff 158.5px,#7a00ff 187.5px,#00f 197.5px,#00f 197.5px,#005aff 223.5px,#0ff 228.4px,#0f0 236.1px,#30ff00 237.5px,#9cff00 243.5px,#afff00 248.5px,#ff0 250.3px,#f90 252.5px,#ff0 263.9px,#dfff00 267.5px,#ff0 301.5px,#fff900 307.5px,#ff0 308px,#c2ff00 313.5px,#ff0 314.7px,#ffda00 315.5px,#ff3100 316.5px,#f00 317.5px,#f00 326.5px,#ff8000 327.5px,#ff8000 328.5px,#f00 329.5px,#f00 347.5px,#ff7d00 348.5px,#ff0 348.9px,#0f0 349.7px,#0ff 350.6px,#00f 351.4px,#1800ff 351.5px,#9600ff 352.5px,#6800ff 353.5px,#6c00ff 386.5px,#9600ff 394.5px,#9600ff 439.5px,#7400ff 440.5px,#00f 441.7px,#008fff 442.5px,#0ff 443.1px,#00ffa8 443.5px,#0f0 444.2px,#ff0 445.2px,#ffbc00 445.5px,#f00 446.5px,#f00 448.5px,#ffa400 449.5px,#ff0 449.8px,#0f0 450.7px,#00ffd7 451.5px,#0ff 451.7px,#00f 452.7px,#6900ff 453.5px,#9600ff 454.5px,#9600ff 458px,#0000 458px,#0000 490px)}
.c130{background:linear-gradient(#0000 0px,#0000 158px,#9600ff 158px,#9600ff 158.5px,#7c00ff 189.5px,#00f 199.5px,#00f 199.6px,#05f 223.5px,#0ff 228.6px,#0f0 236.4px,#47ff00 238.5px,#9eff00 243.5px,#b9ff00 249.5px,#ff0 250.7px,#ffd400 251.5px,#ff9e00 255.5px,#ffd900 270.5px,#ff6700 308.5px,#ff0 312.6px,#dcff00 313.5px,#ff0 313.9px,#ffcb00 314.5px,#ff2300 315.5px,#f00 316.5px,#f00 347.5px,#ffab00 348.5px,#ff0 348.8px,#0f0 349.6px,#0ff 350.4px,#00f 351.2px,#3200ff 351.5px,#9600ff 352.5px,#8200ff 353.5px,#8700ff 383.5px,#6f00ff 385.5px,#9600ff 394.5px,#9600ff 440.5px,#00f 442.1px,#00edff 443.5px,#0ff 443.6px,#0f0 444.6px,#e4ff00 445.5px,#ff0 445.6px,#ff5000 446.5px,#f00 447.5px,#f00 448.5px,#ff3200 449.5px,#ff0 450.3px,#0f0 451.2px,#0ff 452.1px,#009aff 452.5px,#00f 453.1px,#3100ff 453.5px,#9600ff 454.5px,#9600ff 458px,#0000 458px,#0000 490px)}
.c131{background:linear-gradient(#0000 0px,#0000 147px,#9600ff 147px,#9600ff 147.5px,#7e00ff 181.5px,#0200ff 191.5px,#00f 192.7px,#0042ff 214.5px,#0ff 220.1px,#00fff0 220.5px,#0f0 231.2px,#8fff00 237.5px,#abff00 248.5px,#ff0 252.2px,#ffe000 253.5px,#ffa200 260.5px,#ff0e00 265.5px,#ff1500 281.5px,#f00 288.2px,#f00 309.1px,#ff8700 310.5px,#ff0 312.9px,#e0ff00 313.5px,#f5ff00 314.5px,#ff0 314.6px,#f00 316.5px,#f00 326.5px,#ff8000 327.5px,#ff8000 328.5px,#f00 329.5px,#f00 346.5px,#ff3500 347.5px,#ff0 348.2px,#0f0 349px,#0ff 349.8px,#00f 350.7px,#9600ff 351.5px,#60f 352.5px,#6200ff 385.5px,#9600ff 394.5px,#9600ff 440.5px,#8b00ff 441.5px,#00f 442.9px,#0067ff 443.5px,#0ff 444.3px,#00ffe4 444.5px,#0f0 445.4px,#ff0 446.5px,#fff800 446.5px,#ffb300 447.5px,#ffa600 449.5px,#ffca00 450.5px,#ff0 450.8px,#7dff00 451.5px,#0f0 452px,#0ff 453px,#00f 454px,#4c00ff 454.5px,#9600ff 455.5px,#9600ff 459px,#0000 459px,#0000 490px)}
.c132{background:linear-gradient(#0000 0px,#0000 147px,#9600ff 147px,#9600ff 147.5px,#8100ff 188.5px,#0300ff 198.5px,#00f 199.8px,#0057ff 223.5px,#0ff 228.2px,#0f0 235.4px,#b4ff00 240.5px,#f6ff00 244.5px,#ff0 246.1px,#ffb400 259.5px,#ff9a00 260.5px,#f00 262.2px,#f00 308.6px,#ffa900 310.5px,#ff0 313px,#edff00 313.5px,#ff0 314px,#ffca00 315.5px,#ff2100 316.5px,#f00 317.5px,#f00 326.5px,#ff8000 327.5px,#ff8000 328.5px,#f00 329.5px,#f00 346.5px,#ff3700 347.5px,#ff0 348.2px,#0f0 349px,#0ff 349.8px,#00f 350.7px,#9600ff 351.5px,#7d00ff 352.5px,#7500ff 385.5px,#9600ff 394.5px,#9600ff 439.5px,#6f00ff 440.5px,#00f 441.6px,#0098ff 442.5px,#0ff 442.9px,#0f0 444.1px,#ff0 445.2px,#ffb200 445.5px,#f00 446.5px,#f00 448.5px,#ffb100 449.5px,#ff0 449.8px,#0f0 450.7px,#00ffe4 451.5px,#0ff 451.6px,#00f 452.7px,#7000ff 453.5px,#9600ff 454.5px,#9600ff 460px,#0000 460px,#0000 490px)}
.c133{background:linear-gradient(#0000 0px,#0000 158px,#9600ff 158px,#9600ff 158.5px,#7200ff 186.5px,#00f 197.4px,#0001ff 197.5px,#0053ff 223.5px,#0ff 227.9px,#00ff98 230.5px,#0f0 233.6px,#ff0 238.9px,#ffb200 240.5px,#ff5200 243.5px,#ff1d00 251.5px,#ff8600 259.5px,#ff7c00 260.5px,#f00 262.2px,#f00 283px,#ff6400 284.5px,#ff7d00 286.5px,#ffbf00 308.5px,#ff0 311.3px,#e3ff00 312.5px,#ff0 314.4px,#fffe00 314.5px,#f00 316.5px,#f00 347.5px,#ffe200 348.5px,#ff0 348.6px,#0f0 349.4px,#0ff 350.2px,#00a1ff 350.5px,#00f 350.9px,#9600ff 351.5px,#8000ff 387.5px,#9600ff 390.5px,#9600ff 440.5px,#8000ff 441.5px,#00f 442.8px,#007bff 443.5px,#0ff 444.1px,#0f0 445.3px,#ff0 446.4px,#fff000 446.5px,#ffab00 447.5px,#ffa600 449.5px,#ffd400 450.5px,#ff0 450.7px,#59ff00 451.5px,#0f0 451.9px,#0ff 452.9px,#00f 453.9px,#5a00ff 454.5px,#9600ff 455.5px,#9600ff 460px,#0000 460px,#0000 490px)}
.c134{background:linear-gradient(#0000 0px,#0000 162px,#9600ff 162px,#9600ff 162.5px,#7600ff 189.5px,#00f 200.4px,#0002ff 200.5px,#0056ff 223.5px,#0ff 227.3px,#00ff15 232.5px,#0f0 232.8px,#e2ff00 236.5px,#ff0 236.9px,#f00 240.1px,#f00 251.4px,#ff0c00 251.5px,#f00 251.7px,#f00 259px,#ff5800 260.5px,#ff6300 261.5px,#ff5e00 273.5px,#ff0100 282.5px,#ffe200 284.5px,#fffc00 285.5px,#ff0 286.5px,#b2ff00 312.5px,#ff0 315.4px,#fffd00 315.5px,#ff5300 316.5px,#f00 317.5px,#f00 347.5px,#ffb600 348.5px,#ff0 348.7px,#0f0 349.6px,#0ff 350.4px,#00f 351.2px,#3900ff 351.5px,#9600ff 352.5px,#9000ff 381.5px,#7800ff 385.5px,#9400ff 390.5px,#9600ff 440.5px,#5e00ff 441.5px,#00f 442.4px,#00b4ff 443.5px,#0ff 443.8px,#0f0 444.9px,#ff0 446px,#ff9100 446.5px,#f00 447.5px,#f00 449.5px,#ffdb00 450.5px,#ff0 450.6px,#0f0 451.4px,#00ff0f 451.5px,#0ff 452.4px,#00f 453.4px,#0800ff 453.5px,#8500ff 454.5px,#9600ff 457.5px,#9600ff 458px,#0000 458px,#0000 490px)}
.c135{background:linear-gradient(#0000 0px,#0000 170px,#9600ff 170px,#9600ff 170.5px,#7d00ff 196.5px,#00f 206.5px,#00f 206.6px,#0050ff 223.5px,#0ff 227.1px,#00ff2e 231.5px,#0f0 232.1px,#ff0 235.2px,#f00 238.3px,#f00 261.1px,#ff8b00 263.5px,#ffcd00 265.5px,#ff0 268.2px,#e7ff00 269.5px,#ff0 273.4px,#ffc700 282.5px,#ff0 283.8px,#b4ff00 285.5px,#8f0 312.5px,#e3ff00 314.5px,#ff0 314.7px,#f00 316.5px,#f00 346.5px,#ff3c00 347.5px,#ff0 348.1px,#0f0 349px,#0ff 349.8px,#00f 350.7px,#9600ff 351.5px,#8f00ff 382.5px,#5800ff 385.5px,#9400ff 390.5px,#9600ff 439.5px,#8b00ff 440.5px,#00f 441.9px,#0068ff 442.5px,#0ff 443.3px,#00ffe2 443.5px,#0f0 444.4px,#ff0 445.4px,#ffe900 445.5px,#ff2500 446.5px,#f00 448.5px,#ff6900 449.5px,#ff0 450px,#0f0 450.9px,#00ff9c 451.5px,#0ff 451.9px,#00f 453px,#4d00ff 453.5px,#9600ff 454.5px,#9600ff 459px,#0000 459px,#0000 490px)}
.c136{background:linear-gradient(#0000 0px,#0000 175px,#9600ff 175px,#9600ff 175.5px,#80f 194.5px,#0500ff 204.5px,#00f 206.1px,#0058ff 223.5px,#0ff 227.1px,#00ff62 230.5px,#0f0 231.9px,#6dff00 233.5px,#ff0 235.1px,#f00 238px,#f00 261.2px,#ff6e00 262.5px,#ff7800 263.5px,#ffed00 265.5px,#ff0 267.2px,#c7ff00 272.5px,#a4ff00 312.5px,#ff0 315.4px,#fffd00 315.5px,#ff5300 316.5px,#f00 317.5px,#ff0d00 347.5px,#ff0 348.3px,#0f0 349.1px,#0ff 349.9px,#00f 350.7px,#9600ff 351.5px,#6a00ff 352.5px,#7400ff 383.5px,#50f 386.5px,#8600ff 389.5px,#9600ff 394.5px,#9600ff 440.5px,#5400ff 441.5px,#00f 442.3px,#00c5ff 443.5px,#0ff 443.7px,#0f0 444.8px,#a7ff00 445.5px,#ff0 446.2px,#ffd200 446.5px,#ffa600 449.5px,#fffb00 450.5px,#ff0 450.5px,#0f0 451.4px,#0ff 452.4px,#00d7ff 452.5px,#00f 453.4px,#9100ff 454.5px,#9600ff 458.5px,#9600ff 459px,#0000 459px,#0000 490px)}
.c137{background:linear-gradient(#0000 0px,#0000 179px,#9600ff 179px,#9600ff 179.5px,#7900ff 199.5px,#00f 209.4px,#0002ff 209.5px,#005fff 223.5px,#0ff 227px,#00ff31 231.5px,#0f0 232.2px,#ff0 235.8px,#ff8b00 237.5px,#ff0600 238.5px,#f00 239.4px,#f00 243.2px,#ff0b00 243.5px,#f00 243.9px,#f00 247.2px,#ff2000 247.5px,#f00 248px,#f00 249px,#ff1900 249.5px,#ff0c00 251.5px,#f00 251.7px,#f00 253.2px,#ff1400 253.5px,#f00 254.6px,#f00 255.9px,#ff1400 256.5px,#f00 257.1px,#f00 260px,#ff6a00 261.5px,#ff6400 262.5px,#ffea00 265.5px,#ff0 267.5px,#c1ff00 273.5px,#c6ff00 311.5px,#ff0 313.6px,#ffe700 314.5px,#ff3d00 315.5px,#f00 316.5px,#f00 346.5px,#ffb400 347.5px,#ff0 347.7px,#0f0 348.6px,#0ff 349.4px,#00f 350.2px,#3800ff 350.5px,#9600ff 351.5px,#9300ff 381.5px,#5e00ff 386.5px,#8400ff 387.5px,#9500ff 390.5px,#9600ff 439.5px,#6800ff 440.5px,#00f 441.5px,#00a4ff 442.5px,#0ff 442.9px,#0f0 444px,#ff0 445.1px,#ffa400 445.5px,#f00 446.5px,#f00 448.5px,#ffc300 449.5px,#ff0 449.7px,#0cff00 450.5px,#0f0 450.5px,#0ff 451.6px,#00f 452.7px,#7800ff 453.5px,#9600ff 454.5px,#9600ff 459px,#0000 459px,#0000 490px)}
.c138{background:linear-gradient(#0000 0px,#0000 183px,#9600ff 183px,#9600ff 183.5px,#8a00ff 199.5px,#00f 209.5px,#00f 209.5px,#004cff 222.5px,#0ff 226.7px,#00ff32 231.5px,#0f0 232.3px,#ff0 236.1px,#f00 240px,#f00 259.4px,#ffa800 262.5px,#ff0 265.1px,#f1ff00 265.5px,#b5ff00 269.5px,#71ff00 311.5px,#76ff00 312.5px,#ebff00 314.5px,#ff0 314.6px,#f00 316.5px,#f00 346.5px,#ff4000 347.5px,#ff0 348.1px,#0f0 349px,#0ff 349.8px,#00f 350.7px,#9600ff 351.5px,#9000ff 381.5px,#6100ff 385.5px,#7800ff 386.5px,#6200ff 387.5px,#9400ff 390.5px,#9600ff 439.5px,#7a00ff 440.5px,#00f 441.7px,#0085ff 442.5px,#0ff 443.1px,#0f0 444.2px,#ff0 445.4px,#ffec00 445.5px,#ffa700 446.5px,#ffa600 448.5px,#ffda00 449.5px,#ff0 449.7px,#0f0 450.7px,#0ff 451.8px,#00f 452.8px,#6200ff 453.5px,#9600ff 454.5px,#9600ff 459px,#0000 459px,#0000 490px)}
.c139{background:linear-gradient(#0000 0px,#0000 186px,#9600ff 186px,#9600ff 186.5px,#7200ff 203.5px,#0400ff 213.5px,#00f 214.2px,#004bff 222.5px,#0ff 226.8px,#00ff12 232.5px,#0f0 232.6px,#ff0 234.4px,#fff600 234.5px,#ff0 234.6px,#b4ff00 235.5px,#ff0 236.1px,#ffd100 236.5px,#ff0 237.5px,#feff00 237.5px,#ff0 237.5px,#ffae00 238.5px,#ff2d00 246.5px,#ff2a00 252.5px,#ffcd00 261.5px,#ffb000 262.5px,#ffef00 263.5px,#ffc000 264.5px,#ff0 265.4px,#f6ff00 265.5px,#ff0 265.6px,#ffc800 266.5px,#ff0 267.2px,#e8ff00 267.5px,#ff0 267.8px,#ffcd00 268.5px,#ff0 269.1px,#e1ff00 269.5px,#ff0 269.9px,#ffd200 270.5px,#ff0 271.1px,#deff00 271.5px,#ff0 271.9px,#ffd000 272.5px,#ff0 273.1px,#deff00 273.5px,#ff0 273.9px,#ffd100 274.5px,#ff0 275.1px,#deff00 275.5px,#ff0 275.9px,#ffd300 276.5px,#ff0 277.1px,#df0 277.5px,#ff0 277.9px,#ffd000 278.5px,#ff0 279.1px,#deff00 279.5px,#ff0 279.9px,#ffd000 280.5px,#ff0 281.1px,#deff00 281.5px,#ff0 281.9px,#ffd000 282.5px,#ff0 283.1px,#deff00 283.5px,#ff0 283.9px,#ffd300 284.5px,#ff0 285.1px,#deff00 285.5px,#ff0 285.9px,#ffd000 286.5px,#ff0 287.1px,#deff00 287.5px,#ff0 287.9px,#ffd000 288.5px,#ff0 289.1px,#df0 289.5px,#ff0 289.9px,#ffd100 290.5px,#ff0 291.1px,#df0 291.5px,#ff0 291.9px,#ffd100 292.5px,#ff0 293.1px,#dbff00 293.5px,#ff0 293.9px,#ffd100 294.5px,#ff0 295.1px,#dbff00 295.5px,#ff0 296px,#ffd300 296.5px,#ff0 297px,#daff00 297.5px,#ff0 298px,#ffd500 298.5px,#ff0 299px,#d9ff00 299.5px,#ff0 300px,#ffd300 300.5px,#ff0 301px,#d8ff00 301.5px,#ff0 302px,#ffd300 302.5px,#ff0 303px,#d8ff00 303.5px,#ff0 304px,#ffd600 304.5px,#ff0 305px,#d7ff00 305.5px,#ff0 306px,#ffd400 306.5px,#ff0 307px,#d6ff00 307.5px,#ff0 308px,#ffd400 308.5px,#ff0 309px,#d6ff00 309.5px,#ff0 310px,#ffd400 310.5px,#ff0 311px,#d6ff00 311.5px,#ff0 312px,#ffd400 312.5px,#ff0 313.8px,#e6ff00 314.5px,#ff0 315.2px,#fff400 315.5px,#ff4a00 316.5px,#f00 317.5px,#f00 346.5px,#ff7b00 347.5px,#ff0 347.9px,#0f0 348.7px,#0ff 349.6px,#00f 350.4px,#1600ff 350.5px,#9600ff 351.5px,#8100ff 352.5px,#8400ff 382.5px,#5800ff 386.5px,#8d00ff 389.5px,#9600ff 394.5px,#9600ff 439.5px,#7900ff 440.5px,#00f 441.7px,#0086ff 442.5px,#0ff 443px,#0f0 444.2px,#ff0 445.4px,#ff0300 446.5px,#f00 448.5px,#ff9500 449.5px,#ff0 449.9px,#0f0 450.8px,#00ffc8 451.5px,#0ff 451.7px,#00f 452.8px,#6200ff 453.5px,#9600ff 454.5px,#9600ff 459px,#0000 459px,#0000 490px)}
.c140{background:linear-gradient(#0000 0px,#0000 192px,#9600ff 192px,#9600ff 192.5px,#8100ff 202.5px,#00f 213.2px,#0005ff 213.5px,#004bff 222.5px,#0ff 227.1px,#00ff2e 232.5px,#0f0 232.8px,#73ff00 233.5px,#ff0 234.1px,#fa0 234.5px,#ff0 235px,#9f0 235.5px,#ff0 236px,#ffab00 236.5px,#ff0 237px,#b0ff00 237.5px,#ff0 238px,#ffa400 238.5px,#ff0 239.2px,#cfff00 239.5px,#ff0 239.8px,#ff9800 240.5px,#ff0 241.2px,#dcff00 241.5px,#ff0 241.7px,#ff9500 242.5px,#ff0 243.3px,#deff00 243.5px,#ff0 243.7px,#ff9400 244.5px,#ff0 245.3px,#e0ff00 245.5px,#ff0 245.7px,#ff9400 246.5px,#ff0 247.3px,#e3ff00 247.5px,#ff0 247.7px,#ff9400 248.5px,#ff0 249.3px,#e4ff00 249.5px,#ff0 249.7px,#ff9400 250.5px,#ff0 251.3px,#e7ff00 251.5px,#ff0 251.7px,#ff9300 252.5px,#ff0 253.3px,#e9ff00 253.5px,#ff0 253.7px,#ff9700 254.5px,#ff0 255.3px,#ebff00 255.5px,#ff0 255.7px,#ff9300 256.5px,#ff0 257.4px,#ecff00 257.5px,#ff0 257.6px,#ff9300 258.5px,#ff0 259.3px,#eaff00 259.5px,#ff0 259.7px,#ff9b00 260.5px,#ff0 261.4px,#efff00 261.5px,#ff0 261.6px,#f90 262.5px,#ff0 263.4px,#f0ff00 263.5px,#ff0 263.6px,#ff9200 264.5px,#ff0 265.4px,#f1ff00 265.5px,#ff0 265.6px,#ff9400 266.5px,#ff0 267.4px,#f1ff00 267.5px,#ff0 267.6px,#ff9200 268.5px,#ff0 269.4px,#f3ff00 269.5px,#ff0 269.6px,#ff9200 270.5px,#ff0 271.4px,#f3ff00 271.5px,#ff0 271.6px,#ff9800 272.5px,#ff0 273.4px,#f5ff00 273.5px,#ff0 273.6px,#ff9200 274.5px,#ff0 275.4px,#f6ff00 275.5px,#ff0 275.6px,#ff9100 276.5px,#ff0 277.4px,#f6ff00 277.5px,#ff0 277.6px,#ff9100 278.5px,#ff0 279.4px,#f6ff00 279.5px,#ff0 279.6px,#ff9700 280.5px,#ff0 281.4px,#f7ff00 281.5px,#ff0 281.6px,#ff9400 282.5px,#ff0 283.4px,#f4ff00 283.5px,#ff0 283.6px,#ff9100 284.5px,#ff0 285.4px,#f7ff00 285.5px,#ff0 285.6px,#ff9100 286.5px,#ff0 287.4px,#f7ff00 287.5px,#ff0 287.6px,#ff9100 288.5px,#ff0 289.4px,#f8ff00 289.5px,#ff0 289.6px,#ff9200 290.5px,#ff0 291.4px,#f8ff00 291.5px,#ff0 291.6px,#ff9100 292.5px,#ff0 293.4px,#f6ff00 293.5px,#ff0 293.6px,#ff9100 294.5px,#ff0 295.4px,#f8ff00 295.5px,#ff0 295.6px,#f90 296.5px,#ff0 297.4px,#f5ff00 297.5px,#ff0 297.6px,#ff9a00 298.5px,#ff0 299.4px,#f5ff00 299.5px,#ff0 299.6px,#ff9300 300.5px,#ff0 301.4px,#f8ff00 301.5px,#ff0 301.6px,#ff9300 302.5px,#ff0 303.4px,#f9ff00 303.5px,#ff0 303.6px,#ff9100 304.5px,#ff0 305.4px,#f7ff00 305.5px,#ff0 305.6px,#ff9300 306.5px,#ff0 307.5px,#faff00 307.5px,#ff0 307.5px,#ff9100 308.5px,#ff0 309.5px,#fbff00 309.5px,#ff0 309.5px,#ff9100 310.5px,#ff0 311.4px,#f8ff00 311.5px,#ff0 311.6px,#ff9100 312.5px,#ff0 313.5px,#faff00 313.5px,#f7ff00 314.5px,#ff0 315.5px,#ff0 315.5px,#ff5b00 316.5px,#f00 317.5px,#f00 347.5px,#ff0 348.5px,#f3ff00 348.5px,#0f0 349.3px,#0ff 350.1px,#0074ff 350.5px,#00f 350.8px,#9600ff 351.5px,#7b00ff 352.5px,#7400ff 385.5px,#9600ff 394.5px,#9600ff 440.5px,#4f00ff 441.5px,#00f 442.3px,#00cdff 443.5px,#0ff 443.7px,#0f0 444.8px,#b4ff00 445.5px,#ff0 446.1px,#ffcf00 446.5px,#ffa600 448.5px,#ffa600 449.5px,#ff0 450.5px,#fdff00 450.5px,#0f0 451.4px,#0ff 452.3px,#00cbff 452.5px,#00f 453.4px,#9600ff 454.5px,#9600ff 459px,#0000 459px,#0000 490px)}
.c141{background:linear-gradient(#0000 0px,#0000 194px,#3c00ff 194px,#3c00ff 194.5px,#0800ff 202.5px,#0800ff 308.5px,#00f 308.6px,#0ff 310.5px,#0f0 311.2px,#5f0 311.5px,#ff0 312.2px,#fa0 312.5px,#f00 313.5px,#f00 320.5px,#ff0 321.2px,#af0 321.5px,#0f0 321.9px,#0ff 322.5px,#00f 323px,#9600ff 323.5px,#8c00ff 381.5px,#7a00ff 385.5px,#5d00ff 386.5px,#9300ff 390.5px,#9600ff 438.5px,#8600ff 439.5px,#00f 440.8px,#0071ff 441.5px,#0ff 442.3px,#00ffd6 442.5px,#0f0 443.4px,#ff0 444.4px,#ffdf00 444.5px,#ff1b00 445.5px,#f00 447.5px,#ff7600 448.5px,#ff0 449px,#0f0 449.9px,#00ffa9 450.5px,#0ff 450.9px,#00f 451.9px,#5300ff 452.5px,#9600ff 453.5px,#9600ff 460px,#0000 460px,#0000 490px)}
.c142{background:linear-gradient(#0000 0px,#0000 306px,#9600ff 306px,#9600ff 309.5px,#00f 310px,#0ff 310.5px,#0f0 311.1px,#af0 311.5px,#ff0 311.8px,#f00 312.5px,#f00 320.5px,#ff0 321.2px,#af0 321.5px,#0f0 321.9px,#0ff 322.5px,#00f 323px,#9600ff 323.5px,#8b00ff 383.5px,#7300ff 386.5px,#9600ff 394.5px,#9600ff 435.5px,#80f 436.5px,#00f 437.9px,#0ff 439.4px,#0f0 440.9px,#ff0 442.4px,#ff3e00 443.5px,#f00 444.5px,#f00 447.5px,#ff6f00 448.5px,#ff0 449px,#0f0 450px,#0ff 450.9px,#005dff 451.5px,#00f 451.9px,#5000ff 452.5px,#9600ff 453.5px,#9600ff 461px,#0000 461px,#0000 490px)}
.c143{background:linear-gradient(#0000 0px,#0000 301px,#0080ff 301px,#0080ff 301.5px,#00f 302.5px,#4b00ff 303.5px,#9600ff 305.5px,#9600ff 309.5px,#00f 310px,#0ff 310.5px,#0f0 311px,#ff0 311.5px,#f00 312.5px,#f00 318.5px,#ff0 319px,#0f0 319.5px,#0ff 319.8px,#00f 320.2px,#9600ff 320.5px,#7f00ff 321.5px,#7100ff 385.5px,#9600ff 394.5px,#9600ff 431.5px,#6800ff 432.5px,#0400ff 433.5px,#00f 433.5px,#00f4ff 434.5px,#0ff 434.6px,#0f0 435.9px,#ff0 437.2px,#ff0800 438.5px,#f00 447.5px,#ff4100 448.5px,#ff0 449.2px,#0f0 450.1px,#0ff 451.1px,#008bff 451.5px,#00f 452.1px,#3900ff 452.5px,#9600ff 453.5px,#9600ff 461px,#0000 461px,#0000 490px)}
.c144{background:linear-gradient(#0000 0px,#0000 305px,#9600ff 305px,#9600ff 309.5px,#00f 310px,#0ff 310.5px,#0f0 311.1px,#af0 311.5px,#ff0 311.8px,#f00 312.5px,#f00 320.5px,#fa0 321.5px,#ff0 321.8px,#0f0 322.5px,#0ff 322.8px,#00f 323.2px,#9600ff 323.5px,#6f00ff 324.5px,#70f 383.5px,#5900ff 385.5px,#7f00ff 387.5px,#9600ff 394.5px,#9600ff 435.5px,#00f 437px,#0ff 438.5px,#0f0 440px,#ff0 441.6px,#ff6200 442.5px,#f00 443.5px,#f00 446.5px,#ff3900 447.5px,#ff0 448.2px,#0f0 449.2px,#0ff 450.1px,#0093ff 450.5px,#00f 451.1px,#3500ff 451.5px,#9600ff 452.5px,#9600ff 460px,#0000 460px,#0000 490px)}
.c145{background:linear-gradient(#0000 0px,#0000 246px,#9600ff 246px,#9600ff 310.5px,#00f 310.8px,#0ff 311px,#0f0 311.3px,#cf0 311.5px,#ff0 311.7px,#f00 312.5px,#f00 322.5px,#ff9f00 323.5px,#ff0 323.7px,#0f0 324.2px,#00ff8e 324.5px,#0ff 324.7px,#00f 325.1px,#9600ff 325.5px,#7400ff 327.5px,#9600ff 438.5px,#4d00ff 439.5px,#00f 440.3px,#00d0ff 441.5px,#0ff 441.7px,#0f0 442.7px,#b9ff00 443.5px,#ff0 444.1px,#ffcd00 444.5px,#ffa600 445.5px,#ffa800 447.5px,#ff0 448.4px,#f7ff00 448.5px,#0f0 449.4px,#0ff 450.3px,#00c5ff 450.5px,#00f 451.4px,#9600ff 452.5px,#9600ff 459px,#0000 459px,#0000 490px)}
.c146{background:linear-gradient(#0000 0px,#0000 245px,#9600ff 245px,#9600ff 310.5px,#00f 310.8px,#0ff 311px,#0f0 311.3px,#cf0 311.5px,#ff0 311.7px,#f00 312.5px,#f00 322.5px,#ff9f00 323.5px,#ff0 323.7px,#0f0 324.2px,#00ff8e 324.5px,#0ff 324.7px,#00f 325.1px,#9600ff 325.5px,#7e00ff 327.5px,#8100ff 384.5px,#5200ff 385.5px,#8900ff 389.5px,#9600ff 394.5px,#9600ff 437.5px,#7300ff 438.5px,#00f 439.7px,#0090ff 440.5px,#0ff 441px,#0f0 442.2px,#ff0 443.4px,#ffe700 443.5px,#ffa600 444.5px,#ffa600 446.5px,#ffdf00 447.5px,#ff0 447.6px,#0f0 448.7px,#0ff 449.7px,#00f 450.8px,#6a00ff 451.5px,#9600ff 452.5px,#9600ff 458px,#0000 458px,#0000 490px)}
.c147{background:linear-gradient(#0000 0px,#0000 245px,#9600ff 245px,#9600ff 310.5px,#00f 310.8px,#0ff 311px,#0f0 311.3px,#cf0 311.5px,#ff0 311.7px,#f00 312.5px,#f00 322.5px,#ff9f00 323.5px,#ff0 323.7px,#0f0 324.2px,#00ff8e 324.5px,#0ff 324.7px,#00f 325.1px,#9600ff 325.5px,#7500ff 327.5px,#7a00ff 382.5px,#5600ff 386.5px,#8a00ff 389.5px,#9600ff 394.5px,#9600ff 438.5px,#6500ff 439.5px,#00f 440.5px,#00a8ff 441.5px,#0ff 441.9px,#0f0 443px,#7dff00 443.5px,#ff0 444.3px,#fd0 444.5px,#ffa600 445.5px,#ffa600 447.5px,#ffec00 448.5px,#ff0 448.6px,#0f0 449.6px,#0ff 450.5px,#0003ff 451.5px,#00f 451.5px,#7c00ff 452.5px,#9600ff 453.5px,#9600ff 460px,#0000 460px,#0000 490px)}
.c148{background:linear-gradient(#0000 0px,#0000 245px,#9600ff 245px,#9600ff 310.5px,#00f 310.8px,#0ff 311px,#0f0 311.3px,#cf0 311.5px,#ff0 311.7px,#f00 312.5px,#f00 322.5px,#ff9f00 323.5px,#ff0 323.7px,#0f0 324.2px,#00ff8e 324.5px,#0ff 324.7px,#00f 325.1px,#9600ff 325.5px,#9600ff 326.5px,#6700ff 327.5px,#6000ff 384.5px,#9600ff 394.5px,#9600ff 438.5px,#6200ff 439.5px,#00f 440.5px,#00adff 441.5px,#0ff 441.8px,#0f0 442.9px,#84ff00 443.5px,#ff0 444.3px,#ffdb00 444.5px,#ffa600 445.5px,#ffa600 447.5px,#ffef00 448.5px,#ff0 448.6px,#0f0 449.5px,#0ff 450.5px,#00f 451.5px,#0200ff 451.5px,#7f00ff 452.5px,#9600ff 453.5px,#9600ff 459px,#0000 459px,#0000 490px)}
.c149{background:linear-gradient(#0000 0px,#0000 245px,#9600ff 245px,#9600ff 310.5px,#00f 310.8px,#0ff 311px,#0f0 311.3px,#cf0 311.5px,#ff0 311.7px,#f00 312.5px,#f00 322.5px,#ff9f00 323.5px,#ff0 323.7px,#0f0 324.2px,#00ff8e 324.5px,#0ff 324.7px,#00f 325.1px,#9600ff 325.5px,#7600ff 386.5px,#9600ff 394.5px,#9600ff 437.5px,#7800ff 438.5px,#00f 439.7px,#08f 440.5px,#0ff 441.1px,#0f0 442.2px,#ff0 443.4px,#ffeb00 443.5px,#ffa600 444.5px,#ffa600 445.5px,#ffdb00 447.5px,#ff0 447.6px,#0f0 448.7px,#0ff 449.8px,#00f 450.8px,#6400ff 451.5px,#9600ff 452.5px,#9600ff 458px,#0000 458px,#0000 490px)}
.c150{background:linear-gradient(#0000 0px,#0000 246px,#9600ff 246px,#9600ff 310.5px,#00f 310.8px,#0ff 311px,#0f0 311.3px,#cf0 311.5px,#ff0 311.7px,#f00 312.5px,#f00 322.5px,#ff9f00 323.5px,#ff0 323.7px,#0f0 324.2px,#00ff8e 324.5px,#0ff 324.7px,#00f 325.1px,#9600ff 325.5px,#8900ff 382.5px,#6d00ff 386.5px,#8b00ff 388.5px,#9600ff 394.5px,#9600ff 437.5px,#7400ff 438.5px,#00f 439.7px,#008eff 440.5px,#0ff 441px,#0f0 442.2px,#ff0 443.4px,#ffe800 443.5px,#ffa600 444.5px,#ffa600 446.5px,#ffdf00 447.5px,#ff0 447.6px,#0f0 448.7px,#0ff 449.7px,#00f 450.8px,#6800ff 451.5px,#9600ff 452.5px,#9600ff 459px,#0000 459px,#0000 490px)}
.c151{background:linear-gradient(#0000 0px,#0000 246px,#9600ff 246px,#9600ff 310.5px,#00f 310.8px,#0ff 311px,#0f0 311.3px,#cf0 311.5px,#ff0 311.7px,#f00 312.5px,#f00 322.5px,#ff9f00 323.5px,#ff0 323.7px,#0f0 324.2px,#00ff8e 324.5px,#0ff 324.7px,#00f 325.1px,#9600ff 325.5px,#7600ff 327.5px,#9600ff 437.5px,#8400ff 438.5px,#00f 439.8px,#0074ff 440.5px,#0ff 441.2px,#00ffd0 441.5px,#0f0 442.3px,#ff0 443.4px,#ffdb00 443.5px,#ff1700 444.5px,#f00 446.5px,#ff7c00 447.5px,#ff0 448px,#0f0 448.9px,#00ffaf 449.5px,#0ff 449.8px,#00f 450.9px,#5600ff 451.5px,#9600ff 452.5px,#9600ff 459px,#0000 459px,#0000 490px)}
.c152{background:linear-gradient(#0000 0px,#0000 246px,#9600ff 246px,#9600ff 310.5px,#00f 310.8px,#0ff 311px,#0f0 311.3px,#cf0 311.5px,#ff0 311.7px,#f00 312.5px,#f00 322.5px,#ff9f00 323.5px,#ff0 323.7px,#0f0 324.2px,#00ff8e 324.5px,#0ff 324.7px,#00f 325.1px,#9600ff 325.5px,#7d00ff 387.5px,#9400ff 390.5px,#9600ff 438.5px,#00f 440px,#00f6ff 441.5px,#0ff 441.5px,#0f0 442.5px,#f1ff00 443.5px,#ff0 443.8px,#ffa600 445.5px,#ffbc00 447.5px,#ff0 448px,#b1ff00 448.5px,#0f0 449.2px,#0ff 450.2px,#00f 451.1px,#3800ff 451.5px,#9600ff 452.5px,#9600ff 459px,#0000 459px,#0000 490px)}
.c153{background:linear-gradient(#0000 0px,#0000 245px,#9600ff 245px,#9600ff 310.5px,#00f 310.8px,#0ff 311px,#0f0 311.3px,#cf0 311.5px,#ff0 311.7px,#f00 312.5px,#f00 322.5px,#ff9f00 323.5px,#ff0 323.7px,#0f0 324.2px,#00ff8e 324.5px,#0ff 324.7px,#00f 325.1px,#9600ff 325.5px,#8b00ff 382.5px,#7200ff 387.5px,#9100ff 389.5px,#9600ff 394.5px,#9600ff 438.5px,#5f00ff 439.5px,#00f 440.4px,#00b3ff 441.5px,#0ff 441.8px,#0f0 442.9px,#ff0 444px,#ff9300 444.5px,#f00 445.5px,#f00 447.5px,#ffd900 448.5px,#ff0 448.6px,#0f0 449.5px,#00ff0d 449.5px,#0ff 450.5px,#00f 451.5px,#0600ff 451.5px,#8300ff 452.5px,#9600ff 458.5px,#9600ff 459px,#0000 459px,#0000 490px)}
.c154{background:linear-gradient(#0000 0px,#0000 246px,#9600ff 246px,#9600ff 310.5px,#00f 310.8px,#0ff 311px,#0f0 311.3px,#cf0 311.5px,#ff0 311.7px,#f00 312.5px,#f00 322.5px,#ff9f00 323.5px,#ff0 323.7px,#0f0 324.2px,#00ff8e 324.5px,#0ff 324.7px,#00f 325.1px,#9600ff 325.5px,#9600ff 326.5px,#6800ff 327.5px,#6800ff 380.5px,#9600ff 394.5px,#9600ff 437.5px,#7800ff 438.5px,#00f 439.7px,#08f 440.5px,#0ff 441.1px,#0f0 442.2px,#ff0 443.4px,#ffea00 443.5px,#ffa600 444.5px,#ffa600 445.5px,#ffdb00 447.5px,#ff0 447.6px,#0f0 448.7px,#0ff 449.7px,#00f 450.8px,#6400ff 451.5px,#9600ff 452.5px,#9600ff 460px,#0000 460px,#0000 490px)}
</style></head><body>
<div id="menu">
<span style="left:7px">Файл</span><span style="left:51px">Вертик.</span><span style="left:108px">Развертка</span><span style="left:181px">Синхронизация</span><span style="left:285px">Экран</span><span style="left:335px">Курсоры</span><span style="left:397px">Измерения</span><span style="left:477px">Матем.</span><span style="left:530px">Анализ</span><span style="left:586px">Утилиты</span><span style="left:648px">Помощь</span>
</div>
<div id="grid"></div>
<div class="vl" style="left:94px"></div>
<div class="vl" style="left:171px"></div>
<div class="vl" style="left:248px"></div>
<div class="vl" style="left:326px"></div>
<div style="position:absolute;left:403px;top:39px;width:1px;height:488px;background:#808080"></div>
<div class="vl" style="left:480px"></div>
<div class="vl" style="left:558px"></div>
<div class="vl" style="left:635px"></div>
<div class="vl" style="left:712px"></div>
<div class="hl" style="top:99px"></div>
<div class="hl" style="top:160px"></div>
<div class="hl" style="top:221px"></div>
<div style="position:absolute;left:18px;top:283px;width:771px;height:1px;background:#808080"></div>
<div class="hl" style="top:343px"></div>
<div class="hl" style="top:404px"></div>
<div class="hl" style="top:465px"></div>
<div style="position:absolute;left:401px;top:50px;width:5px;height:1px;background:#808080"></div>
<div style="position:absolute;left:401px;top:62px;width:5px;height:1px;background:#808080"></div>
<div style="position:absolute;left:401px;top:74px;width:5px;height:1px;background:#808080"></div>
<div style="position:absolute;left:401px;top:86px;width:5px;height:1px;background:#808080"></div>
<div style="position:absolute;left:401px;top:111px;width:5px;height:1px;background:#808080"></div>
<div style="position:absolute;left:401px;top:123px;width:5px;height:1px;background:#808080"></div>
<div style="position:absolute;left:401px;top:135px;width:5px;height:1px;background:#808080"></div>
<div style="position:absolute;left:401px;top:148px;width:5px;height:1px;background:#808080"></div>
<div style="position:absolute;left:401px;top:172px;width:5px;height:1px;background:#808080"></div>
<div style="position:absolute;left:401px;top:184px;width:5px;height:1px;background:#808080"></div>
<div style="position:absolute;left:401px;top:196px;width:5px;height:1px;background:#808080"></div>
<div style="position:absolute;left:401px;top:209px;width:5px;height:1px;background:#808080"></div>
<div style="position:absolute;left:401px;top:233px;width:5px;height:1px;background:#808080"></div>
<div style="position:absolute;left:401px;top:245px;width:5px;height:1px;background:#808080"></div>
<div style="position:absolute;left:401px;top:258px;width:5px;height:1px;background:#808080"></div>
<div style="position:absolute;left:401px;top:270px;width:5px;height:1px;background:#808080"></div>
<div style="position:absolute;left:401px;top:294px;width:5px;height:1px;background:#808080"></div>
<div style="position:absolute;left:401px;top:306px;width:5px;height:1px;background:#808080"></div>
<div style="position:absolute;left:401px;top:319px;width:5px;height:1px;background:#808080"></div>
<div style="position:absolute;left:401px;top:331px;width:5px;height:1px;background:#808080"></div>
<div style="position:absolute;left:401px;top:355px;width:5px;height:1px;background:#808080"></div>
<div style="position:absolute;left:401px;top:368px;width:5px;height:1px;background:#808080"></div>
<div style="position:absolute;left:401px;top:380px;width:5px;height:1px;background:#808080"></div>
<div style="position:absolute;left:401px;top:392px;width:5px;height:1px;background:#808080"></div>
<div style="position:absolute;left:401px;top:416px;width:5px;height:1px;background:#808080"></div>
<div style="position:absolute;left:401px;top:429px;width:5px;height:1px;background:#808080"></div>
<div style="position:absolute;left:401px;top:441px;width:5px;height:1px;background:#808080"></div>
<div style="position:absolute;left:401px;top:453px;width:5px;height:1px;background:#808080"></div>
<div style="position:absolute;left:401px;top:478px;width:5px;height:1px;background:#808080"></div>
<div style="position:absolute;left:401px;top:490px;width:5px;height:1px;background:#808080"></div>
<div style="position:absolute;left:401px;top:502px;width:5px;height:1px;background:#808080"></div>
<div style="position:absolute;left:401px;top:514px;width:5px;height:1px;background:#808080"></div>
<div style="position:absolute;left:32px;top:281px;width:1px;height:5px;background:#808080"></div>
<div style="position:absolute;left:47px;top:281px;width:1px;height:5px;background:#808080"></div>
<div style="position:absolute;left:63px;top:281px;width:1px;height:5px;background:#808080"></div>
<div style="position:absolute;left:78px;top:281px;width:1px;height:5px;background:#808080"></div>
<div style="position:absolute;left:109px;top:281px;width:1px;height:5px;background:#808080"></div>
<div style="position:absolute;left:125px;top:281px;width:1px;height:5px;background:#808080"></div>
<div style="position:absolute;left:140px;top:281px;width:1px;height:5px;background:#808080"></div>
<div style="position:absolute;left:156px;top:281px;width:1px;height:5px;background:#808080"></div>
<div style="position:absolute;left:187px;top:281px;width:1px;height:5px;background:#808080"></div>
<div style="position:absolute;left:202px;top:281px;width:1px;height:5px;background:#808080"></div>
<div style="position:absolute;left:217px;top:281px;width:1px;height:5px;background:#808080"></div>
<div style="position:absolute;left:233px;top:281px;width:1px;height:5px;background:#808080"></div>
<div style="position:absolute;left:264px;top:281px;width:1px;height:5px;background:#808080"></div>
<div style="position:absolute;left:279px;top:281px;width:1px;height:5px;background:#808080"></div>
<div style="position:absolute;left:295px;top:281px;width:1px;height:5px;background:#808080"></div>
<div style="position:absolute;left:310px;top:281px;width:1px;height:5px;background:#808080"></div>
<div style="position:absolute;left:341px;top:281px;width:1px;height:5px;background:#808080"></div>
<div style="position:absolute;left:357px;top:281px;width:1px;height:5px;background:#808080"></div>
<div style="position:absolute;left:372px;top:281px;width:1px;height:5px;background:#808080"></div>
<div style="position:absolute;left:388px;top:281px;width:1px;height:5px;background:#808080"></div>
<div style="position:absolute;left:418px;top:281px;width:1px;height:5px;background:#808080"></div>
<div style="position:absolute;left:434px;top:281px;width:1px;height:5px;background:#808080"></div>
<div style="position:absolute;left:449px;top:281px;width:1px;height:5px;background:#808080"></div>
<div style="position:absolute;left:465px;top:281px;width:1px;height:5px;background:#808080"></div>
<div style="position:absolute;left:496px;top:281px;width:1px;height:5px;background:#808080"></div>
<div style="position:absolute;left:511px;top:281px;width:1px;height:5px;background:#808080"></div>
<div style="position:absolute;left:527px;top:281px;width:1px;height:5px;background:#808080"></div>
<div style="position:absolute;left:542px;top:281px;width:1px;height:5px;background:#808080"></div>
<div style="position:absolute;left:573px;top:281px;width:1px;height:5px;background:#808080"></div>
<div style="position:absolute;left:589px;top:281px;width:1px;height:5px;background:#808080"></div>
<div style="position:absolute;left:604px;top:281px;width:1px;height:5px;background:#808080"></div>
<div style="position:absolute;left:619px;top:281px;width:1px;height:5px;background:#808080"></div>
<div style="position:absolute;left:650px;top:281px;width:1px;height:5px;background:#808080"></div>
<div style="position:absolute;left:666px;top:281px;width:1px;height:5px;background:#808080"></div>
<div style="position:absolute;left:681px;top:281px;width:1px;height:5px;background:#808080"></div>
<div style="position:absolute;left:697px;top:281px;width:1px;height:5px;background:#808080"></div>
<div style="position:absolute;left:728px;top:281px;width:1px;height:5px;background:#808080"></div>
<div style="position:absolute;left:743px;top:281px;width:1px;height:5px;background:#808080"></div>
<div style="position:absolute;left:759px;top:281px;width:1px;height:5px;background:#808080"></div>
<div style="position:absolute;left:774px;top:281px;width:1px;height:5px;background:#808080"></div>
<div style="position:absolute;left:32px;top:129px;width:1px;height:1px;background:#a4a4a4"></div>
<div style="position:absolute;left:47px;top:129px;width:1px;height:1px;background:#a4a4a4"></div>
<div style="position:absolute;left:63px;top:129px;width:1px;height:1px;background:#a4a4a4"></div>
<div style="position:absolute;left:78px;top:129px;width:1px;height:1px;background:#a4a4a4"></div>
<div style="position:absolute;left:94px;top:129px;width:1px;height:1px;background:#a4a4a4"></div>
<div style="position:absolute;left:109px;top:129px;width:1px;height:1px;background:#a4a4a4"></div>
<div style="position:absolute;left:125px;top:129px;width:1px;height:1px;background:#a4a4a4"></div>
<div style="position:absolute;left:140px;top:129px;width:1px;height:1px;background:#a4a4a4"></div>
<div style="position:absolute;left:156px;top:129px;width:1px;height:1px;background:#a4a4a4"></div>
<div style="position:absolute;left:171px;top:129px;width:1px;height:1px;background:#a4a4a4"></div>
<div style="position:absolute;left:187px;top:129px;width:1px;height:1px;background:#a4a4a4"></div>
<div style="position:absolute;left:202px;top:129px;width:1px;height:1px;background:#a4a4a4"></div>
<div style="position:absolute;left:217px;top:129px;width:1px;height:1px;background:#a4a4a4"></div>
<div style="position:absolute;left:233px;top:129px;width:1px;height:1px;background:#a4a4a4"></div>
<div style="position:absolute;left:248px;top:129px;width:1px;height:1px;background:#a4a4a4"></div>
<div style="position:absolute;left:264px;top:129px;width:1px;height:1px;background:#a4a4a4"></div>
<div style="position:absolute;left:279px;top:129px;width:1px;height:1px;background:#a4a4a4"></div>
<div style="position:absolute;left:295px;top:129px;width:1px;height:1px;background:#a4a4a4"></div>
<div style="position:absolute;left:310px;top:129px;width:1px;height:1px;background:#a4a4a4"></div>
<div style="position:absolute;left:326px;top:129px;width:1px;height:1px;background:#a4a4a4"></div>
<div style="position:absolute;left:341px;top:129px;width:1px;height:1px;background:#a4a4a4"></div>
<div style="position:absolute;left:357px;top:129px;width:1px;height:1px;background:#a4a4a4"></div>
<div style="position:absolute;left:372px;top:129px;width:1px;height:1px;background:#a4a4a4"></div>
<div style="position:absolute;left:388px;top:129px;width:1px;height:1px;background:#a4a4a4"></div>
<div style="position:absolute;left:403px;top:129px;width:1px;height:1px;background:#a4a4a4"></div>
<div style="position:absolute;left:418px;top:129px;width:1px;height:1px;background:#a4a4a4"></div>
<div style="position:absolute;left:434px;top:129px;width:1px;height:1px;background:#a4a4a4"></div>
<div style="position:absolute;left:449px;top:129px;width:1px;height:1px;background:#a4a4a4"></div>
<div style="position:absolute;left:465px;top:129px;width:1px;height:1px;background:#a4a4a4"></div>
<div style="position:absolute;left:480px;top:129px;width:1px;height:1px;background:#a4a4a4"></div>
<div style="position:absolute;left:496px;top:129px;width:1px;height:1px;background:#a4a4a4"></div>
<div style="position:absolute;left:511px;top:129px;width:1px;height:1px;background:#a4a4a4"></div>
<div style="position:absolute;left:527px;top:129px;width:1px;height:1px;background:#a4a4a4"></div>
<div style="position:absolute;left:542px;top:129px;width:1px;height:1px;background:#a4a4a4"></div>
<div style="position:absolute;left:558px;top:129px;width:1px;height:1px;background:#a4a4a4"></div>
<div style="position:absolute;left:573px;top:129px;width:1px;height:1px;background:#a4a4a4"></div>
<div style="position:absolute;left:589px;top:129px;width:1px;height:1px;background:#a4a4a4"></div>
<div style="position:absolute;left:604px;top:129px;width:1px;height:1px;background:#a4a4a4"></div>
<div style="position:absolute;left:619px;top:129px;width:1px;height:1px;background:#a4a4a4"></div>
<div style="position:absolute;left:635px;top:129px;width:1px;height:1px;background:#a4a4a4"></div>
<div style="position:absolute;left:650px;top:129px;width:1px;height:1px;background:#a4a4a4"></div>
<div style="position:absolute;left:666px;top:129px;width:1px;height:1px;background:#a4a4a4"></div>
<div style="position:absolute;left:681px;top:129px;width:1px;height:1px;background:#a4a4a4"></div>
<div style="position:absolute;left:697px;top:129px;width:1px;height:1px;background:#a4a4a4"></div>
<div style="position:absolute;left:712px;top:129px;width:1px;height:1px;background:#a4a4a4"></div>
<div style="position:absolute;left:728px;top:129px;width:1px;height:1px;background:#a4a4a4"></div>
<div style="position:absolute;left:743px;top:129px;width:1px;height:1px;background:#a4a4a4"></div>
<div style="position:absolute;left:759px;top:129px;width:1px;height:1px;background:#a4a4a4"></div>
<div style="position:absolute;left:774px;top:129px;width:1px;height:1px;background:#a4a4a4"></div>
<div id="wave">
<div class="per" style="left:0px"><i class="c75"></i><i class="c76"></i><i class="c77"></i><i class="c78"></i><i class="c79"></i><i class="c80"></i><i class="c81"></i><i class="c82"></i><i class="c83"></i><i class="c84"></i><i class="c85"></i><i class="c86"></i><i class="c87"></i><i class="c88"></i><i class="c89"></i><i class="c90"></i><i class="c91"></i><i class="c92"></i><i class="c93"></i><i class="c94"></i><i class="c95"></i><i class="c96"></i><i class="c97"></i><i class="c98"></i><i class="c99"></i><i class="c100"></i><i class="c101"></i><i class="c102"></i><i class="c103"></i><i class="c104"></i><i class="c105"></i><i class="c106"></i><i class="c107"></i><i class="c108"></i><i class="c109"></i><i class="c110"></i><i class="c111"></i><i class="c112"></i><i class="c113"></i><i class="c114"></i><i class="c115"></i><i class="c116"></i><i class="c117"></i><i class="c118"></i><i class="c119"></i><i class="c120"></i><i class="c121"></i><i class="c122"></i><i class="c123"></i><i class="c124"></i><i class="c125"></i><i class="c126"></i><i class="c127"></i><i class="c128"></i><i class="c129"></i><i class="c130"></i><i class="c131"></i><i class="c132"></i><i class="c133"></i><i class="c134"></i><i class="c135"></i><i class="c136"></i><i class="c137"></i><i class="c138"></i><i class="c139"></i><i class="c140"></i><i class="c141"></i><i class="c142"></i><i class="c143"></i><i class="c144"></i><i class="c145"></i><i class="c146"></i><i class="c147"></i><i class="c148"></i><i class="c149"></i><i class="c150"></i><i class="c151"></i><i class="c152"></i><i class="c153"></i><i class="c154"></i></div>
<div class="per" style="left:80px"><i class="c0"></i><i class="c1"></i><i class="c2"></i><i class="c3"></i><i class="c4"></i><i class="c5"></i><i class="c6"></i><i class="c7"></i><i class="c8"></i><i class="c9"></i><i class="c10"></i><i class="c11"></i><i class="c12"></i><i class="c13"></i><i class="c14"></i><i class="c15"></i><i class="c16"></i><i class="c17"></i><i class="c18"></i><i class="c19"></i><i class="c20"></i><i class="c21"></i><i class="c22"></i><i class="c23"></i><i class="c24"></i><i class="c25"></i><i class="c26"></i><i class="c27"></i><i class="c28"></i><i class="c29"></i><i class="c30"></i><i class="c31"></i><i class="c32"></i><i class="c33"></i><i class="c34"></i><i class="c35"></i><i class="c36"></i><i class="c37"></i><i class="c38"></i><i class="c39"></i><i class="c40"></i><i class="c41"></i><i class="c42"></i><i class="c43"></i><i class="c44"></i><i class="c45"></i><i class="c46"></i><i class="c47"></i><i class="c48"></i><i class="c49"></i><i class="c50"></i><i class="c51"></i><i class="c52"></i><i class="c53"></i><i class="c54"></i><i class="c55"></i><i class="c56"></i><i class="c57"></i><i class="c58"></i><i class="c59"></i><i class="c60"></i><i class="c61"></i><i class="c62"></i><i class="c63"></i><i class="c64"></i><i class="c65"></i><i class="c66"></i><i class="c67"></i><i class="c68"></i><i class="c69"></i><i class="c70"></i><i class="c71"></i><i class="c72"></i><i class="c73"></i><i class="c74"></i><i class="c75"></i><i class="c76"></i><i class="c77"></i><i class="c78"></i><i class="c79"></i><i class="c80"></i><i class="c81"></i><i class="c82"></i><i class="c83"></i><i class="c84"></i><i class="c85"></i><i class="c86"></i><i class="c87"></i><i class="c88"></i><i class="c89"></i><i class="c90"></i><i class="c91"></i><i class="c92"></i><i class="c93"></i><i class="c94"></i><i class="c95"></i><i class="c96"></i><i class="c97"></i><i class="c98"></i><i class="c99"></i><i class="c100"></i><i class="c101"></i><i class="c102"></i><i class="c103"></i><i class="c104"></i><i class="c105"></i><i class="c106"></i><i class="c107"></i><i class="c108"></i><i class="c109"></i><i class="c110"></i><i class="c111"></i><i class="c112"></i><i class="c113"></i><i class="c114"></i><i class="c115"></i><i class="c116"></i><i class="c117"></i><i class="c118"></i><i class="c119"></i><i class="c120"></i><i class="c121"></i><i class="c122"></i><i class="c123"></i><i class="c124"></i><i class="c125"></i><i class="c126"></i><i class="c127"></i><i class="c128"></i><i class="c129"></i><i class="c130"></i><i class="c131"></i><i class="c132"></i><i class="c133"></i><i class="c134"></i><i class="c135"></i><i class="c136"></i><i class="c137"></i><i class="c138"></i><i class="c139"></i><i class="c140"></i><i class="c141"></i><i class="c142"></i><i class="c143"></i><i class="c144"></i><i class="c145"></i><i class="c146"></i><i class="c147"></i><i class="c148"></i><i class="c149"></i><i class="c150"></i><i class="c151"></i><i class="c152"></i><i class="c153"></i><i class="c154"></i></div>
<div class="per" style="left:235px"><i class="c0"></i><i class="c1"></i><i class="c2"></i><i class="c3"></i><i class="c4"></i><i class="c5"></i><i class="c6"></i><i class="c7"></i><i class="c8"></i><i class="c9"></i><i class="c10"></i><i class="c11"></i><i class="c12"></i><i class="c13"></i><i class="c14"></i><i class="c15"></i><i class="c16"></i><i class="c17"></i><i class="c18"></i><i class="c19"></i><i class="c20"></i><i class="c21"></i><i class="c22"></i><i class="c23"></i><i class="c24"></i><i class="c25"></i><i class="c26"></i><i class="c27"></i><i class="c28"></i><i class="c29"></i><i class="c30"></i><i class="c31"></i><i class="c32"></i><i class="c33"></i><i class="c34"></i><i class="c35"></i><i class="c36"></i><i class="c37"></i><i class="c38"></i><i class="c39"></i><i class="c40"></i><i class="c41"></i><i class="c42"></i><i class="c43"></i><i class="c44"></i><i class="c45"></i><i class="c46"></i><i class="c47"></i><i class="c48"></i><i class="c49"></i><i class="c50"></i><i class="c51"></i><i class="c52"></i><i class="c53"></i><i class="c54"></i><i class="c55"></i><i class="c56"></i><i class="c57"></i><i class="c58"></i><i class="c59"></i><i class="c60"></i><i class="c61"></i><i class="c62"></i><i class="c63"></i><i class="c64"></i><i class="c65"></i><i class="c66"></i><i class="c67"></i><i class="c68"></i><i class="c69"></i><i class="c70"></i><i class="c71"></i><i class="c72"></i><i class="c73"></i><i class="c74"></i><i class="c75"></i><i class="c76"></i><i class="c77"></i><i class="c78"></i><i class="c79"></i><i class="c80"></i><i class="c81"></i><i class="c82"></i><i class="c83"></i><i class="c84"></i><i class="c85"></i><i class="c86"></i><i class="c87"></i><i class="c88"></i><i class="c89"></i><i class="c90"></i><i class="c91"></i><i class="c92"></i><i class="c93"></i><i class="c94"></i><i class="c95"></i><i class="c96"></i><i class="c97"></i><i class="c98"></i><i class="c99"></i><i class="c100"></i><i class="c101"></i><i class="c102"></i><i class="c103"></i><i class="c104"></i><i class="c105"></i><i class="c106"></i><i class="c107"></i><i class="c108"></i><i class="c109"></i><i class="c110"></i><i class="c111"></i><i class="c112"></i><i class="c113"></i><i class="c114"></i><i class="c115"></i><i class="c116"></i><i class="c117"></i><i class="c118"></i><i class="c119"></i><i class="c120"></i><i class="c121"></i><i class="c122"></i><i class="c123"></i><i class="c124"></i><i class="c125"></i><i class="c126"></i><i class="c127"></i><i class="c128"></i><i class="c129"></i><i class="c130"></i><i class="c131"></i><i class="c132"></i><i class="c133"></i><i class="c134"></i><i class="c135"></i><i class="c136"></i><i class="c137"></i><i class="c138"></i><i class="c139"></i><i class="c140"></i><i class="c141"></i><i class="c142"></i><i class="c143"></i><i class="c144"></i><i class="c145"></i><i class="c146"></i><i class="c147"></i><i class="c148"></i><i class="c149"></i><i class="c150"></i><i class="c151"></i><i class="c152"></i><i class="c153"></i><i class="c154"></i></div>
<div class="per" style="left:389px"><i class="c0"></i><i class="c1"></i><i class="c2"></i><i class="c3"></i><i class="c4"></i><i class="c5"></i><i class="c6"></i><i class="c7"></i><i class="c8"></i><i class="c9"></i><i class="c10"></i><i class="c11"></i><i class="c12"></i><i class="c13"></i><i class="c14"></i><i class="c15"></i><i class="c16"></i><i class="c17"></i><i class="c18"></i><i class="c19"></i><i class="c20"></i><i class="c21"></i><i class="c22"></i><i class="c23"></i><i class="c24"></i><i class="c25"></i><i class="c26"></i><i class="c27"></i><i class="c28"></i><i class="c29"></i><i class="c30"></i><i class="c31"></i><i class="c32"></i><i class="c33"></i><i class="c34"></i><i class="c35"></i><i class="c36"></i><i class="c37"></i><i class="c38"></i><i class="c39"></i><i class="c40"></i><i class="c41"></i><i class="c42"></i><i class="c43"></i><i class="c44"></i><i class="c45"></i><i class="c46"></i><i class="c47"></i><i class="c48"></i><i class="c49"></i><i class="c50"></i><i class="c51"></i><i class="c52"></i><i class="c53"></i><i class="c54"></i><i class="c55"></i><i class="c56"></i><i class="c57"></i><i class="c58"></i><i class="c59"></i><i class="c60"></i><i class="c61"></i><i class="c62"></i><i class="c63"></i><i class="c64"></i><i class="c65"></i><i class="c66"></i><i class="c67"></i><i class="c68"></i><i class="c69"></i><i class="c70"></i><i class="c71"></i><i class="c72"></i><i class="c73"></i><i class="c74"></i><i class="c75"></i><i class="c76"></i><i class="c77"></i><i class="c78"></i><i class="c79"></i><i class="c80"></i><i class="c81"></i><i class="c82"></i><i class="c83"></i><i class="c84"></i><i class="c85"></i><i class="c86"></i><i class="c87"></i><i class="c88"></i><i class="c89"></i><i class="c90"></i><i class="c91"></i><i class="c92"></i><i class="c93"></i><i class="c94"></i><i class="c95"></i><i class="c96"></i><i class="c97"></i><i class="c98"></i><i class="c99"></i><i class="c100"></i><i class="c101"></i><i class="c102"></i><i class="c103"></i><i class="c104"></i><i class="c105"></i><i class="c106"></i><i class="c107"></i><i class="c108"></i><i class="c109"></i><i class="c110"></i><i class="c111"></i><i class="c112"></i><i class="c113"></i><i class="c114"></i><i class="c115"></i><i class="c116"></i><i class="c117"></i><i class="c118"></i><i class="c119"></i><i class="c120"></i><i class="c121"></i><i class="c122"></i><i class="c123"></i><i class="c124"></i><i class="c125"></i><i class="c126"></i><i class="c127"></i><i class="c128"></i><i class="c129"></i><i class="c130"></i><i class="c131"></i><i class="c132"></i><i class="c133"></i><i class="c134"></i><i class="c135"></i><i class="c136"></i><i class="c137"></i><i class="c138"></i><i class="c139"></i><i class="c140"></i><i class="c141"></i><i class="c142"></i><i class="c143"></i><i class="c144"></i><i class="c145"></i><i class="c146"></i><i class="c147"></i><i class="c148"></i><i class="c149"></i><i class="c150"></i><i class="c151"></i><i class="c152"></i><i class="c153"></i><i class="c154"></i></div>
<div class="per" style="left:544px"><i class="c0"></i><i class="c1"></i><i class="c2"></i><i class="c3"></i><i class="c4"></i><i class="c5"></i><i class="c6"></i><i class="c7"></i><i class="c8"></i><i class="c9"></i><i class="c10"></i><i class="c11"></i><i class="c12"></i><i class="c13"></i><i class="c14"></i><i class="c15"></i><i class="c16"></i><i class="c17"></i><i class="c18"></i><i class="c19"></i><i class="c20"></i><i class="c21"></i><i class="c22"></i><i class="c23"></i><i class="c24"></i><i class="c25"></i><i class="c26"></i><i class="c27"></i><i class="c28"></i><i class="c29"></i><i class="c30"></i><i class="c31"></i><i class="c32"></i><i class="c33"></i><i class="c34"></i><i class="c35"></i><i class="c36"></i><i class="c37"></i><i class="c38"></i><i class="c39"></i><i class="c40"></i><i class="c41"></i><i class="c42"></i><i class="c43"></i><i class="c44"></i><i class="c45"></i><i class="c46"></i><i class="c47"></i><i class="c48"></i><i class="c49"></i><i class="c50"></i><i class="c51"></i><i class="c52"></i><i class="c53"></i><i class="c54"></i><i class="c55"></i><i class="c56"></i><i class="c57"></i><i class="c58"></i><i class="c59"></i><i class="c60"></i><i class="c61"></i><i class="c62"></i><i class="c63"></i><i class="c64"></i><i class="c65"></i><i class="c66"></i><i class="c67"></i><i class="c68"></i><i class="c69"></i><i class="c70"></i><i class="c71"></i><i class="c72"></i><i class="c73"></i><i class="c74"></i><i class="c75"></i><i class="c76"></i><i class="c77"></i><i class="c78"></i><i class="c79"></i><i class="c80"></i><i class="c81"></i><i class="c82"></i><i class="c83"></i><i class="c84"></i><i class="c85"></i><i class="c86"></i><i class="c87"></i><i class="c88"></i><i class="c89"></i><i class="c90"></i><i class="c91"></i><i class="c92"></i><i class="c93"></i><i class="c94"></i><i class="c95"></i><i class="c96"></i><i class="c97"></i><i class="c98"></i><i class="c99"></i><i class="c100"></i><i class="c101"></i><i class="c102"></i><i class="c103"></i><i class="c104"></i><i class="c105"></i><i class="c106"></i><i class="c107"></i><i class="c108"></i><i class="c109"></i><i class="c110"></i><i class="c111"></i><i class="c112"></i><i class="c113"></i><i class="c114"></i><i class="c115"></i><i class="c116"></i><i class="c117"></i><i class="c118"></i><i class="c119"></i><i class="c120"></i><i class="c121"></i><i class="c122"></i><i class="c123"></i><i class="c124"></i><i class="c125"></i><i class="c126"></i><i class="c127"></i><i class="c128"></i><i class="c129"></i><i class="c130"></i><i class="c131"></i><i class="c132"></i><i class="c133"></i><i class="c134"></i><i class="c135"></i><i class="c136"></i><i class="c137"></i><i class="c138"></i><i class="c139"></i><i class="c140"></i><i class="c141"></i><i class="c142"></i><i class="c143"></i><i class="c144"></i><i class="c145"></i><i class="c146"></i><i class="c147"></i><i class="c148"></i><i class="c149"></i><i class="c150"></i><i class="c151"></i><i class="c152"></i><i class="c153"></i><i class="c154"></i></div>
<div class="per" style="left:698px"><i class="c0"></i><i class="c1"></i><i class="c2"></i><i class="c3"></i><i class="c4"></i><i class="c5"></i><i class="c6"></i><i class="c7"></i><i class="c8"></i><i class="c9"></i><i class="c10"></i><i class="c11"></i><i class="c12"></i><i class="c13"></i><i class="c14"></i><i class="c15"></i><i class="c16"></i><i class="c17"></i><i class="c18"></i><i class="c19"></i><i class="c20"></i><i class="c21"></i><i class="c22"></i><i class="c23"></i><i class="c24"></i><i class="c25"></i><i class="c26"></i><i class="c27"></i><i class="c28"></i><i class="c29"></i><i class="c30"></i><i class="c31"></i><i class="c32"></i><i class="c33"></i><i class="c34"></i><i class="c35"></i><i class="c36"></i><i class="c37"></i><i class="c38"></i><i class="c39"></i><i class="c40"></i><i class="c41"></i><i class="c42"></i><i class="c43"></i><i class="c44"></i><i class="c45"></i><i class="c46"></i><i class="c47"></i><i class="c48"></i><i class="c49"></i><i class="c50"></i><i class="c51"></i><i class="c52"></i><i class="c53"></i><i class="c54"></i><i class="c55"></i><i class="c56"></i><i class="c57"></i><i class="c58"></i><i class="c59"></i><i class="c60"></i><i class="c61"></i><i class="c62"></i><i class="c63"></i><i class="c64"></i><i class="c65"></i><i class="c66"></i><i class="c67"></i><i class="c68"></i><i class="c69"></i><i class="c70"></i><i class="c71"></i><i class="c72"></i><i class="c73"></i><i class="c74"></i></div>
<i class="sp" style="left:79px"></i>
<i class="sp" style="left:388px"></i>
<i class="sp" style="left:697px"></i>
</div>

<!-- channel label left -->
<div class="t" style="position:absolute;left:5px;top:345px;font-size:10px;line-height:11px;color:#ffff00;transform:scaleX(.86);transform-origin:0 0;">C1</div>
<div style="position:absolute;left:7px;top:357px;width:10px;height:2px;background:#ffff00"></div>
<div style="position:absolute;left:7px;top:357px;width:1px;height:3px;background:#ffff00"></div>
<svg style="position:absolute;left:788px;top:255px" width="12" height="100" viewBox="0 0 12 100">
<path d="M2.5 8.5 L10 4.5 L10 12.5 Z" fill="#ffff00"/>
<path d="M3 93.5 L9.5 90 L9.5 97 Z" fill="none" stroke="#ffff00" stroke-width="1"/>
</svg>
<svg style="position:absolute;left:399px;top:528px" width="9" height="8" viewBox="0 0 9 8" shape-rendering="crispEdges">
<path d="M4 0h1v2h1v2h1v2h1v2h-7v-2h1v-2h1v-2h1z" fill="#ffff00"/>
</svg>
<!-- C1 box -->
<div style="position:absolute;left:5px;top:539px;width:96px;height:42px;background:#c39ad3;border-radius:3px;"></div>
<div style="position:absolute;left:7px;top:541px;width:93px;height:12px;background:#ffff00;border-radius:2px;"></div>
<div class="t" style="position:absolute;left:8px;top:541px;font-size:10px;line-height:12px;color:#000;">C1</div>
<div class="bdg" style="left:43px;width:25px;">SINX</div>
<div class="bdg" style="left:69px;width:30px;">DC1M</div>
<div class="wr" style="left:5px;width:95px;top:555px;">315 mV/div</div>
<div class="wr" style="left:5px;width:95px;top:568px;">-390.00 mV</div>
<div class="t" style="position:absolute;left:9px;top:580px;font-size:15.5px;line-height:18px;color:#1a1aff;font-weight:bold;letter-spacing:0.2px;">LeCroy</div>
<div style="position:absolute;left:6px;top:597px;width:56px;height:2px;background:#1a1aff"></div>
<!-- timebase box -->
<div class="pb" style="left:583px;width:110px;"></div>
<div class="wh" style="left:585px;width:108px;"></div>
<div class="bk" style="left:586px;">Развертка</div>
<div class="bk" style="left:585px;width:107px;text-align:right;">0.0 ms</div>
<div class="wr" style="left:585px;width:107px;top:554px;">10.0 ms/div</div>
<div class="wr" style="left:585px;width:107px;top:567.5px;text-align:left;">2.00 MS</div>
<div class="wr" style="left:585px;width:107px;top:567.5px;">20 MS/s</div>
<!-- trigger box -->
<div class="pb" style="left:698px;width:95px;"></div>
<div class="wh" style="left:700px;width:93px;"></div>
<div class="bk" style="left:701px;width:77px;overflow:hidden;">Синхронизация</div>
<div class="t" style="position:absolute;left:778px;top:541px;width:15px;height:11px;background:#000;border-radius:3px;color:#fff;font-size:10px;line-height:11px;text-align:center;">C1</div>
<div class="wr" style="left:700px;width:92px;top:554px;text-align:left;">Авто</div>
<div class="wr" style="left:700px;width:92px;top:567.5px;text-align:left;">ТВ</div>
<div class="wr" style="left:700px;width:92px;top:567.5px;">Отриц.</div>
<div class="t" style="position:absolute;left:678px;top:584px;font-size:12px;line-height:14px;letter-spacing:0.08px;color:#fff;white-space:nowrap;">16.11.2005 0:51:51</div>

</body></html>
